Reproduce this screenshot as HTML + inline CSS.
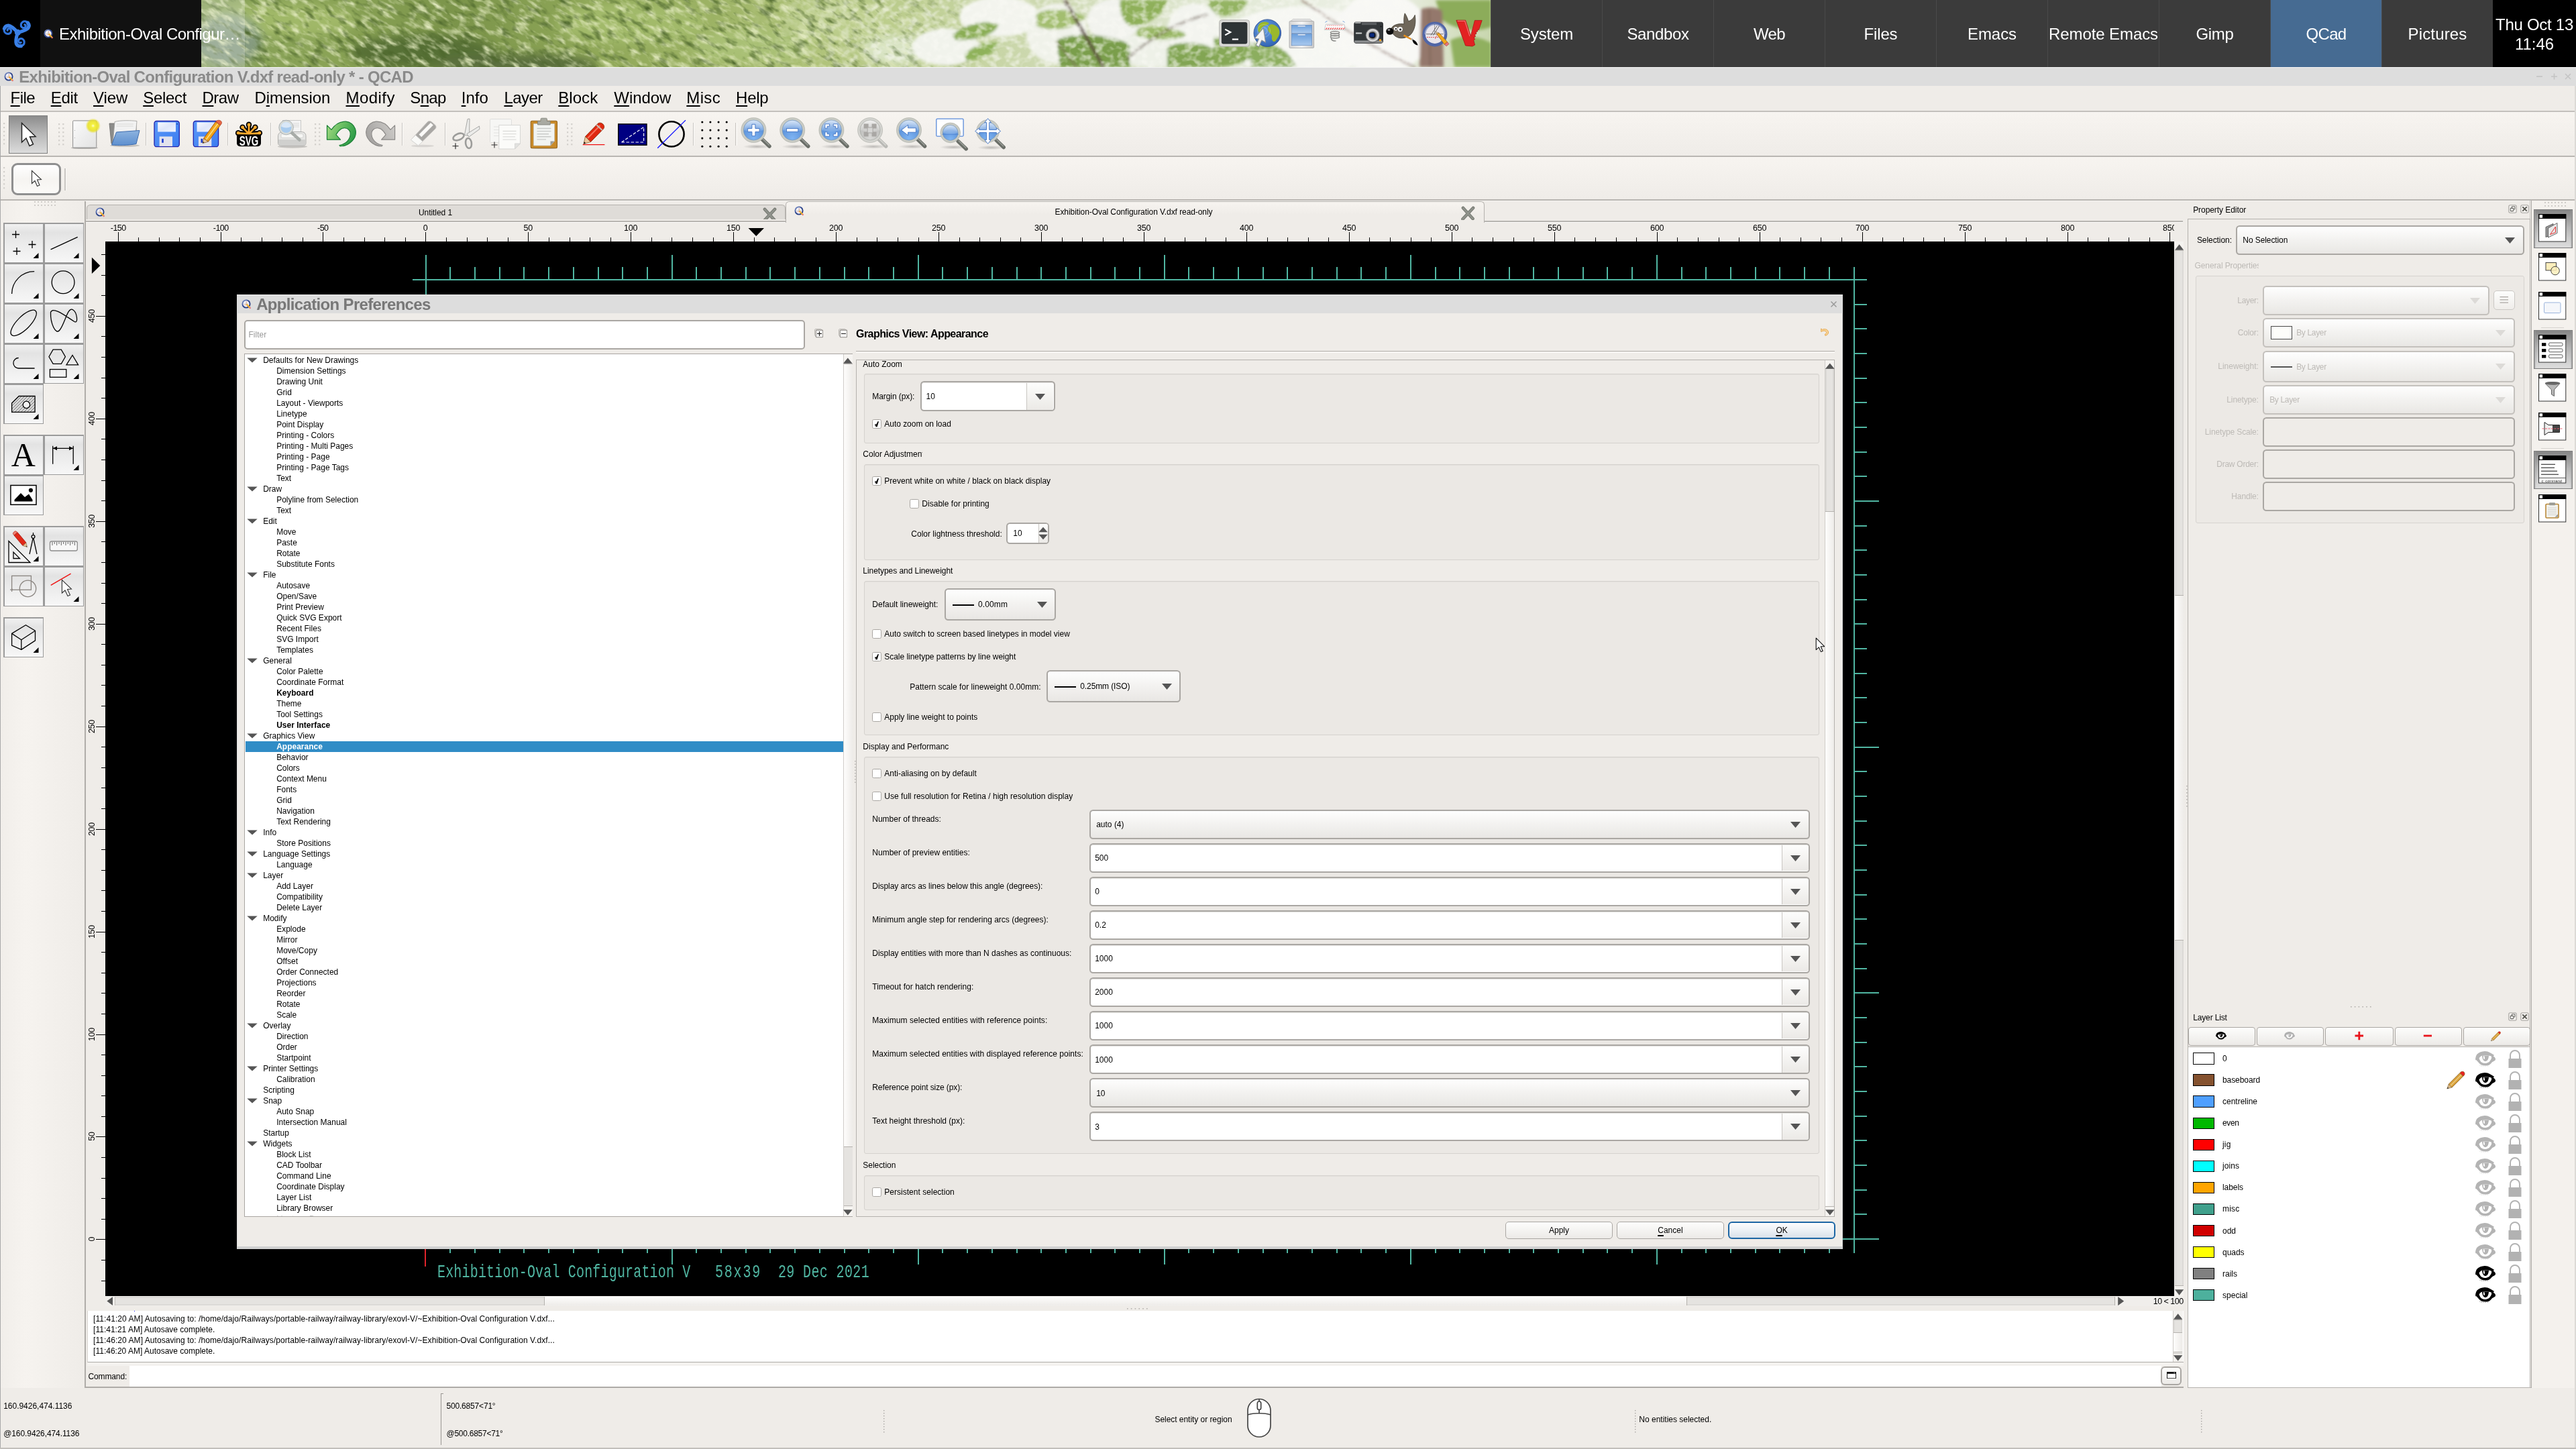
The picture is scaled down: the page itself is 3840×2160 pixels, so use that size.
<!DOCTYPE html>
<html><head><meta charset="utf-8"><title>QCAD</title>
<style>

html,body{margin:0;padding:0;}
body{width:3840px;height:2160px;overflow:hidden;position:relative;background:#efece8;will-change:transform;font-family:"Liberation Sans",sans-serif;}
div,svg{position:absolute;box-sizing:border-box;}
.t{white-space:nowrap;}
.t span{display:inline-block;}
u{text-decoration:underline;text-decoration-thickness:2px;text-underline-offset:3px;}

</style></head>
<body>
<div style="left:0px;top:0px;width:3840px;height:100px;background:#000;"></div>
<svg style="left:300px;top:0px;" width="1922" height="100" viewBox="0 0 1922 100">
<defs>
<clipPath id="pc"><rect x="0" y="0" width="1923" height="100"/></clipPath>
<filter id="pb" x="-5%" y="-60%" width="110%" height="220%"><feGaussianBlur stdDeviation="7"/></filter>
<filter id="pb2" x="-5%" y="-60%" width="110%" height="220%"><feGaussianBlur stdDeviation="2.2"/></filter>
<filter id="nlite" x="0" y="0" width="100%" height="100%" color-interpolation-filters="sRGB">
<feTurbulence type="fractalNoise" baseFrequency="0.05 0.12" numOctaves="3" seed="11"/>
<feColorMatrix type="matrix" values="0 0 0 0 0.88  0 0 0 0 0.91  0 0 0 0 0.74  2.6 0 0 0 -1.22"/>
</filter>
<filter id="ndark" x="0" y="0" width="100%" height="100%" color-interpolation-filters="sRGB">
<feTurbulence type="fractalNoise" baseFrequency="0.045 0.11" numOctaves="3" seed="29"/>
<feColorMatrix type="matrix" values="0 0 0 0 0.30  0 0 0 0 0.40  0 0 0 0 0.17  0 2.6 0 0 -1.36"/>
</filter>
<filter id="nwhite" x="0" y="0" width="100%" height="100%" color-interpolation-filters="sRGB">
<feTurbulence type="fractalNoise" baseFrequency="0.09 0.11" numOctaves="2" seed="5"/>
<feColorMatrix type="matrix" values="0 0 0 0 0.98  0 0 0 0 0.98  0 0 0 0 0.96  0 0 3.0 0 -1.25"/>
</filter>
<linearGradient id="pg" x1="0" x2="1" y1="0" y2="0">
<stop offset="0" stop-color="#86a058"/><stop offset="0.10" stop-color="#8aa356"/><stop offset="0.20" stop-color="#7b944a"/><stop offset="0.30" stop-color="#8fa758"/>
<stop offset="0.40" stop-color="#9db365"/><stop offset="0.48" stop-color="#b0c37a"/><stop offset="0.56" stop-color="#bfcf94"/><stop offset="0.66" stop-color="#cfdab4"/><stop offset="0.80" stop-color="#e2e9d6"/><stop offset="0.92" stop-color="#eef1e8"/><stop offset="1" stop-color="#c8d6ae"/>
</linearGradient>
<linearGradient id="fadeL" x1="0" x2="1" y1="0" y2="0"><stop offset="0" stop-color="#fff" stop-opacity="1"/><stop offset="0.78" stop-color="#fff" stop-opacity="1"/><stop offset="1" stop-color="#fff" stop-opacity="0"/></linearGradient>
<mask id="mL"><rect x="0" y="0" width="1200" height="100" fill="url(#fadeL)"/></mask>
<linearGradient id="fadeR" x1="0" x2="1" y1="0" y2="0"><stop offset="0" stop-color="#fff" stop-opacity="0"/><stop offset="0.2" stop-color="#fff" stop-opacity="1"/><stop offset="1" stop-color="#fff" stop-opacity="1"/></linearGradient>
<mask id="mR"><rect x="800" y="0" width="1123" height="100" fill="url(#fadeR)"/></mask>
</defs>
<g clip-path="url(#pc)">
<rect x="0" y="0" width="1923" height="100" fill="url(#pg)"/>
<g filter="url(#pb)">
<ellipse cx="330" cy="78" rx="110" ry="26" fill="#566f34"/>
<ellipse cx="470" cy="95" rx="120" ry="14" fill="#5a6e3e"/>
<ellipse cx="120" cy="30" rx="110" ry="24" fill="#a0b868"/>
<ellipse cx="40" cy="60" rx="50" ry="40" fill="#8496a0" opacity="0.55"/>
<ellipse cx="640" cy="35" rx="110" ry="30" fill="#a2ba6a"/>
<ellipse cx="820" cy="70" rx="90" ry="26" fill="#a9c074"/>
<ellipse cx="960" cy="30" rx="90" ry="28" fill="#bccd8c"/>
<ellipse cx="1035" cy="75" rx="50" ry="22" fill="#d9e4c4"/>
</g>
<g mask="url(#mL)"><rect x="-300" y="-500" width="1900" height="1200" filter="url(#nlite)" transform="rotate(32 600 50)"/>
<rect x="-300" y="-500" width="1900" height="1200" filter="url(#ndark)" transform="rotate(32 600 50)"/></g>
<g filter="url(#pb2)">
<!-- white flower masses -->
<ellipse cx="1110" cy="70" rx="50" ry="28" fill="#f1f3ec"/>
<ellipse cx="1190" cy="25" rx="60" ry="30" fill="#f3f4ee"/>
<ellipse cx="1275" cy="50" rx="45" ry="45" fill="#f0f2ea"/>
<ellipse cx="1360" cy="30" rx="40" ry="32" fill="#f2f3ee"/>
<ellipse cx="1420" cy="75" rx="55" ry="26" fill="#eef1e8"/>
<ellipse cx="1480" cy="45" rx="40" ry="40" fill="#f3f4ef"/>
<ellipse cx="1640" cy="60" rx="120" ry="50" fill="#f6f7f3"/>
<ellipse cx="1760" cy="50" rx="70" ry="60" fill="#f8f8f5"/>
<!-- green leaves -->
<path d="M1120,52 C1140,34 1170,30 1188,36 C1186,50 1160,60 1125,60 Z" fill="#8aad55"/>
<path d="M1138,82 C1150,66 1176,62 1188,64 C1186,80 1160,90 1140,90 Z" fill="#8fb25a"/>
<path d="M1245,20 C1270,10 1300,14 1318,26 C1300,46 1262,48 1245,38 Z" fill="#a3be70"/>
<path d="M1275,60 C1300,48 1350,50 1384,66 L1384,100 L1280,100 Z" fill="#7a9e4c"/>
<path d="M1370,0 H1440 C1436,22 1410,38 1385,40 C1372,30 1368,14 1370,0 Z" fill="#8fb05a"/>
<path d="M1395,44 C1420,36 1450,40 1470,52 C1450,62 1420,62 1395,54 Z" fill="#9ab866"/>
<path d="M1440,70 C1460,60 1500,62 1520,80 L1520,100 H1440 Z" fill="#82a552"/>
<path d="M1510,56 C1540,50 1568,60 1575,78 C1560,96 1528,100 1508,100 Z" fill="#86a856"/>
<path d="M1565,66 C1590,58 1620,70 1632,100 H1565 Z" fill="#8cae5e"/>
<path d="M1500,0 H1560 C1556,14 1540,24 1520,24 C1508,18 1502,10 1500,0 Z" fill="#94b464"/>
<path d="M1840,0 H1923 V40 C1900,50 1868,44 1850,30 Z" fill="#8cac5a"/>
<path d="M1862,60 C1880,50 1905,54 1923,64 V100 H1868 Z" fill="#90b05e"/>
<!-- branches -->
<path d="M1287,0 L1345,100" stroke="#5c4a40" stroke-width="4.5" fill="none"/>
<path d="M1380,88 C1420,50 1470,28 1500,22" stroke="#6a564a" stroke-width="2.5" fill="none"/>
<path d="M1275,62 L1305,100" stroke="#7a665a" stroke-width="2" fill="none"/>
<path d="M1640,0 C1700,40 1760,80 1810,100" stroke="#7a5a50" stroke-width="2.2" fill="none" opacity="0.8"/>
<!-- trunk -->
<path d="M1818,14 C1826,10 1842,10 1850,16 L1852,100 H1816 Z" fill="#94786c"/>
<path d="M1830,14 L1832,100" stroke="#7a6054" stroke-width="3" fill="none" opacity="0.6"/>
</g>
<g mask="url(#mR)" opacity="0.55"><rect x="800" y="0" width="1000" height="100" filter="url(#nwhite)"/></g>
</g>
</svg>
<div style="left:0px;top:0px;width:60px;height:100px;background:#000;"></div>
<div style="left:60px;top:0px;width:240px;height:100px;background:#111;"></div>
<div style="left:300px;top:0px;width:65px;height:100px;background:rgba(255,255,255,0.22);"></div>
<svg style="left:0px;top:20px;" width="60" height="60" viewBox="0 20 60 60"><defs><linearGradient id="lg" x1="0" y1="0" x2="1" y2="1"><stop offset="0" stop-color="#6aa8f8"/><stop offset="1" stop-color="#1f5fc8"/></linearGradient></defs><g transform="translate(26.4,48.4) rotate(-43.7)" fill="none" stroke-linecap="round"><path d="M0,0 C5,3 12,6.6 16,6 C20.5,5 21.6,0 20,-3.5 C18.5,-6.6 14,-7 11.5,-5 C9,-3 9.5,1 12.5,2 C15,2.6 16.5,0.6 15.6,-1.2" stroke="#2f74dc" stroke-width="3.1"/><path d="M0,0 C5,3 12,6.6 16,6 C19,5.3 20.6,3 20.8,0" stroke="#3a80e6" stroke-width="5.2"/></g><g transform="translate(26.4,48.4) rotate(-163.7)" fill="none" stroke-linecap="round"><path d="M0,0 C5,3 12,6.6 16,6 C20.5,5 21.6,0 20,-3.5 C18.5,-6.6 14,-7 11.5,-5 C9,-3 9.5,1 12.5,2 C15,2.6 16.5,0.6 15.6,-1.2" stroke="#2f74dc" stroke-width="3.1"/><path d="M0,0 C5,3 12,6.6 16,6 C19,5.3 20.6,3 20.8,0" stroke="#3a80e6" stroke-width="5.2"/></g><g transform="translate(26.4,48.4) rotate(76.3)" fill="none" stroke-linecap="round"><path d="M0,0 C5,3 12,6.6 16,6 C20.5,5 21.6,0 20,-3.5 C18.5,-6.6 14,-7 11.5,-5 C9,-3 9.5,1 12.5,2 C15,2.6 16.5,0.6 15.6,-1.2" stroke="#2f74dc" stroke-width="3.1"/><path d="M0,0 C5,3 12,6.6 16,6 C19,5.3 20.6,3 20.8,0" stroke="#3a80e6" stroke-width="5.2"/></g><circle cx="26.4" cy="48.4" r="4.6" fill="#3a80e6"/></svg>
<svg style="left:64.7px;top:42.7px;" width="16" height="16" viewBox="0 0 16 16"><defs><linearGradient id="qr" x1="0" y1="0" x2="1" y2="1"><stop offset="0" stop-color="#8a9cd0"/><stop offset="0.45" stop-color="#2f478f"/><stop offset="1" stop-color="#24397c"/></linearGradient></defs><circle cx="7" cy="7" r="5.6" fill="#f6f5f6" stroke="url(#qr)" stroke-width="1.9"/><path d="M3.6,7.2 H10.2 M7,3 V8.6" stroke="#a8a6a8" stroke-width="0.6" fill="none"/><path d="M4,8.8 H8.6 M8.2,3.6 L7.2,6" stroke="#e88" stroke-width="0.6" fill="none"/><path d="M7.4,7.3 L12.4,12.7" stroke="#f2a21a" stroke-width="2.1" stroke-linecap="butt"/><path d="M7.9,7.3 L12.6,12.2" stroke="#fbd86a" stroke-width="0.7"/><path d="M12.3,12.5 L13.5,13.8" stroke="#e8707a" stroke-width="2.1"/><path d="M6.9,6.6 L7.9,8.1 L8.4,7.2 Z" fill="#d8c0a0"/></svg>
<div class="t" style="top:34.50px;font-size:24px;line-height:31px;color:#fff;letter-spacing:-0.512px;left:88px;"><span id="t0">Exhibition-Oval Configur…</span></div>
<div style="left:2222px;top:0px;width:166px;height:100px;background:#3b3b3b;border-left:1px solid #4a4a4a;"></div>
<div style="left:2388px;top:0px;width:166px;height:100px;background:#3b3b3b;border-left:1px solid #4a4a4a;"></div>
<div style="left:2554px;top:0px;width:166px;height:100px;background:#3b3b3b;border-left:1px solid #4a4a4a;"></div>
<div style="left:2720px;top:0px;width:166px;height:100px;background:#3b3b3b;border-left:1px solid #4a4a4a;"></div>
<div style="left:2886px;top:0px;width:166px;height:100px;background:#3b3b3b;border-left:1px solid #4a4a4a;"></div>
<div style="left:3052px;top:0px;width:166px;height:100px;background:#3b3b3b;border-left:1px solid #4a4a4a;"></div>
<div style="left:3218px;top:0px;width:166px;height:100px;background:#3b3b3b;border-left:1px solid #4a4a4a;"></div>
<div style="left:3384px;top:0px;width:166px;height:100px;background:#466b92;border-left:1px solid #4a4a4a;"></div>
<div style="left:3550px;top:0px;width:166px;height:100px;background:#3b3b3b;border-left:1px solid #4a4a4a;"></div>
<div class="t" style="top:34.50px;font-size:24px;line-height:31px;color:#fff;letter-spacing:-0.169px;left:1305.5px;width:2000px;text-align:center;"><span id="t1">System</span></div>
<div class="t" style="top:34.50px;font-size:24px;line-height:31px;color:#fff;letter-spacing:-0.393px;left:1471.5px;width:2000px;text-align:center;"><span id="t2">Sandbox</span></div>
<div class="t" style="top:34.50px;font-size:24px;line-height:31px;color:#fff;letter-spacing:-0.641px;left:1637.5px;width:2000px;text-align:center;"><span id="t3">Web</span></div>
<div class="t" style="top:34.50px;font-size:24px;line-height:31px;color:#fff;letter-spacing:-0.134px;left:1803.5px;width:2000px;text-align:center;"><span id="t4">Files</span></div>
<div class="t" style="top:34.50px;font-size:24px;line-height:31px;color:#fff;letter-spacing:-0.072px;left:1969.5px;width:2000px;text-align:center;"><span id="t5">Emacs</span></div>
<div class="t" style="top:34.50px;font-size:24px;line-height:31px;color:#fff;letter-spacing:-0.089px;left:2135.5px;width:2000px;text-align:center;"><span id="t6">Remote Emacs</span></div>
<div class="t" style="top:34.50px;font-size:24px;line-height:31px;color:#fff;letter-spacing:-0.336px;left:2301.5px;width:2000px;text-align:center;"><span id="t7">Gimp</span></div>
<div class="t" style="top:34.50px;font-size:24px;line-height:31px;color:#fff;letter-spacing:-0.676px;left:2467.5px;width:2000px;text-align:center;"><span id="t8">QCad</span></div>
<div class="t" style="top:34.50px;font-size:24px;line-height:31px;color:#fff;letter-spacing:0.162px;left:2633.5px;width:2000px;text-align:center;"><span id="t9">Pictures</span></div>
<div style="left:3716px;top:0px;width:124px;height:100px;background:#000;"></div>
<div class="t" style="top:20.50px;font-size:24px;line-height:31px;color:#fff;letter-spacing:-0.273px;left:2778px;width:2000px;text-align:center;"><span id="t10">Thu Oct 13</span></div>
<div class="t" style="top:49.50px;font-size:24px;line-height:31px;color:#fff;letter-spacing:-0.056px;left:2778px;width:2000px;text-align:center;"><span id="t11">11:46</span></div>
<svg style="left:1800px;top:0px;" width="424" height="100" viewBox="1800 0 424 100"><defs>
<radialGradient id="glb" cx="0.4" cy="0.35" r="0.75"><stop offset="0" stop-color="#6aa0e4"/><stop offset="1" stop-color="#2a5cae"/></radialGradient>
<linearGradient id="drw" x1="0" y1="0" x2="0" y2="1"><stop offset="0" stop-color="#6b9fdc"/><stop offset="1" stop-color="#a9c9ee"/></linearGradient>
<linearGradient id="cab" x1="0" y1="0" x2="1" y2="0"><stop offset="0" stop-color="#d4d4d4"/><stop offset="0.5" stop-color="#f4f4f4"/><stop offset="1" stop-color="#c8c8c8"/></linearGradient>
<radialGradient id="lnz" cx="0.5" cy="0.5" r="0.5"><stop offset="0" stop-color="#1a3a8a"/><stop offset="0.35" stop-color="#222"/><stop offset="0.55" stop-color="#9a9a9a"/><stop offset="0.8" stop-color="#e8e8e8"/><stop offset="1" stop-color="#8a8a8a"/></radialGradient>
</defs><rect x="1817.6" y="29.8" width="45" height="39.5" rx="3.5" fill="#d9d9d6" stroke="#a9a9a6" stroke-width="0.8"/><rect x="1821.3" y="33.6" width="37.6" height="31.4" rx="2" fill="#2e3436" stroke="#1a1e20" stroke-width="0.8"/><path d="M1826.2,43.6 L1834.2,48 L1826.2,52.4" fill="none" stroke="#fff" stroke-width="2.2"/><path d="M1836.8,58.6 H1846" stroke="#fff" stroke-width="2.2"/><circle cx="1889.3" cy="49.2" r="20.3" fill="url(#glb)" stroke="#2a4a8a" stroke-width="0.8"/><path d="M1878,35 C1884,31 1890,32.5 1892,35 C1889,38 1884,37.5 1881,41.5 C1879,44.5 1881.5,47.5 1878,49.5 C1874,47 1874,39 1878,35 Z M1894,36.5 C1899,35.5 1905,39.5 1907,45 C1908.5,51 1905,56 1901.5,61 C1898.5,64 1895,60 1896,55.5 C1897,51.5 1893.5,50 1891,47 C1889,43.5 1890,38 1894,36.5 Z" fill="#9ab82c"/><circle cx="1884" cy="46" r="5" fill="none" stroke="#fff" stroke-opacity="0.35" stroke-width="1"/><circle cx="1884" cy="46" r="9.5" fill="none" stroke="#fff" stroke-opacity="0.25" stroke-width="1"/><path d="M1883.3,41.6 L1886.6,63.2 L1880.8,60 L1876.6,69.8 L1872.2,67.6 L1876.4,58 L1870.2,57.2 Z" fill="#f4f4f4" stroke="#8a8f94" stroke-width="1.1" stroke-linejoin="round"/><path d="M1924,31.5 L1927.5,28.5 H1953 L1956.5,31.5 Z" fill="#e6e6e6" stroke="#b0b0b0" stroke-width="0.6"/><rect x="1922" y="31.5" width="36.6" height="40" rx="1.2" fill="url(#cab)" stroke="#a4a4a4" stroke-width="0.8"/><rect x="1925.2" y="37.4" width="30.2" height="12" fill="url(#drw)" stroke="#5a82b8" stroke-width="0.6"/><rect x="1925.2" y="50.4" width="30.2" height="17.4" fill="url(#drw)" stroke="#5a82b8" stroke-width="0.6"/><rect x="1934.5" y="38" width="11.5" height="1.8" rx="0.9" fill="#f4f6fa" stroke="#7a9ac8" stroke-width="0.4"/><rect x="1934.5" y="50.9" width="11.5" height="1.8" rx="0.9" fill="#f4f6fa" stroke="#7a9ac8" stroke-width="0.4"/><path d="M1976.5,36.2 H2003.5 L2005.6,44.4 H1974.2 Z" fill="#fbfbfb" stroke="#b8b8b8" stroke-width="0.7"/><path d="M1975.6,43.8 l1.8,-2.4 h1.5 l-1.8,2.4 Z" fill="#e83030"/><path d="M1978.8,43.8 l1.8,-2.4 h1.5 l-1.8,2.4 Z" fill="#e83030"/><path d="M1982.1,43.8 l1.8,-2.4 h1.5 l-1.8,2.4 Z" fill="#e83030"/><path d="M1985.3,43.8 l1.8,-2.4 h1.5 l-1.8,2.4 Z" fill="#e83030"/><path d="M1988.6,43.8 l1.8,-2.4 h1.5 l-1.8,2.4 Z" fill="#e83030"/><path d="M1991.8,43.8 l1.8,-2.4 h1.5 l-1.8,2.4 Z" fill="#e83030"/><path d="M1995.1,43.8 l1.8,-2.4 h1.5 l-1.8,2.4 Z" fill="#e83030"/><path d="M1998.3,43.8 l1.8,-2.4 h1.5 l-1.8,2.4 Z" fill="#e83030"/><path d="M2001.6,43.8 l1.8,-2.4 h1.5 l-1.8,2.4 Z" fill="#e83030"/><path d="M1978.0,38.8 l1.3,-1.8 h1.2 l-1.3,1.8 Z" fill="#f09090"/><path d="M1981.0,38.8 l1.3,-1.8 h1.2 l-1.3,1.8 Z" fill="#f09090"/><path d="M1984.0,38.8 l1.3,-1.8 h1.2 l-1.3,1.8 Z" fill="#f09090"/><path d="M1987.0,38.8 l1.3,-1.8 h1.2 l-1.3,1.8 Z" fill="#f09090"/><path d="M1990.0,38.8 l1.3,-1.8 h1.2 l-1.3,1.8 Z" fill="#f09090"/><path d="M1993.0,38.8 l1.3,-1.8 h1.2 l-1.3,1.8 Z" fill="#f09090"/><path d="M1996.0,38.8 l1.3,-1.8 h1.2 l-1.3,1.8 Z" fill="#f09090"/><path d="M1999.0,38.8 l1.3,-1.8 h1.2 l-1.3,1.8 Z" fill="#f09090"/><g fill="none" stroke="#8e8e8c" stroke-width="1.5"><ellipse cx="1990" cy="48.6" rx="6.6" ry="1.9"/><ellipse cx="1990" cy="51.8" rx="6.6" ry="1.9"/><ellipse cx="1990" cy="55" rx="6.6" ry="1.9"/><path d="M1984.5,56.5 C1984,60 1988,61.5 1991.5,61"/></g><path d="M1975.5,33.6 q1,-2.2 3,-1.8 M2004.5,33.6 q-1,-2.2 -3,-1.8" stroke="#6a9ad8" stroke-width="0.9" fill="none"/><rect x="2018.8" y="33.2" width="42.6" height="31" rx="2.2" fill="#34383a" stroke="#1c1e20" stroke-width="0.9"/><rect x="2019.6" y="32.6" width="9" height="2.4" rx="1" fill="#a0a2a2"/><rect x="2030" y="33.6" width="22" height="3.6" fill="#5a5e60"/><rect x="2019.3" y="60.4" width="41.6" height="3.4" fill="#8e9092"/><rect x="2020.8" y="48.6" width="9.5" height="1.8" rx="0.9" fill="#cfd1d1"/><circle cx="2046.2" cy="52.6" r="10.4" fill="url(#lnz)" stroke="#5a5c5e" stroke-width="0.8"/><rect x="2041.6" y="49" width="7.6" height="6.6" rx="1.2" fill="#0a2a7a" stroke="#000" stroke-width="0.8"/><rect x="2056" y="58.4" width="3" height="3" fill="#f0a020"/><circle cx="2058.6" cy="39.4" r="1" fill="#111"/><path d="M2074.5,41.5 C2077.5,36.5 2086,34.8 2093,35.8 C2092.5,29 2092.8,24 2094.2,19.8 C2097,24 2098.5,28.5 2099.5,31.6 C2103.5,30.6 2107,27.5 2109.2,22.4 C2110.8,31.6 2110,41.6 2104.6,49.4 C2100.6,55.2 2091.6,58.2 2084.6,56.2 C2078.6,54.4 2073.2,49 2074.5,41.5 Z" fill="#6f675a" stroke="#3e382e" stroke-width="0.8"/><ellipse cx="2071.8" cy="46.6" rx="5.6" ry="5.2" fill="#0c0c0c"/><ellipse cx="2070.4" cy="44.6" rx="2" ry="1.3" fill="#9a9a9a"/><circle cx="2080.6" cy="42.8" r="2.8" fill="#f4f4f4"/><circle cx="2087.2" cy="43.6" r="3.6" fill="#f4f4f4"/><circle cx="2080.9" cy="43.1" r="1.2" fill="#111"/><circle cx="2087.5" cy="44" r="1.5" fill="#111"/><path d="M2092.5,52.6 L2104.4,58.8" stroke="#e8901c" stroke-width="2.4"/><path d="M2104,57.2 L2106.6,60.4" stroke="#b8b8b8" stroke-width="2.6"/><path d="M2105.6,59 C2109.6,59.6 2112.6,63.6 2113.6,67.6 C2109.6,66.8 2105.6,64.4 2105.6,59 Z" fill="#0a0a0a"/><circle cx="2138.9" cy="50.9" r="16.3" fill="#e9e5ea" stroke="#5166a6" stroke-width="4.4"/><path d="M2124.5,50.9 A14.4,14.4 0 0 1 2153.3,50.9" fill="none" stroke="#9aa6cc" stroke-width="2.2" opacity="0.8"/><g fill="none" stroke-width="0.9"><path d="M2126,50.8 H2151.5" stroke="#666"/><path d="M2138.5,36.6 V50.8" stroke="#666" stroke-dasharray="1.5 1"/><path d="M2133,52.6 L2142,38.6 M2136.5,52.6 L2145.5,38.6" stroke="#555"/><path d="M2127,55.6 H2150" stroke="#e04040" stroke-dasharray="2 1"/><path d="M2139.4,58 L2143,50.5" stroke="#e04040" stroke-dasharray="2 1"/></g><path d="M2141.6,50.6 L2145,49 L2157.6,62.6 L2153.2,66.2 Z" fill="#f2a81c" stroke="#9a5c0a" stroke-width="0.7"/><path d="M2153.2,66.2 L2157.6,62.6 L2160,65.6 L2156.2,68.8 Z" fill="#e87878" stroke="#a03838" stroke-width="0.6"/><path d="M2141.6,50.6 L2145,49 L2140.4,47.4 Z" fill="#ecd0a8" stroke="#7a5a28" stroke-width="0.5"/><path d="M2170.8,30.2 H2184.6 L2192.4,53.6 L2198.4,30.4 H2209.2 L2204.4,44.6 L2202.2,44 L2202.6,47 L2200.2,47.4 L2200.8,50.4 L2198.4,51.4 L2199.4,54.6 L2197,55.8 L2198.6,58.6 L2196.8,60.4 L2198.6,67 L2194.8,69 L2184.6,68 Z" fill="#e22222" stroke="#a81414" stroke-width="0.8"/><path d="M2172.6,31.4 H2183.6 L2191,54" fill="none" stroke="#f47070" stroke-width="1.2"/></svg>
<div style="left:0px;top:100px;width:3840px;height:28px;background:#dddddd;border-top:1px solid #f4f4f4;"></div>
<svg style="left:6.4px;top:106.6px;" width="16" height="16" viewBox="0 0 16 16"><defs><linearGradient id="qr" x1="0" y1="0" x2="1" y2="1"><stop offset="0" stop-color="#8a9cd0"/><stop offset="0.45" stop-color="#2f478f"/><stop offset="1" stop-color="#24397c"/></linearGradient></defs><circle cx="7" cy="7" r="5.6" fill="#f6f5f6" stroke="url(#qr)" stroke-width="1.9"/><path d="M3.6,7.2 H10.2 M7,3 V8.6" stroke="#a8a6a8" stroke-width="0.6" fill="none"/><path d="M4,8.8 H8.6 M8.2,3.6 L7.2,6" stroke="#e88" stroke-width="0.6" fill="none"/><path d="M7.4,7.3 L12.4,12.7" stroke="#f2a21a" stroke-width="2.1" stroke-linecap="butt"/><path d="M7.9,7.3 L12.6,12.2" stroke="#fbd86a" stroke-width="0.7"/><path d="M12.3,12.5 L13.5,13.8" stroke="#e8707a" stroke-width="2.1"/><path d="M6.9,6.6 L7.9,8.1 L8.4,7.2 Z" fill="#d8c0a0"/></svg>
<div class="t" style="top:99.00px;font-size:24px;line-height:31px;color:#8a8a8a;font-weight:700;letter-spacing:-0.710px;left:28.3px;"><span id="t12">Exhibition-Oval Configuration V.dxf read-only * - QCAD</span></div>
<svg style="left:3776px;top:106px;" width="60" height="16" viewBox="0 0 60 16"><g stroke="#c4c4c4" stroke-width="1.6" fill="none"><path d="M5,8 H14"/><path d="M27,8 H36 M31.5,3.5 V12.5"/><path d="M48,4 L56,12 M56,4 L48,12"/></g></svg>
<div style="left:0px;top:128px;width:3840px;height:38px;background:#efece8;"></div>
<div style="left:0px;top:165px;width:3840px;height:2px;background:#c3c0bc;border-bottom:1px solid #f7f5f2;height:3px;"></div>
<div class="t" style="top:130.10px;font-size:24px;line-height:31px;color:#000;letter-spacing:-0.522px;left:15.6px;"><span id="t13"><u>F</u>ile</span></div>
<div class="t" style="top:130.10px;font-size:24px;line-height:31px;color:#000;letter-spacing:-0.269px;left:75.7px;"><span id="t14"><u>E</u>dit</span></div>
<div class="t" style="top:130.10px;font-size:24px;line-height:31px;color:#000;letter-spacing:-0.048px;left:139px;"><span id="t15"><u>V</u>iew</span></div>
<div class="t" style="top:130.10px;font-size:24px;line-height:31px;color:#000;letter-spacing:-0.303px;left:213.2px;"><span id="t16"><u>S</u>elect</span></div>
<div class="t" style="top:130.10px;font-size:24px;line-height:31px;color:#000;letter-spacing:-0.504px;left:301.5px;"><span id="t17"><u>D</u>raw</span></div>
<div class="t" style="top:130.10px;font-size:24px;line-height:31px;color:#000;letter-spacing:-0.045px;left:379.4px;"><span id="t18">D<u>i</u>mension</span></div>
<div class="t" style="top:130.10px;font-size:24px;line-height:31px;color:#000;letter-spacing:0.449px;left:515.5px;"><span id="t19"><u>M</u>odify</span></div>
<div class="t" style="top:130.10px;font-size:24px;line-height:31px;color:#000;letter-spacing:-0.695px;left:611.3px;"><span id="t20">S<u>n</u>ap</span></div>
<div class="t" style="top:130.10px;font-size:24px;line-height:31px;color:#000;letter-spacing:0.063px;left:687.7px;"><span id="t21"><u>I</u>nfo</span></div>
<div class="t" style="top:130.10px;font-size:24px;line-height:31px;color:#000;letter-spacing:-0.529px;left:751.4px;"><span id="t22"><u>L</u>ayer</span></div>
<div class="t" style="top:130.10px;font-size:24px;line-height:31px;color:#000;letter-spacing:0.039px;left:832.3px;"><span id="t23"><u>B</u>lock</span></div>
<div class="t" style="top:130.10px;font-size:24px;line-height:31px;color:#000;letter-spacing:-0.062px;left:915.3px;"><span id="t24"><u>W</u>indow</span></div>
<div class="t" style="top:130.10px;font-size:24px;line-height:31px;color:#000;letter-spacing:0.339px;left:1023.3px;"><span id="t25"><u>M</u>isc</span></div>
<div class="t" style="top:130.10px;font-size:24px;line-height:31px;color:#000;letter-spacing:-0.219px;left:1097px;"><span id="t26"><u>H</u>elp</span></div>
<div style="left:0px;top:168px;width:3840px;height:64px;background:linear-gradient(#f7f4f0,#efece8);"></div>
<div style="left:0px;top:231.5px;width:3840px;height:2px;background:#b9b6b2;border-bottom:1px solid #f7f5f2;height:3px;"></div>
<div style="left:0px;top:234px;width:3840px;height:63px;background:linear-gradient(#f7f4f0,#efece8);"></div>
<div style="left:0px;top:296.5px;width:3840px;height:2px;background:#b9b6b2;border-bottom:1px solid #f7f5f2;height:3px;"></div>
<div style="left:0px;top:128px;width:1px;height:2032px;background:#a9a9a9;"></div>
<div style="left:3838px;top:128px;width:2px;height:2032px;background:#dcdad6;"></div>
<div style="left:13px;top:172.3px;width:58px;height:57.2px;background:linear-gradient(#8c8c8c,#b5b5b5 45%,#dcdcdc);border:1.3px solid #808080;"></div>
<svg style="left:28px;top:180px;" width="30" height="42" viewBox="0 0 30 42"><path d="M4.5,3.5 V32 L11,26 L16,37.5 L21.5,35 L16.5,24 L25,23.5 Z" fill="#fff" stroke="#222" stroke-width="1.5" stroke-linejoin="miter"/></svg>
<svg style="left:2px;top:183px;" width="6" height="36" viewBox="0 0 6 36"><rect x="3" y="0.0" width="2.2" height="2.2" fill="#d2cfcb"/><rect x="3" y="6.0" width="2.2" height="2.2" fill="#d2cfcb"/><rect x="3" y="12.1" width="2.2" height="2.2" fill="#d2cfcb"/><rect x="3" y="18.1" width="2.2" height="2.2" fill="#d2cfcb"/><rect x="3" y="24.2" width="2.2" height="2.2" fill="#d2cfcb"/><rect x="3" y="30.2" width="2.2" height="2.2" fill="#d2cfcb"/></svg>
<svg style="left:87px;top:183.5px;" width="10" height="36.599999999999994" viewBox="0 0 10 36.599999999999994"><rect x="0.0" y="0.0" width="2.2" height="2.2" fill="#d2cfcb"/><rect x="0.0" y="6.0" width="2.2" height="2.2" fill="#d2cfcb"/><rect x="0.0" y="12.1" width="2.2" height="2.2" fill="#d2cfcb"/><rect x="0.0" y="18.1" width="2.2" height="2.2" fill="#d2cfcb"/><rect x="0.0" y="24.2" width="2.2" height="2.2" fill="#d2cfcb"/><rect x="0.0" y="30.2" width="2.2" height="2.2" fill="#d2cfcb"/><rect x="6.2" y="0.0" width="2.2" height="2.2" fill="#d2cfcb"/><rect x="6.2" y="6.0" width="2.2" height="2.2" fill="#d2cfcb"/><rect x="6.2" y="12.1" width="2.2" height="2.2" fill="#d2cfcb"/><rect x="6.2" y="18.1" width="2.2" height="2.2" fill="#d2cfcb"/><rect x="6.2" y="24.2" width="2.2" height="2.2" fill="#d2cfcb"/><rect x="6.2" y="30.2" width="2.2" height="2.2" fill="#d2cfcb"/></svg>
<svg style="left:468.7px;top:183.5px;" width="10" height="36.599999999999994" viewBox="0 0 10 36.599999999999994"><rect x="0.0" y="0.0" width="2.2" height="2.2" fill="#d2cfcb"/><rect x="0.0" y="6.0" width="2.2" height="2.2" fill="#d2cfcb"/><rect x="0.0" y="12.1" width="2.2" height="2.2" fill="#d2cfcb"/><rect x="0.0" y="18.1" width="2.2" height="2.2" fill="#d2cfcb"/><rect x="0.0" y="24.2" width="2.2" height="2.2" fill="#d2cfcb"/><rect x="0.0" y="30.2" width="2.2" height="2.2" fill="#d2cfcb"/><rect x="6.2" y="0.0" width="2.2" height="2.2" fill="#d2cfcb"/><rect x="6.2" y="6.0" width="2.2" height="2.2" fill="#d2cfcb"/><rect x="6.2" y="12.1" width="2.2" height="2.2" fill="#d2cfcb"/><rect x="6.2" y="18.1" width="2.2" height="2.2" fill="#d2cfcb"/><rect x="6.2" y="24.2" width="2.2" height="2.2" fill="#d2cfcb"/><rect x="6.2" y="30.2" width="2.2" height="2.2" fill="#d2cfcb"/></svg>
<svg style="left:844.8px;top:183.5px;" width="10" height="36.599999999999994" viewBox="0 0 10 36.599999999999994"><rect x="0.0" y="0.0" width="2.2" height="2.2" fill="#d2cfcb"/><rect x="0.0" y="6.0" width="2.2" height="2.2" fill="#d2cfcb"/><rect x="0.0" y="12.1" width="2.2" height="2.2" fill="#d2cfcb"/><rect x="0.0" y="18.1" width="2.2" height="2.2" fill="#d2cfcb"/><rect x="0.0" y="24.2" width="2.2" height="2.2" fill="#d2cfcb"/><rect x="0.0" y="30.2" width="2.2" height="2.2" fill="#d2cfcb"/><rect x="6.2" y="0.0" width="2.2" height="2.2" fill="#d2cfcb"/><rect x="6.2" y="6.0" width="2.2" height="2.2" fill="#d2cfcb"/><rect x="6.2" y="12.1" width="2.2" height="2.2" fill="#d2cfcb"/><rect x="6.2" y="18.1" width="2.2" height="2.2" fill="#d2cfcb"/><rect x="6.2" y="24.2" width="2.2" height="2.2" fill="#d2cfcb"/><rect x="6.2" y="30.2" width="2.2" height="2.2" fill="#d2cfcb"/></svg>
<div style="left:216.5px;top:183px;width:1.3px;height:33.5px;background:#c9c6c2;"></div>
<div style="left:217.8px;top:183px;width:1.3px;height:33.5px;background:#fbfaf8;"></div>
<div style="left:338.5px;top:183px;width:1.3px;height:33.5px;background:#c9c6c2;"></div>
<div style="left:339.8px;top:183px;width:1.3px;height:33.5px;background:#fbfaf8;"></div>
<div style="left:402.7px;top:183px;width:1.3px;height:33.5px;background:#c9c6c2;"></div>
<div style="left:404.0px;top:183px;width:1.3px;height:33.5px;background:#fbfaf8;"></div>
<div style="left:598.9px;top:183px;width:1.3px;height:33.5px;background:#c9c6c2;"></div>
<div style="left:600.1999999999999px;top:183px;width:1.3px;height:33.5px;background:#fbfaf8;"></div>
<div style="left:662.5px;top:183px;width:1.3px;height:33.5px;background:#c9c6c2;"></div>
<div style="left:663.8px;top:183px;width:1.3px;height:33.5px;background:#fbfaf8;"></div>
<div style="left:1032.5px;top:183px;width:1.3px;height:33.5px;background:#c9c6c2;"></div>
<div style="left:1033.8px;top:183px;width:1.3px;height:33.5px;background:#fbfaf8;"></div>
<div style="left:1096.2px;top:183px;width:1.3px;height:33.5px;background:#c9c6c2;"></div>
<div style="left:1097.5px;top:183px;width:1.3px;height:33.5px;background:#fbfaf8;"></div>
<svg style="left:0px;top:166px;" width="1540" height="68" viewBox="0 166 1540 68"><defs>
<radialGradient id="lensb" cx="0.5" cy="0.85" r="0.9"><stop offset="0" stop-color="#7fb4f2"/><stop offset="0.55" stop-color="#5f95dc"/><stop offset="1" stop-color="#9cc0ee"/></radialGradient>
<radialGradient id="lensg" cx="0.5" cy="0.85" r="0.9"><stop offset="0" stop-color="#d8d8d6"/><stop offset="0.55" stop-color="#c2c2c0"/><stop offset="1" stop-color="#dcdcda"/></radialGradient>
<linearGradient id="lensh" x1="0" y1="0" x2="0" y2="1"><stop offset="0" stop-color="#fff" stop-opacity="0.65"/><stop offset="1" stop-color="#fff" stop-opacity="0.08"/></linearGradient>
<radialGradient id="shad" cx="0.5" cy="0.5" r="0.5"><stop offset="0" stop-color="#000" stop-opacity="0.22"/><stop offset="1" stop-color="#000" stop-opacity="0"/></radialGradient>
<linearGradient id="pg1" x1="0" y1="0" x2="1" y2="1"><stop offset="0" stop-color="#fbfbfb"/><stop offset="1" stop-color="#e2e2e2"/></linearGradient>
<radialGradient id="glow" cx="0.5" cy="0.5" r="0.5"><stop offset="0" stop-color="#ffffd0"/><stop offset="0.25" stop-color="#f4f040"/><stop offset="0.7" stop-color="#e8e020" stop-opacity="0.85"/><stop offset="1" stop-color="#e8e020" stop-opacity="0"/></radialGradient>
<linearGradient id="fold" x1="0" y1="0" x2="0" y2="1"><stop offset="0" stop-color="#8db3df"/><stop offset="1" stop-color="#5d8fcf"/></linearGradient>
<linearGradient id="flop" x1="0" y1="0" x2="1" y2="1"><stop offset="0" stop-color="#5a98f8"/><stop offset="1" stop-color="#3c7cf0"/></linearGradient>
<linearGradient id="flab" x1="0" y1="0" x2="1" y2="1"><stop offset="0" stop-color="#f8faff"/><stop offset="0.5" stop-color="#dfe6fa"/><stop offset="1" stop-color="#f0f4ff"/></linearGradient>
<linearGradient id="gr1" x1="0" y1="0.2" x2="1" y2="0.6"><stop offset="0" stop-color="#9fd880"/><stop offset="0.55" stop-color="#5cb85c"/><stop offset="1" stop-color="#2a9a46"/></linearGradient>
<linearGradient id="gy1" x1="0" y1="0.2" x2="1" y2="0.6"><stop offset="0" stop-color="#cdcbc8"/><stop offset="1" stop-color="#a4a2a0"/></linearGradient>
</defs><ellipse cx="126" cy="220.5" rx="20" ry="1.6" fill="#000" opacity="0.25"/><rect x="108.6" y="179.9" width="35.2" height="40.2" rx="1.2" fill="url(#pg1)" stroke="#8e8e8e" stroke-width="1"/><circle cx="138.7" cy="187.5" r="11.2" fill="url(#glow)"/><circle cx="111.5" cy="194.5" r="0.6" fill="#aaa"/><circle cx="111.5" cy="205.5" r="0.6" fill="#aaa"/><ellipse cx="186" cy="217" rx="22" ry="2" fill="#000" opacity="0.18"/><path d="M163,184 H172 L174,187 H203 V214 H166 Z" fill="#8c8c8a" stroke="#6a6a68" stroke-width="0.8"/><path d="M171,181.5 C180,179 196,179.5 204,180.5 L202,203 L168.5,210 Z" fill="#f2f2f2" stroke="#9a9a98" stroke-width="0.8"/><path d="M174,185 H199 M173.6,188 H198.6" stroke="#d4d4d2" stroke-width="0.8"/><path d="M173.5,197 L208,194.5 L203,214.5 C190,217 176,217 166.5,216 Z" fill="url(#fold)" stroke="#3e6cae" stroke-width="1"/><rect x="230" y="180.5" width="37.3" height="38.2" rx="3.5" fill="url(#flop)" stroke="#2222aa" stroke-width="1.3"/><path d="M235.2,182.4 H262 V196.5 H235.2 Z" fill="url(#flab)"/><rect x="263.3" y="184" width="1.6" height="1.6" fill="#1a3a9a"/><path d="M237.6,203.5 H257 V218 H237.6 Z" fill="#e2e2ec"/><rect x="241.2" y="206.8" width="2.6" height="6" fill="#1a3ad0"/><rect x="288.3" y="180.5" width="37.3" height="38.2" rx="3.5" fill="url(#flop)" stroke="#2222aa" stroke-width="1.3"/><path d="M293.5,182.4 H320.3 V196.5 H293.5 Z" fill="url(#flab)"/><rect x="321.6" y="184" width="1.6" height="1.6" fill="#1a3a9a"/><path d="M295.90000000000003,203.5 H315.3 V218 H295.90000000000003 Z" fill="#e2e2ec"/><rect x="299.5" y="206.8" width="2.6" height="6" fill="#1a3ad0"/><path d="M303.5,206.5 L321.5,181.5 L328.5,186.5 L310.5,211 Z" fill="#f0a418" stroke="#a04808" stroke-width="0.9"/><path d="M307,208.5 L325,184" stroke="#fbd878" stroke-width="1.8"/><path d="M321.5,181.5 C323.5,179 327,178.6 329.3,180.4 C331.3,182.2 330.5,184.8 328.5,186.5 Z" fill="#e86848" stroke="#a03018" stroke-width="0.7"/><path d="M303.5,206.5 L310.5,211 L302.2,213.6 Z" fill="#e8c8a0" stroke="#7a4a18" stroke-width="0.7"/><path d="M302.2,213.6 L302.9,211 L304.6,212.6 Z" fill="#222"/><rect x="353" y="195.6" width="36" height="22.6" rx="4.6" fill="#000"/><g fill="#000" stroke="#000"><path d="M371,199.6 L371,185.9" stroke-width="6.6" stroke-linecap="round"/><circle cx="371" cy="185.9" r="4.3" stroke="none"/><path d="M371,199.6 L361.6,189.8" stroke-width="6.6" stroke-linecap="round"/><circle cx="361.6" cy="189.8" r="4.3" stroke="none"/><path d="M371,199.6 L380.4,189.8" stroke-width="6.6" stroke-linecap="round"/><circle cx="380.4" cy="189.8" r="4.3" stroke="none"/><path d="M371,199.6 L355.2,198.2" stroke-width="6.6" stroke-linecap="round"/><circle cx="355.2" cy="198.2" r="4.3" stroke="none"/><path d="M371,199.6 L386.8,198.2" stroke-width="6.6" stroke-linecap="round"/><circle cx="386.8" cy="198.2" r="4.3" stroke="none"/></g><g fill="#ffab2e" stroke="#ffab2e"><path d="M371,199.6 L371,185.9" stroke-width="2.6" stroke-linecap="round"/><circle cx="371" cy="185.9" r="2.45" stroke="none"/><path d="M371,199.6 L361.6,189.8" stroke-width="2.6" stroke-linecap="round"/><circle cx="361.6" cy="189.8" r="2.45" stroke="none"/><path d="M371,199.6 L380.4,189.8" stroke-width="2.6" stroke-linecap="round"/><circle cx="380.4" cy="189.8" r="2.45" stroke="none"/><path d="M371,199.6 L355.2,198.2" stroke-width="2.6" stroke-linecap="round"/><circle cx="355.2" cy="198.2" r="2.45" stroke="none"/><path d="M371,199.6 L386.8,198.2" stroke-width="2.6" stroke-linecap="round"/><circle cx="386.8" cy="198.2" r="2.45" stroke="none"/><path d="M367.5,199.6 L371,193.5 L374.5,199.6 Z" stroke="none"/></g><rect x="355.8" y="198.6" width="30.9" height="1.9" fill="#ffab2e"/><rect x="353.2" y="200.5" width="35.6" height="2" fill="#000"/><text x="371" y="216.7" font-family="Liberation Sans" font-weight="700" font-size="20.4" text-anchor="middle" fill="#fff" textLength="28.6" lengthAdjust="spacingAndGlyphs">SVG</text><ellipse cx="436" cy="218.5" rx="22" ry="2.2" fill="#000" opacity="0.18"/><rect x="421.5" y="179.5" width="27" height="20" fill="#f4f4f4" stroke="#bdbdbb" stroke-width="0.8"/><path d="M437,184 H446 M437,186.5 H446 M437,189 H446" stroke="#d2d2d0" stroke-width="0.8"/><path d="M414.5,203 C414.5,198.5 418,196.5 422,196.5 H449 C453,196.5 456,198.5 456,203 V213.5 C456,216 454,217 451,217 H419.5 C416.5,217 414.5,216 414.5,213.5 Z" fill="#e6e6e4" stroke="#a9a9a7" stroke-width="0.9"/><path d="M415,208 H455.5 V213.5 C455.5,215.8 454,216.6 451,216.6 H419.5 C416.8,216.6 415,215.8 415,213.5 Z" fill="#d0d0ce"/><rect x="419" y="199.5" width="33" height="6" rx="2" fill="#f6f6f4" stroke="#c4c4c2" stroke-width="0.6"/><path d="M434.5,197.5 L446.5,208.5" stroke="#a8aca8" stroke-width="4.6" stroke-linecap="round"/><circle cx="426.6" cy="190" r="9.3" fill="#a8cbee" stroke="#d8dcd8" stroke-width="2.6"/><circle cx="426.6" cy="190" r="10.8" fill="none" stroke="#8f9a9f" stroke-width="0.7"/><path d="M419,188.5 A7.7,7.7 0 0 1 434.2,188.5 Q426.6,192.5 419,188.5 Z" fill="#fff" opacity="0.55"/><path d="M487.5,186.8 L494,193.3 C499,186 507,181 515.4,181.2 C522,181.5 527.5,186 529.5,192 C531.5,198.5 529.5,205.5 524.5,210.5 C520,215 513,218 507,218 L506,216.5 C511.5,215.5 517,212.5 520,207.5 C523,202.5 523,197 520.5,194 C517.5,190.5 512.5,190 508,192.4 C505.5,194 503,197 501,200.8 L507.5,208.2 H487.5 Z" fill="url(#gr1)" stroke="#1a7f35" stroke-width="1.2" stroke-linejoin="round"/><g transform="translate(1076.1,0) scale(-1,1)"><path d="M487.5,186.8 L494,193.3 C499,186 507,181 515.4,181.2 C522,181.5 527.5,186 529.5,192 C531.5,198.5 529.5,205.5 524.5,210.5 C520,215 513,218 507,218 L506,216.5 C511.5,215.5 517,212.5 520,207.5 C523,202.5 523,197 520.5,194 C517.5,190.5 512.5,190 508,192.4 C505.5,194 503,197 501,200.8 L507.5,208.2 H487.5 Z" fill="url(#gy1)" stroke="#8c8a88" stroke-width="1.2" stroke-linejoin="round"/></g><ellipse cx="630" cy="217.5" rx="17" ry="1.8" fill="#000" opacity="0.10"/><path d="M612.5,208.5 L637,182 C639.5,179.5 642,180.5 644,182 L649,186.5 C650.5,188.5 650.5,190 649,192 L623.5,217 Z" fill="#a9a7a4" stroke="#cfcdca" stroke-width="0.9"/><path d="M624.5,200.5 L642,183 L645.8,186.6 L628.3,204.3 Z" fill="#fbfaf8"/><path d="M612.5,208.5 L619.5,201.5 L630,211 L623.5,217 Z" fill="#fafaf8" stroke="#d4d4d2" stroke-width="0.8"/><g fill="#ececea" stroke="#a6a6a4" stroke-width="1"><path d="M692.5,201 L697,177.5 L700,177 L699.5,203 Z"/><path d="M696,199.5 L714.5,188 L715,192.5 L699,204 Z"/></g><g fill="none" stroke="#9c9c9a" stroke-width="2.6"><ellipse cx="683.5" cy="204" rx="8.5" ry="4.6" transform="rotate(-22 683.5 204)"/><ellipse cx="698.5" cy="213.5" rx="4.4" ry="7.6" transform="rotate(-8 698.5 213.5)"/></g><path d="M674.5,217.7 H683.5 M679,213.3 V222.2" stroke="#222" stroke-width="1.1"/><rect x="730.5" y="177.5" width="32" height="35" rx="1.2" fill="#f6f6f4" stroke="#dcdcda" stroke-width="0.9"/><path d="M736,189 H745 M736,193.5 H745 M736,198 H745 M736,202.5 H745" stroke="#e2e2e0" stroke-width="1.2"/><path d="M743.8,186.5 H775.5 V214 L767.5,222 H743.8 Z" fill="#fbfbf9" stroke="#d2d2d0" stroke-width="0.9"/><path d="M775.5,214 L767.5,222 V214 Z" fill="#e2e2e0" stroke="#cfcfcd" stroke-width="0.7"/><path d="M749.5,195.5 H769.5 M749.5,199.7 H769.5 M749.5,203.9 H768 M749.5,208.1 H769.5" stroke="#dededc" stroke-width="1.3"/><path d="M732.5,216 H741.5 M737,211.5 V220.5" stroke="#333" stroke-width="1.1"/><ellipse cx="811" cy="220.5" rx="20" ry="1.6" fill="#000" opacity="0.2"/><rect x="791.2" y="180.2" width="39.3" height="40.5" rx="2" fill="#c88a2a" stroke="#96641a" stroke-width="1.1"/><path d="M795.5,184.5 H826.5 V210.5 L820.5,217 H795.5 Z" fill="#f2f4f2" stroke="#c8cac8" stroke-width="0.7"/><path d="M826.5,210.5 L820.5,217 V210.5 Z" fill="#9a9c9a"/><path d="M800.5,191.5 H821.5 M800.5,195.6 H821.5 M800.5,199.7 H818 M800.5,203.8 H821.5 M800.5,207.9 H814" stroke="#c9cbc9" stroke-width="1.4"/><path d="M801.5,186 V180.5 H806 V177.5 C806,176.5 807,176.2 808,176.2 H813.5 C814.8,176.2 815.5,176.5 815.5,177.5 V180.5 H820.2 V186 Z" fill="#a9aaa2" stroke="#7c7d75" stroke-width="0.8"/><path d="M868.7,215.7 H901.4" stroke="#f01010" stroke-width="1.3"/><path d="M872.5,203.5 L891,184.5 C893,182.5 896.5,182.8 898.8,185 C901,187.3 901.3,190.2 899.3,192.3 L880.5,211.5 Z" fill="#e02810" stroke="#8a2a08" stroke-width="0.9"/><path d="M876,206 L894.5,187" stroke="#f8705a" stroke-width="2"/><path d="M889.3,186.3 L897.6,194" stroke="#c8c0b8" stroke-width="2.2"/><path d="M872.5,203.5 L880.5,211.5 L870,214.5 Z" fill="#ecc8a0" stroke="#7a4a18" stroke-width="0.7"/><path d="M870,214.5 L871,211.3 L873.2,213.5 Z" fill="#111"/><rect x="921.7" y="184.9" width="42.3" height="31.4" fill="#000082" stroke="#000" stroke-width="1.4"/><path d="M926.5,212 H959.6 V189.5 Z" fill="none" stroke="#fff" stroke-width="1.2" stroke-dasharray="4.6 2.4"/><circle cx="1001" cy="199.9" r="18.6" fill="none" stroke="#000" stroke-width="2.6"/><path d="M980.2,220.7 L1022,179.2" stroke="#1010ff" stroke-width="1.3"/><circle cx="1046.8" cy="182.0" r="1.55" fill="#000"/><circle cx="1046.8" cy="194.1" r="1.55" fill="#000"/><circle cx="1046.8" cy="206.1" r="1.55" fill="#000"/><circle cx="1046.8" cy="218.2" r="1.55" fill="#000"/><circle cx="1058.9" cy="182.0" r="1.55" fill="#000"/><circle cx="1058.9" cy="194.1" r="1.55" fill="#000"/><circle cx="1058.9" cy="206.1" r="1.55" fill="#000"/><circle cx="1058.9" cy="218.2" r="1.55" fill="#000"/><circle cx="1071.1" cy="182.0" r="1.55" fill="#000"/><circle cx="1071.1" cy="194.1" r="1.55" fill="#000"/><circle cx="1071.1" cy="206.1" r="1.55" fill="#000"/><circle cx="1071.1" cy="218.2" r="1.55" fill="#000"/><circle cx="1083.2" cy="182.0" r="1.55" fill="#000"/><circle cx="1083.2" cy="194.1" r="1.55" fill="#000"/><circle cx="1083.2" cy="206.1" r="1.55" fill="#000"/><circle cx="1083.2" cy="218.2" r="1.55" fill="#000"/><ellipse cx="1128.4" cy="218.5" rx="21" ry="3.2" fill="url(#shad)"/><path d="M1134.9,206.5 L1146.9,218" stroke="#6a6e68" stroke-width="5.6" stroke-linecap="round"/><path d="M1135.9,206 L1146.4,216.3" stroke="#9a9e98" stroke-width="1.6" stroke-linecap="round"/><circle cx="1123.4" cy="194" r="16.9" fill="url(#lensb)" stroke="#c9cbc4" stroke-width="3.4"/><circle cx="1123.4" cy="194" r="18.5" fill="none" stroke="#a9aba4" stroke-width="0.7" opacity="0.8"/><circle cx="1123.4" cy="194" r="14.999999999999998" fill="none" stroke="#8f958c" stroke-width="0.6" opacity="0.7"/><path d="M1109.0,194 A14.399999999999999,14.399999999999999 0 0 1 1137.8000000000002,194 Q1123.4,199 1109.0,194 Z" fill="url(#lensh)"/><path d="M1120.9,185.3 H1125.9 V191.5 H1132.1 V196.5 H1125.9 V202.7 H1120.9 V196.5 H1114.7 V191.5 H1120.9 Z" fill="#fff" stroke="#3e72c4" stroke-width="0.9"/><ellipse cx="1186.2" cy="218.5" rx="21" ry="3.2" fill="url(#shad)"/><path d="M1192.7,206.5 L1204.7,218" stroke="#6a6e68" stroke-width="5.6" stroke-linecap="round"/><path d="M1193.7,206 L1204.2,216.3" stroke="#9a9e98" stroke-width="1.6" stroke-linecap="round"/><circle cx="1181.2" cy="194" r="16.9" fill="url(#lensb)" stroke="#c9cbc4" stroke-width="3.4"/><circle cx="1181.2" cy="194" r="18.5" fill="none" stroke="#a9aba4" stroke-width="0.7" opacity="0.8"/><circle cx="1181.2" cy="194" r="14.999999999999998" fill="none" stroke="#8f958c" stroke-width="0.6" opacity="0.7"/><path d="M1166.8,194 A14.399999999999999,14.399999999999999 0 0 1 1195.6000000000001,194 Q1181.2,199 1166.8,194 Z" fill="url(#lensh)"/><rect x="1172.6" y="191.6" width="17.2" height="4.8" fill="#fff" stroke="#3e72c4" stroke-width="0.9"/><ellipse cx="1244.4" cy="218.5" rx="21" ry="3.2" fill="url(#shad)"/><path d="M1250.9,206.5 L1262.9,218" stroke="#6a6e68" stroke-width="5.6" stroke-linecap="round"/><path d="M1251.9,206 L1262.4,216.3" stroke="#9a9e98" stroke-width="1.6" stroke-linecap="round"/><circle cx="1239.4" cy="194" r="16.9" fill="url(#lensb)" stroke="#c9cbc4" stroke-width="3.4"/><circle cx="1239.4" cy="194" r="18.5" fill="none" stroke="#a9aba4" stroke-width="0.7" opacity="0.8"/><circle cx="1239.4" cy="194" r="14.999999999999998" fill="none" stroke="#8f958c" stroke-width="0.6" opacity="0.7"/><path d="M1225.0,194 A14.399999999999999,14.399999999999999 0 0 1 1253.8000000000002,194 Q1239.4,199 1225.0,194 Z" fill="url(#lensh)"/><path d="M1229.8000000000002,191.2 V184.8 H1236.6000000000001 V188.2 H1233.2 V191.2 Z M1249.0,191.2 V184.8 H1242.2 V188.2 H1245.6000000000001 V191.2 Z M1229.8000000000002,196.8 V203.2 H1236.6000000000001 V199.8 H1233.2 V196.8 Z M1249.0,196.8 V203.2 H1242.2 V199.8 H1245.6000000000001 V196.8 Z" fill="#fff" stroke="#3e72c4" stroke-width="0.9"/><ellipse cx="1302.1" cy="218.5" rx="21" ry="3.2" fill="url(#shad)"/><path d="M1308.6,206.5 L1320.6,218" stroke="#b9b9b5" stroke-width="5.6" stroke-linecap="round"/><path d="M1309.6,206 L1320.1,216.3" stroke="#d8d8d4" stroke-width="1.6" stroke-linecap="round"/><circle cx="1297.1" cy="194" r="16.9" fill="url(#lensg)" stroke="#d4d4d0" stroke-width="3.4"/><circle cx="1297.1" cy="194" r="18.5" fill="none" stroke="#a9aba4" stroke-width="0.7" opacity="0.8"/><circle cx="1297.1" cy="194" r="14.999999999999998" fill="none" stroke="#8f958c" stroke-width="0.6" opacity="0.7"/><path d="M1282.6999999999998,194 A14.399999999999999,14.399999999999999 0 0 1 1311.5,194 Q1297.1,199 1282.6999999999998,194 Z" fill="url(#lensh)"/><path d="M1287.6,184.5 h7 v5 h5 v-5 h7 v7 h-5 v5 h5 v7 h-7 v-5 h-5 v5 h-7 v-7 h5 v-5 h-5 Z" fill="#a9a7a4"/><rect x="1293.6" y="190.5" width="7" height="7" fill="#d6d6d4"/><ellipse cx="1360" cy="218.5" rx="21" ry="3.2" fill="url(#shad)"/><path d="M1366.5,206.5 L1378.5,218" stroke="#6a6e68" stroke-width="5.6" stroke-linecap="round"/><path d="M1367.5,206 L1378,216.3" stroke="#9a9e98" stroke-width="1.6" stroke-linecap="round"/><circle cx="1355" cy="194" r="16.9" fill="url(#lensb)" stroke="#c9cbc4" stroke-width="3.4"/><circle cx="1355" cy="194" r="18.5" fill="none" stroke="#a9aba4" stroke-width="0.7" opacity="0.8"/><circle cx="1355" cy="194" r="14.999999999999998" fill="none" stroke="#8f958c" stroke-width="0.6" opacity="0.7"/><path d="M1340.6,194 A14.399999999999999,14.399999999999999 0 0 1 1369.4,194 Q1355,199 1340.6,194 Z" fill="url(#lensh)"/><path d="M1343.6,194 L1353.6,186.2 V190.8 H1365.4 V197.2 H1353.6 V201.8 Z" fill="#fff" stroke="#3e72c4" stroke-width="0.9"/><rect x="1395.8" y="177.2" width="40.3" height="26" rx="1.5" fill="#fff" stroke="#5a8ada" stroke-width="1.3"/><ellipse cx="1421.7" cy="219.4" rx="21" ry="3.2" fill="url(#shad)"/><path d="M1428.2,210.4 L1440.2,221.9" stroke="#6a6e68" stroke-width="5.6" stroke-linecap="round"/><path d="M1429.2,209.9 L1439.7,220.20000000000002" stroke="#9a9e98" stroke-width="1.6" stroke-linecap="round"/><circle cx="1416.7" cy="197.9" r="13.3" fill="url(#lensb)" stroke="#c9cbc4" stroke-width="3.4"/><circle cx="1416.7" cy="197.9" r="14.9" fill="none" stroke="#a9aba4" stroke-width="0.7" opacity="0.8"/><circle cx="1416.7" cy="197.9" r="11.4" fill="none" stroke="#8f958c" stroke-width="0.6" opacity="0.7"/><path d="M1405.9,197.9 A10.8,10.8 0 0 1 1427.5,197.9 Q1416.7,202.9 1405.9,197.9 Z" fill="url(#lensh)"/><path d="M1404.5,200.2 H1429 " stroke="#4a7fd0" stroke-width="0.8"/><ellipse cx="1477.6" cy="220.0" rx="21" ry="3.2" fill="url(#shad)"/><path d="M1484.1,208.0 L1496.1,219.5" stroke="#6a6e68" stroke-width="5.6" stroke-linecap="round"/><path d="M1485.1,207.5 L1495.6,217.8" stroke="#9a9e98" stroke-width="1.6" stroke-linecap="round"/><circle cx="1472.6" cy="195.5" r="15.3" fill="url(#lensb)" stroke="#c9cbc4" stroke-width="3.4"/><circle cx="1472.6" cy="195.5" r="16.900000000000002" fill="none" stroke="#a9aba4" stroke-width="0.7" opacity="0.8"/><circle cx="1472.6" cy="195.5" r="13.4" fill="none" stroke="#8f958c" stroke-width="0.6" opacity="0.7"/><path d="M1459.8,195.5 A12.8,12.8 0 0 1 1485.3999999999999,195.5 Q1472.6,200.5 1459.8,195.5 Z" fill="url(#lensh)"/><path d="M1472.6,176.6 L1477.4,182.6 H1474.7 V193.4 H1485.4 V190.7 L1491.6,195.5 L1485.4,200.3 V197.6 H1474.7 V208.4 H1477.4 L1472.6,214.4 L1467.8,208.4 H1470.5 V197.6 H1459.8 V200.3 L1453.6,195.5 L1459.8,190.7 V193.4 H1470.5 V182.6 H1467.8 Z" fill="#fff" stroke="#3e72c4" stroke-width="0.9"/></svg>
<svg style="left:2px;top:249px;" width="6" height="36" viewBox="0 0 6 36"><rect x="3" y="0.0" width="2.2" height="2.2" fill="#d2cfcb"/><rect x="3" y="6.0" width="2.2" height="2.2" fill="#d2cfcb"/><rect x="3" y="12.1" width="2.2" height="2.2" fill="#d2cfcb"/><rect x="3" y="18.1" width="2.2" height="2.2" fill="#d2cfcb"/><rect x="3" y="24.2" width="2.2" height="2.2" fill="#d2cfcb"/><rect x="3" y="30.2" width="2.2" height="2.2" fill="#d2cfcb"/></svg>
<div style="left:17.2px;top:243px;width:73.5px;height:48.3px;background:linear-gradient(#ffffff,#f6f4f1 50%,#fbfaf8);border:3px solid #8f8f8f;border-radius:9px;"></div>
<svg style="left:44px;top:252px;" width="20" height="30" viewBox="0 0 20 30"><path d="M3.5,2.5 V21.5 L8,17.5 L11.5,25.5 L15,24 L11.5,16 L17.5,15.5 Z" fill="#fff" stroke="#333" stroke-width="1.1"/></svg>
<div style="left:96.3px;top:250.5px;width:1.3px;height:33.5px;background:#c9c6c2;"></div>
<div style="left:97.6px;top:250.5px;width:1.3px;height:33.5px;background:#fbfaf8;"></div>
<div style="left:1px;top:299px;width:126px;height:1770px;background:linear-gradient(90deg,#f1eeea,#f6f3ef 30%,#efece8 100%);"></div>
<svg style="left:51px;top:300px;" width="36" height="8" viewBox="0 0 36 8"><rect x="0" y="0" width="2" height="2" fill="#d0cdc9"/><rect x="0" y="5" width="2" height="2" fill="#d0cdc9"/><rect x="5" y="0" width="2" height="2" fill="#d0cdc9"/><rect x="5" y="5" width="2" height="2" fill="#d0cdc9"/><rect x="10" y="0" width="2" height="2" fill="#d0cdc9"/><rect x="10" y="5" width="2" height="2" fill="#d0cdc9"/><rect x="15" y="0" width="2" height="2" fill="#d0cdc9"/><rect x="15" y="5" width="2" height="2" fill="#d0cdc9"/><rect x="20" y="0" width="2" height="2" fill="#d0cdc9"/><rect x="20" y="5" width="2" height="2" fill="#d0cdc9"/><rect x="25" y="0" width="2" height="2" fill="#d0cdc9"/><rect x="25" y="5" width="2" height="2" fill="#d0cdc9"/><rect x="30" y="0" width="2" height="2" fill="#d0cdc9"/><rect x="30" y="5" width="2" height="2" fill="#d0cdc9"/></svg>
<div style="left:126px;top:300px;width:2px;height:1769px;background:#b0ada9;"></div>
<div style="left:5px;top:332px;width:60px;height:60px;background:#9b9b9b;"></div>
<div style="left:6.5px;top:333.5px;width:57px;height:57px;background:linear-gradient(#f1f1f1 0%,#e3e3e3 22%,#ececec 55%,#f7f7f7 100%);"></div>
<svg style="left:5px;top:332px;" width="60" height="60" viewBox="0 0 60 60"><g stroke="#000" stroke-width="1.3" fill="none"><path d="M18.5,12 v11 M13,17.5 h11"/><path d="M43,27 v11 M37.5,32.5 h11"/><path d="M20,37 v11 M14.5,42.5 h11"/></g><path d="M52.5,45 V53 H44.5 Z" fill="#000"/></svg>
<div style="left:65px;top:332px;width:60px;height:60px;background:#9b9b9b;"></div>
<div style="left:66.5px;top:333.5px;width:57px;height:57px;background:linear-gradient(#f1f1f1 0%,#e3e3e3 22%,#ececec 55%,#f7f7f7 100%);"></div>
<svg style="left:65px;top:332px;" width="60" height="60" viewBox="0 0 60 60"><path d="M10.6,39.8 L50.7,21.3" stroke="#000" stroke-width="1.3" fill="none"/><path d="M52.5,45 V53 H44.5 Z" fill="#000"/></svg>
<div style="left:5px;top:392px;width:60px;height:60px;background:#9b9b9b;"></div>
<div style="left:6.5px;top:393.5px;width:57px;height:57px;background:linear-gradient(#f1f1f1 0%,#e3e3e3 22%,#ececec 55%,#f7f7f7 100%);"></div>
<svg style="left:5px;top:392px;" width="60" height="60" viewBox="0 0 60 60"><path d="M12.6,46 A33.5,33.5 0 0 1 46.2,12.6" stroke="#000" stroke-width="1.3" fill="none"/><path d="M52.5,45 V53 H44.5 Z" fill="#000"/></svg>
<div style="left:65px;top:392px;width:60px;height:60px;background:#9b9b9b;"></div>
<div style="left:66.5px;top:393.5px;width:57px;height:57px;background:linear-gradient(#f1f1f1 0%,#e3e3e3 22%,#ececec 55%,#f7f7f7 100%);"></div>
<svg style="left:65px;top:392px;" width="60" height="60" viewBox="0 0 60 60"><circle cx="29.1" cy="28.8" r="16.9" stroke="#000" stroke-width="1.3" fill="none"/><path d="M52.5,45 V53 H44.5 Z" fill="#000"/></svg>
<div style="left:5px;top:452px;width:60px;height:60px;background:#9b9b9b;"></div>
<div style="left:6.5px;top:453.5px;width:57px;height:57px;background:linear-gradient(#f1f1f1 0%,#e3e3e3 22%,#ececec 55%,#f7f7f7 100%);"></div>
<svg style="left:5px;top:452px;" width="60" height="60" viewBox="0 0 60 60"><ellipse cx="0" cy="0" rx="25.3" ry="9.6" transform="translate(30.2,29.4) rotate(-45)" stroke="#000" stroke-width="1.3" fill="none"/><path d="M52.5,45 V53 H44.5 Z" fill="#000"/></svg>
<div style="left:65px;top:452px;width:60px;height:60px;background:#9b9b9b;"></div>
<div style="left:66.5px;top:453.5px;width:57px;height:57px;background:linear-gradient(#f1f1f1 0%,#e3e3e3 22%,#ececec 55%,#f7f7f7 100%);"></div>
<svg style="left:65px;top:452px;" width="60" height="60" viewBox="0 0 60 60"><path d="M10.5,13.5 C14,4 34,20 46,27.5 C52,31 50,14 44,10 C36,4 32,30 24,40 C18,48 10,30 10.5,13.5 Z" stroke="#000" stroke-width="1.3" fill="none"/><path d="M52.5,45 V53 H44.5 Z" fill="#000"/></svg>
<div style="left:5px;top:512px;width:60px;height:60px;background:#9b9b9b;"></div>
<div style="left:6.5px;top:513.5px;width:57px;height:57px;background:linear-gradient(#f1f1f1 0%,#e3e3e3 22%,#ececec 55%,#f7f7f7 100%);"></div>
<svg style="left:5px;top:512px;" width="60" height="60" viewBox="0 0 60 60"><path d="M22.7,21.5 A7.75,7.75 0 0 0 22.7,37 H46.6" stroke="#000" stroke-width="1.3" fill="none"/><path d="M52.5,45 V53 H44.5 Z" fill="#000"/></svg>
<div style="left:65px;top:512px;width:60px;height:60px;background:#9b9b9b;"></div>
<div style="left:66.5px;top:513.5px;width:57px;height:57px;background:linear-gradient(#f1f1f1 0%,#e3e3e3 22%,#ececec 55%,#f7f7f7 100%);"></div>
<svg style="left:65px;top:512px;" width="60" height="60" viewBox="0 0 60 60"><g stroke="#000" stroke-width="1.3" fill="none"><path d="M8,19.8 L14.1,9.2 H26.3 L32.4,19.8 L26.3,30.4 H14.1 Z"/><path d="M34,31.8 H51.6 L43,17.5 Z"/><rect x="9.4" y="38.6" width="24.4" height="11.7"/></g><path d="M52.5,45 V53 H44.5 Z" fill="#000"/></svg>
<div style="left:5px;top:572px;width:60px;height:60px;background:#9b9b9b;"></div>
<div style="left:6.5px;top:573.5px;width:57px;height:57px;background:linear-gradient(#f1f1f1 0%,#e3e3e3 22%,#ececec 55%,#f7f7f7 100%);"></div>
<svg style="left:5px;top:572px;" width="60" height="60" viewBox="0 0 60 60"><defs><pattern id="hp" width="3.2" height="3.2" patternUnits="userSpaceOnUse" patternTransform="rotate(45)"><rect width="3.2" height="3.2" fill="#ddd"/><line x1="0" y1="0" x2="0" y2="3.2" stroke="#333" stroke-width="1"/></pattern></defs>
<path d="M12.6,29 L23.2,18.5 H47.1 V42.4 H12.6 Z" fill="url(#hp)" stroke="#000" stroke-width="1.3"/><circle cx="34.4" cy="31.4" r="5.2" fill="#f4f4f4" stroke="#000" stroke-width="1.3"/><path d="M52.5,45 V53 H44.5 Z" fill="#000"/></svg>
<div style="left:5px;top:648px;width:60px;height:60px;background:#9b9b9b;"></div>
<div style="left:6.5px;top:649.5px;width:57px;height:57px;background:linear-gradient(#f1f1f1 0%,#e3e3e3 22%,#ececec 55%,#f7f7f7 100%);"></div>
<svg style="left:5px;top:648px;" width="60" height="60" viewBox="0 0 60 60"><text x="29.8" y="46.6" font-family="Liberation Serif" font-size="50" text-anchor="middle" fill="#000">A</text></svg>
<div style="left:65px;top:648px;width:60px;height:60px;background:#9b9b9b;"></div>
<div style="left:66.5px;top:649.5px;width:57px;height:57px;background:linear-gradient(#f1f1f1 0%,#e3e3e3 22%,#ececec 55%,#f7f7f7 100%);"></div>
<svg style="left:65px;top:648px;" width="60" height="60" viewBox="0 0 60 60"><g stroke="#000" stroke-width="1.3" fill="none"><path d="M13.7,16.8 V43.7 M44.2,16.8 V43.7 M14,20.3 H44"/></g><path d="M14,20.3 l6,-3 v6 Z M44,20.3 l-6,-3 v6 Z" fill="#000"/><path d="M52.5,45 V53 H44.5 Z" fill="#000"/></svg>
<div style="left:5px;top:708px;width:60px;height:60px;background:#9b9b9b;"></div>
<div style="left:6.5px;top:709.5px;width:57px;height:57px;background:linear-gradient(#f1f1f1 0%,#e3e3e3 22%,#ececec 55%,#f7f7f7 100%);"></div>
<svg style="left:5px;top:708px;" width="60" height="60" viewBox="0 0 60 60"><rect x="10.9" y="15.5" width="38.1" height="28.8" fill="#fff" stroke="#000" stroke-width="1.5"/><path d="M16.5,39.5 L16.5,37 L26,27 L32,33 L38,28.5 L43.5,37 L43.5,39.5 Z" fill="#000"/><circle cx="40.9" cy="22.8" r="3.1" fill="#000"/></svg>
<div style="left:5px;top:784px;width:60px;height:60px;background:#9b9b9b;"></div>
<div style="left:6.5px;top:785.5px;width:57px;height:57px;background:linear-gradient(#f1f1f1 0%,#e3e3e3 22%,#ececec 55%,#f7f7f7 100%);"></div>
<svg style="left:5px;top:784px;" width="60" height="60" viewBox="0 0 60 60"><g stroke="#000" stroke-width="1.3" fill="none"><path d="M8,22.5 V54.5 H40 Z"/><path d="M15,39 V48.5 H24.5 Z"/><path d="M44.5,17 L39,42 M44.5,17 L50,42"/><circle cx="44.5" cy="16" r="2.4" fill="#fff"/><path d="M44.5,13.6 V10"/></g>
<path d="M16,14 L21,9.5 L34,25 L29,29.5 Z" fill="#e02818" stroke="#a01008" stroke-width="0.8"/><path d="M29,29.5 L34,25 L35.5,31.5 Z" fill="#e8c090" stroke="#806040" stroke-width="0.6"/><path d="M34.5,29.5 l1,2 l-2,-1z" fill="#222"/><path d="M16,14 L21,9.5 L19,8 C17,7 14,10 14.5,12 Z" fill="#f08070" stroke="#a01008" stroke-width="0.6"/><path d="M52.5,45 V53 H44.5 Z" fill="#000"/></svg>
<div style="left:65px;top:784px;width:60px;height:60px;background:#9b9b9b;"></div>
<div style="left:66.5px;top:785.5px;width:57px;height:57px;background:linear-gradient(#f1f1f1 0%,#e3e3e3 22%,#ececec 55%,#f7f7f7 100%);"></div>
<svg style="left:65px;top:784px;" width="60" height="60" viewBox="0 0 60 60"><rect x="9.5" y="23" width="40.8" height="14" rx="2.5" fill="#f8f8f8" stroke="#8a8a8a" stroke-width="1.3"/><path d="M13.0,24 v5" stroke="#555" stroke-width="0.9"/><path d="M16.3,24 v3" stroke="#555" stroke-width="0.9"/><path d="M19.7,24 v5" stroke="#555" stroke-width="0.9"/><path d="M23.0,24 v3" stroke="#555" stroke-width="0.9"/><path d="M26.3,24 v5" stroke="#555" stroke-width="0.9"/><path d="M29.6,24 v3" stroke="#555" stroke-width="0.9"/><path d="M33.0,24 v5" stroke="#555" stroke-width="0.9"/><path d="M36.3,24 v3" stroke="#555" stroke-width="0.9"/><path d="M39.6,24 v5" stroke="#555" stroke-width="0.9"/><path d="M43.0,24 v3" stroke="#555" stroke-width="0.9"/><path d="M46.3,24 v5" stroke="#555" stroke-width="0.9"/></svg>
<div style="left:5px;top:844px;width:60px;height:60px;background:#9b9b9b;"></div>
<div style="left:6.5px;top:845.5px;width:57px;height:57px;background:linear-gradient(#f1f1f1 0%,#e3e3e3 22%,#ececec 55%,#f7f7f7 100%);"></div>
<svg style="left:5px;top:844px;" width="60" height="60" viewBox="0 0 60 60"><g stroke="#8a8580" stroke-width="1.3" fill="none"><rect x="12.6" y="14.4" width="28.8" height="20.8"/><circle cx="36.5" cy="33.4" r="12.2"/><path d="M10,35.2 H14 M12.6,33 V38"/></g></svg>
<div style="left:65px;top:844px;width:60px;height:60px;background:#9b9b9b;"></div>
<div style="left:66.5px;top:845.5px;width:57px;height:57px;background:linear-gradient(#f1f1f1 0%,#e3e3e3 22%,#ececec 55%,#f7f7f7 100%);"></div>
<svg style="left:65px;top:844px;" width="60" height="60" viewBox="0 0 60 60"><path d="M10.8,28.3 L40.6,11.2" stroke="#f01010" stroke-width="1.4"/><path d="M27.4,20.5 V40 L32,36 L36,44.5 L39.5,43 L35.5,34.5 L41.5,34 Z" fill="#fff" stroke="#333" stroke-width="1.1"/><path d="M52.5,45 V53 H44.5 Z" fill="#000"/></svg>
<div style="left:5px;top:920px;width:60px;height:60px;background:#9b9b9b;"></div>
<div style="left:6.5px;top:921.5px;width:57px;height:57px;background:linear-gradient(#f1f1f1 0%,#e3e3e3 22%,#ececec 55%,#f7f7f7 100%);"></div>
<svg style="left:5px;top:920px;" width="60" height="60" viewBox="0 0 60 60"><g stroke="#000" stroke-width="1.3" fill="none" stroke-linejoin="round"><path d="M33.4,11.7 L12.6,24.4 L26.8,33.7 L47.5,20.3 Z"/><path d="M12.6,24.4 V42.2 L26.8,48.4 V33.7"/><path d="M26.8,48.4 L47.5,34.9 V20.3"/></g><path d="M52.5,45 V53 H44.5 Z" fill="#000"/></svg>
<div style="left:128px;top:328.8px;width:3126px;height:3px;background:#b7b4b0;border-bottom:1.3px solid #fbfaf8;"></div>
<div style="left:129.3px;top:304.6px;width:1042px;height:22px;background:#dfdcd8;border:1.9px solid #b5b2ae;border-bottom:none;border-radius:5.5px 5.5px 0 0;"></div>
<svg style="left:141.9px;top:308.5px;" width="16" height="16" viewBox="0 0 16 16"><defs><linearGradient id="qr" x1="0" y1="0" x2="1" y2="1"><stop offset="0" stop-color="#8a9cd0"/><stop offset="0.45" stop-color="#2f478f"/><stop offset="1" stop-color="#24397c"/></linearGradient></defs><circle cx="7" cy="7" r="5.6" fill="#f6f5f6" stroke="url(#qr)" stroke-width="1.9"/><path d="M3.6,7.2 H10.2 M7,3 V8.6" stroke="#a8a6a8" stroke-width="0.6" fill="none"/><path d="M4,8.8 H8.6 M8.2,3.6 L7.2,6" stroke="#e88" stroke-width="0.6" fill="none"/><path d="M7.4,7.3 L12.4,12.7" stroke="#f2a21a" stroke-width="2.1" stroke-linecap="butt"/><path d="M7.9,7.3 L12.6,12.2" stroke="#fbd86a" stroke-width="0.7"/><path d="M12.3,12.5 L13.5,13.8" stroke="#e8707a" stroke-width="2.1"/><path d="M6.9,6.6 L7.9,8.1 L8.4,7.2 Z" fill="#d8c0a0"/></svg>
<div class="t" style="top:309.00px;font-size:12px;line-height:16px;color:#000;letter-spacing:-0.070px;left:-351px;width:2000px;text-align:center;"><span id="t27">Untitled 1</span></div>
<div style="left:1171.2px;top:300.3px;width:1041.8px;height:31.6px;background:linear-gradient(#f7f4f0,#efece8 60%);border:1.9px solid #b5b2ae;border-bottom:none;border-radius:5.5px 5.5px 0 0;"></div>
<svg style="left:1184.1px;top:307.2px;" width="16" height="16" viewBox="0 0 16 16"><defs><linearGradient id="qr" x1="0" y1="0" x2="1" y2="1"><stop offset="0" stop-color="#8a9cd0"/><stop offset="0.45" stop-color="#2f478f"/><stop offset="1" stop-color="#24397c"/></linearGradient></defs><circle cx="7" cy="7" r="5.6" fill="#f6f5f6" stroke="url(#qr)" stroke-width="1.9"/><path d="M3.6,7.2 H10.2 M7,3 V8.6" stroke="#a8a6a8" stroke-width="0.6" fill="none"/><path d="M4,8.8 H8.6 M8.2,3.6 L7.2,6" stroke="#e88" stroke-width="0.6" fill="none"/><path d="M7.4,7.3 L12.4,12.7" stroke="#f2a21a" stroke-width="2.1" stroke-linecap="butt"/><path d="M7.9,7.3 L12.6,12.2" stroke="#fbd86a" stroke-width="0.7"/><path d="M12.3,12.5 L13.5,13.8" stroke="#e8707a" stroke-width="2.1"/><path d="M6.9,6.6 L7.9,8.1 L8.4,7.2 Z" fill="#d8c0a0"/></svg>
<div class="t" style="top:308.00px;font-size:12px;line-height:16px;color:#000;letter-spacing:-0.075px;left:690px;width:2000px;text-align:center;"><span id="t28">Exhibition-Oval Configuration V.dxf read-only</span></div>
<div style="left:1137px;top:308.5px;width:21px;height:18px;overflow:hidden;"><svg style="left:0;top:0" width="21" height="22" viewBox="0 0 21 22"><g stroke-linecap="round"><path d="M3,3 L17.5,19 M18,3 L2.5,19.5" stroke="#6c6f68" stroke-width="4.6"/><path d="M3,3 L17.5,19 M18,3 L2.5,19.5" stroke="#8f928b" stroke-width="3"/></g></svg></div>
<div style="left:2178px;top:307.3px;width:21px;height:21px;overflow:hidden;"><svg style="left:0;top:0" width="21" height="22" viewBox="0 0 21 22"><g stroke-linecap="round"><path d="M3,3 L17.5,19 M18,3 L2.5,19.5" stroke="#6c6f68" stroke-width="4.6"/><path d="M3,3 L17.5,19 M18,3 L2.5,19.5" stroke="#8f928b" stroke-width="3"/></g></svg></div>
<svg style="left:128px;top:330px;" width="3127" height="30" viewBox="0 0 3127 30"><g stroke="#000" stroke-width="1"><path d="M48.5,16 V30"/><path d="M78.5,24 V30"/><path d="M109.5,24 V30"/><path d="M139.5,24 V30"/><path d="M170.5,24 V30"/><path d="M201.5,16 V30"/><path d="M231.5,24 V30"/><path d="M262.5,24 V30"/><path d="M292.5,24 V30"/><path d="M323.5,24 V30"/><path d="M353.5,16 V30"/><path d="M384.5,24 V30"/><path d="M415.5,24 V30"/><path d="M445.5,24 V30"/><path d="M476.5,24 V30"/><path d="M506.5,16 V30"/><path d="M537.5,24 V30"/><path d="M568.5,24 V30"/><path d="M598.5,24 V30"/><path d="M629.5,24 V30"/><path d="M659.5,16 V30"/><path d="M690.5,24 V30"/><path d="M721.5,24 V30"/><path d="M751.5,24 V30"/><path d="M782.5,24 V30"/><path d="M812.5,16 V30"/><path d="M843.5,24 V30"/><path d="M873.5,24 V30"/><path d="M904.5,24 V30"/><path d="M935.5,24 V30"/><path d="M965.5,16 V30"/><path d="M996.5,24 V30"/><path d="M1026.5,24 V30"/><path d="M1057.5,24 V30"/><path d="M1088.5,24 V30"/><path d="M1118.5,16 V30"/><path d="M1149.5,24 V30"/><path d="M1179.5,24 V30"/><path d="M1210.5,24 V30"/><path d="M1241.5,24 V30"/><path d="M1271.5,16 V30"/><path d="M1302.5,24 V30"/><path d="M1332.5,24 V30"/><path d="M1363.5,24 V30"/><path d="M1393.5,24 V30"/><path d="M1424.5,16 V30"/><path d="M1455.5,24 V30"/><path d="M1485.5,24 V30"/><path d="M1516.5,24 V30"/><path d="M1546.5,24 V30"/><path d="M1577.5,16 V30"/><path d="M1608.5,24 V30"/><path d="M1638.5,24 V30"/><path d="M1669.5,24 V30"/><path d="M1699.5,24 V30"/><path d="M1730.5,16 V30"/><path d="M1761.5,24 V30"/><path d="M1791.5,24 V30"/><path d="M1822.5,24 V30"/><path d="M1852.5,24 V30"/><path d="M1883.5,16 V30"/><path d="M1913.5,24 V30"/><path d="M1944.5,24 V30"/><path d="M1975.5,24 V30"/><path d="M2005.5,24 V30"/><path d="M2036.5,16 V30"/><path d="M2066.5,24 V30"/><path d="M2097.5,24 V30"/><path d="M2128.5,24 V30"/><path d="M2158.5,24 V30"/><path d="M2189.5,16 V30"/><path d="M2219.5,24 V30"/><path d="M2250.5,24 V30"/><path d="M2281.5,24 V30"/><path d="M2311.5,24 V30"/><path d="M2342.5,16 V30"/><path d="M2372.5,24 V30"/><path d="M2403.5,24 V30"/><path d="M2434.5,24 V30"/><path d="M2464.5,24 V30"/><path d="M2495.5,16 V30"/><path d="M2525.5,24 V30"/><path d="M2556.5,24 V30"/><path d="M2586.5,24 V30"/><path d="M2617.5,24 V30"/><path d="M2648.5,16 V30"/><path d="M2678.5,24 V30"/><path d="M2709.5,24 V30"/><path d="M2739.5,24 V30"/><path d="M2770.5,24 V30"/><path d="M2801.5,16 V30"/><path d="M2831.5,24 V30"/><path d="M2862.5,24 V30"/><path d="M2892.5,24 V30"/><path d="M2923.5,24 V30"/><path d="M2954.5,16 V30"/><path d="M2984.5,24 V30"/><path d="M3015.5,24 V30"/><path d="M3045.5,24 V30"/><path d="M3076.5,24 V30"/><path d="M3106.5,16 V30"/></g></svg>
<div class="t" style="top:331.70px;font-size:12.5px;line-height:16px;color:#000;letter-spacing:-0.533px;left:-823.8px;width:2000px;text-align:center;"><span id="t29">-150</span></div>
<div class="t" style="top:331.70px;font-size:12.5px;line-height:16px;color:#000;letter-spacing:-0.533px;left:-670.8px;width:2000px;text-align:center;"><span id="t30">-100</span></div>
<div class="t" style="top:331.70px;font-size:12.5px;line-height:16px;color:#000;letter-spacing:-0.626px;left:-518.8px;width:2000px;text-align:center;"><span id="t31">-50</span></div>
<div class="t" style="top:331.70px;font-size:12.5px;line-height:16px;color:#000;letter-spacing:-0.253px;left:-365.79999999999995px;width:2000px;text-align:center;"><span id="t32">0</span></div>
<div class="t" style="top:331.70px;font-size:12.5px;line-height:16px;color:#000;letter-spacing:-0.203px;left:-212.79999999999995px;width:2000px;text-align:center;"><span id="t33">50</span></div>
<div class="t" style="top:331.70px;font-size:12.5px;line-height:16px;color:#000;letter-spacing:-0.220px;left:-59.799999999999955px;width:2000px;text-align:center;"><span id="t34">100</span></div>
<div class="t" style="top:331.70px;font-size:12.5px;line-height:16px;color:#000;letter-spacing:-0.220px;left:93.20000000000005px;width:2000px;text-align:center;"><span id="t35">150</span></div>
<div class="t" style="top:331.70px;font-size:12.5px;line-height:16px;color:#000;letter-spacing:-0.220px;left:246.20000000000005px;width:2000px;text-align:center;"><span id="t36">200</span></div>
<div class="t" style="top:331.70px;font-size:12.5px;line-height:16px;color:#000;letter-spacing:-0.220px;left:399.20000000000005px;width:2000px;text-align:center;"><span id="t37">250</span></div>
<div class="t" style="top:331.70px;font-size:12.5px;line-height:16px;color:#000;letter-spacing:-0.220px;left:552.2px;width:2000px;text-align:center;"><span id="t38">300</span></div>
<div class="t" style="top:331.70px;font-size:12.5px;line-height:16px;color:#000;letter-spacing:-0.220px;left:705.2px;width:2000px;text-align:center;"><span id="t39">350</span></div>
<div class="t" style="top:331.70px;font-size:12.5px;line-height:16px;color:#000;letter-spacing:-0.220px;left:858.2px;width:2000px;text-align:center;"><span id="t40">400</span></div>
<div class="t" style="top:331.70px;font-size:12.5px;line-height:16px;color:#000;letter-spacing:-0.220px;left:1011.2px;width:2000px;text-align:center;"><span id="t41">450</span></div>
<div class="t" style="top:331.70px;font-size:12.5px;line-height:16px;color:#000;letter-spacing:-0.220px;left:1164.1999999999998px;width:2000px;text-align:center;"><span id="t42">500</span></div>
<div class="t" style="top:331.70px;font-size:12.5px;line-height:16px;color:#000;letter-spacing:-0.220px;left:1317.1999999999998px;width:2000px;text-align:center;"><span id="t43">550</span></div>
<div class="t" style="top:331.70px;font-size:12.5px;line-height:16px;color:#000;letter-spacing:-0.220px;left:1470.1999999999998px;width:2000px;text-align:center;"><span id="t44">600</span></div>
<div class="t" style="top:331.70px;font-size:12.5px;line-height:16px;color:#000;letter-spacing:-0.220px;left:1623.1999999999998px;width:2000px;text-align:center;"><span id="t45">650</span></div>
<div class="t" style="top:331.70px;font-size:12.5px;line-height:16px;color:#000;letter-spacing:-0.220px;left:1776.1999999999998px;width:2000px;text-align:center;"><span id="t46">700</span></div>
<div class="t" style="top:331.70px;font-size:12.5px;line-height:16px;color:#000;letter-spacing:-0.220px;left:1929.1999999999998px;width:2000px;text-align:center;"><span id="t47">750</span></div>
<div class="t" style="top:331.70px;font-size:12.5px;line-height:16px;color:#000;letter-spacing:-0.220px;left:2082.2px;width:2000px;text-align:center;"><span id="t48">800</span></div>
<div style="left:3224.1px;top:331.70px;width:17.20px;height:16px;overflow:hidden;"><div class="t" style="top:0px;font-size:12.5px;line-height:16px;color:#000;letter-spacing:-0.220px;left:0px;"><span id="t49">850</span></div></div>
<svg style="left:1115px;top:339px;" width="26" height="14" viewBox="0 0 26 14"><path d="M0.5,1 H24 L12.2,13 Z" fill="#000"/></svg>
<div class="t" style="top:1839.20px;font-size:12.5px;line-height:16px;color:#000;left:-862.9px;width:2000px;text-align:center;letter-spacing:-0.22px;transform:rotate(-90deg);transform-origin:1000px 8.0px;"><span id="t50">0</span></div>
<div class="t" style="top:1686.20px;font-size:12.5px;line-height:16px;color:#000;left:-862.9px;width:2000px;text-align:center;letter-spacing:-0.22px;transform:rotate(-90deg);transform-origin:1000px 8.0px;"><span id="t51">50</span></div>
<div class="t" style="top:1534.20px;font-size:12.5px;line-height:16px;color:#000;left:-862.9px;width:2000px;text-align:center;letter-spacing:-0.22px;transform:rotate(-90deg);transform-origin:1000px 8.0px;"><span id="t52">100</span></div>
<div class="t" style="top:1381.20px;font-size:12.5px;line-height:16px;color:#000;left:-862.9px;width:2000px;text-align:center;letter-spacing:-0.22px;transform:rotate(-90deg);transform-origin:1000px 8.0px;"><span id="t53">150</span></div>
<div class="t" style="top:1228.20px;font-size:12.5px;line-height:16px;color:#000;left:-862.9px;width:2000px;text-align:center;letter-spacing:-0.22px;transform:rotate(-90deg);transform-origin:1000px 8.0px;"><span id="t54">200</span></div>
<div class="t" style="top:1075.20px;font-size:12.5px;line-height:16px;color:#000;left:-862.9px;width:2000px;text-align:center;letter-spacing:-0.22px;transform:rotate(-90deg);transform-origin:1000px 8.0px;"><span id="t55">250</span></div>
<div class="t" style="top:922.20px;font-size:12.5px;line-height:16px;color:#000;left:-862.9px;width:2000px;text-align:center;letter-spacing:-0.22px;transform:rotate(-90deg);transform-origin:1000px 8.0px;"><span id="t56">300</span></div>
<div class="t" style="top:769.20px;font-size:12.5px;line-height:16px;color:#000;left:-862.9px;width:2000px;text-align:center;letter-spacing:-0.22px;transform:rotate(-90deg);transform-origin:1000px 8.0px;"><span id="t57">350</span></div>
<div class="t" style="top:616.20px;font-size:12.5px;line-height:16px;color:#000;left:-862.9px;width:2000px;text-align:center;letter-spacing:-0.22px;transform:rotate(-90deg);transform-origin:1000px 8.0px;"><span id="t58">400</span></div>
<div class="t" style="top:463.20px;font-size:12.5px;line-height:16px;color:#000;left:-862.9px;width:2000px;text-align:center;letter-spacing:-0.22px;transform:rotate(-90deg);transform-origin:1000px 8.0px;"><span id="t59">450</span></div>
<svg style="left:128px;top:330px;" width="30" height="1602" viewBox="0 0 30 1602"><g stroke="#000" stroke-width="1"><path d="M23,1579.5 H29.2"/><path d="M23,1548.5 H29.2"/><path d="M15,1517.5 H29.2"/><path d="M23,1487.5 H29.2"/><path d="M23,1456.5 H29.2"/><path d="M23,1426.5 H29.2"/><path d="M23,1395.5 H29.2"/><path d="M15,1364.5 H29.2"/><path d="M23,1334.5 H29.2"/><path d="M23,1303.5 H29.2"/><path d="M23,1273.5 H29.2"/><path d="M23,1242.5 H29.2"/><path d="M15,1212.5 H29.2"/><path d="M23,1181.5 H29.2"/><path d="M23,1150.5 H29.2"/><path d="M23,1120.5 H29.2"/><path d="M23,1089.5 H29.2"/><path d="M15,1059.5 H29.2"/><path d="M23,1028.5 H29.2"/><path d="M23,997.5 H29.2"/><path d="M23,967.5 H29.2"/><path d="M23,936.5 H29.2"/><path d="M15,906.5 H29.2"/><path d="M23,875.5 H29.2"/><path d="M23,844.5 H29.2"/><path d="M23,814.5 H29.2"/><path d="M23,783.5 H29.2"/><path d="M15,753.5 H29.2"/><path d="M23,722.5 H29.2"/><path d="M23,691.5 H29.2"/><path d="M23,661.5 H29.2"/><path d="M23,630.5 H29.2"/><path d="M15,600.5 H29.2"/><path d="M23,569.5 H29.2"/><path d="M23,539.5 H29.2"/><path d="M23,508.5 H29.2"/><path d="M23,477.5 H29.2"/><path d="M15,447.5 H29.2"/><path d="M23,416.5 H29.2"/><path d="M23,386.5 H29.2"/><path d="M23,355.5 H29.2"/><path d="M23,324.5 H29.2"/><path d="M15,294.5 H29.2"/><path d="M23,263.5 H29.2"/><path d="M23,233.5 H29.2"/><path d="M23,202.5 H29.2"/><path d="M23,171.5 H29.2"/><path d="M15,141.5 H29.2"/><path d="M23,110.5 H29.2"/><path d="M23,80.5 H29.2"/><path d="M23,49.5 H29.2"/></g></svg>
<svg style="left:136px;top:383px;" width="14" height="26" viewBox="0 0 14 26"><path d="M0.9,0.7 V25 L13.3,12.9 Z" fill="#000"/></svg>
<div style="left:157px;top:360px;width:3084px;height:1572px;background:#000;"></div>
<svg style="left:0px;top:0px;" width="3840" height="2160" viewBox="0 0 3840 2160"><g stroke="#50b6a2" stroke-width="2" fill="none" shape-rendering="crispEdges"><path d="M615,417.0 H2783"/><path d="M635,380 V440"/><path d="M671,398 V417.0"/><path d="M708,398 V417.0"/><path d="M745,398 V417.0"/><path d="M781,398 V417.0"/><path d="M818,398 V417.0"/><path d="M855,398 V417.0"/><path d="M892,398 V417.0"/><path d="M928,398 V417.0"/><path d="M965,398 V417.0"/><path d="M1002,380 V417.0"/><path d="M1038,398 V417.0"/><path d="M1075,398 V417.0"/><path d="M1112,398 V417.0"/><path d="M1148,398 V417.0"/><path d="M1185,398 V417.0"/><path d="M1222,398 V417.0"/><path d="M1259,398 V417.0"/><path d="M1295,398 V417.0"/><path d="M1332,398 V417.0"/><path d="M1369,380 V417.0"/><path d="M1405,398 V417.0"/><path d="M1442,398 V417.0"/><path d="M1479,398 V417.0"/><path d="M1516,398 V417.0"/><path d="M1552,398 V417.0"/><path d="M1589,398 V417.0"/><path d="M1626,398 V417.0"/><path d="M1662,398 V417.0"/><path d="M1699,398 V417.0"/><path d="M1736,380 V417.0"/><path d="M1772,398 V417.0"/><path d="M1809,398 V417.0"/><path d="M1846,398 V417.0"/><path d="M1883,398 V417.0"/><path d="M1919,398 V417.0"/><path d="M1956,398 V417.0"/><path d="M1993,398 V417.0"/><path d="M2029,398 V417.0"/><path d="M2066,398 V417.0"/><path d="M2103,380 V417.0"/><path d="M2140,398 V417.0"/><path d="M2176,398 V417.0"/><path d="M2213,398 V417.0"/><path d="M2250,398 V417.0"/><path d="M2286,398 V417.0"/><path d="M2323,398 V417.0"/><path d="M2360,398 V417.0"/><path d="M2396,398 V417.0"/><path d="M2433,398 V417.0"/><path d="M2470,380 V417.0"/><path d="M2507,398 V417.0"/><path d="M2543,398 V417.0"/><path d="M2580,398 V417.0"/><path d="M2617,398 V417.0"/><path d="M2653,398 V417.0"/><path d="M2690,398 V417.0"/><path d="M2727,398 V417.0"/><path d="M2764,398 V1868"/><path d="M2764,454 H2783"/><path d="M2764,490 H2783"/><path d="M2764,527 H2783"/><path d="M2764,564 H2783"/><path d="M2764,600 H2783"/><path d="M2764,637 H2783"/><path d="M2764,674 H2783"/><path d="M2764,710 H2783"/><path d="M2764,747 H2801"/><path d="M2764,784 H2783"/><path d="M2764,820 H2783"/><path d="M2764,857 H2783"/><path d="M2764,894 H2783"/><path d="M2764,930 H2783"/><path d="M2764,967 H2783"/><path d="M2764,1004 H2783"/><path d="M2764,1040 H2783"/><path d="M2764,1077 H2783"/><path d="M2764,1114 H2801"/><path d="M2764,1150 H2783"/><path d="M2764,1187 H2783"/><path d="M2764,1224 H2783"/><path d="M2764,1260 H2783"/><path d="M2764,1297 H2783"/><path d="M2764,1334 H2783"/><path d="M2764,1370 H2783"/><path d="M2764,1407 H2783"/><path d="M2764,1444 H2783"/><path d="M2764,1480 H2801"/><path d="M2764,1517 H2783"/><path d="M2764,1554 H2783"/><path d="M2764,1590 H2783"/><path d="M2764,1627 H2783"/><path d="M2764,1664 H2783"/><path d="M2764,1700 H2783"/><path d="M2764,1737 H2783"/><path d="M2764,1774 H2783"/><path d="M2764,1810 H2783"/><path d="M2764,1847 H2801"/><path d="M615,1847 H2801"/><path d="M671,1847 V1868"/><path d="M708,1847 V1868"/><path d="M745,1847 V1868"/><path d="M781,1847 V1868"/><path d="M818,1847 V1868"/><path d="M855,1847 V1868"/><path d="M892,1847 V1868"/><path d="M928,1847 V1868"/><path d="M965,1847 V1868"/><path d="M1002,1847 V1885"/><path d="M1038,1847 V1868"/><path d="M1075,1847 V1868"/><path d="M1112,1847 V1868"/><path d="M1148,1847 V1868"/><path d="M1185,1847 V1868"/><path d="M1222,1847 V1868"/><path d="M1259,1847 V1868"/><path d="M1295,1847 V1868"/><path d="M1332,1847 V1868"/><path d="M1369,1847 V1885"/><path d="M1405,1847 V1868"/><path d="M1442,1847 V1868"/><path d="M1479,1847 V1868"/><path d="M1516,1847 V1868"/><path d="M1552,1847 V1868"/><path d="M1589,1847 V1868"/><path d="M1626,1847 V1868"/><path d="M1662,1847 V1868"/><path d="M1699,1847 V1868"/><path d="M1736,1847 V1885"/><path d="M1772,1847 V1868"/><path d="M1809,1847 V1868"/><path d="M1846,1847 V1868"/><path d="M1883,1847 V1868"/><path d="M1919,1847 V1868"/><path d="M1956,1847 V1868"/><path d="M1993,1847 V1868"/><path d="M2029,1847 V1868"/><path d="M2066,1847 V1868"/><path d="M2103,1847 V1885"/><path d="M2140,1847 V1868"/><path d="M2176,1847 V1868"/><path d="M2213,1847 V1868"/><path d="M2250,1847 V1868"/><path d="M2286,1847 V1868"/><path d="M2323,1847 V1868"/><path d="M2360,1847 V1868"/><path d="M2396,1847 V1868"/><path d="M2433,1847 V1868"/><path d="M2470,1847 V1885"/><path d="M2507,1847 V1868"/><path d="M2543,1847 V1868"/><path d="M2580,1847 V1868"/><path d="M2617,1847 V1868"/><path d="M2653,1847 V1868"/><path d="M2690,1847 V1868"/><path d="M2727,1847 V1868"/></g><path d="M634,1847 V1888" stroke="#e0242c" stroke-width="2" shape-rendering="crispEdges"/></svg>
<div class="t" style="top:1878.10px;font-size:28.5px;line-height:37px;color:#50b6a2;font-family:&quot;Liberation Mono&quot;,monospace;letter-spacing:0.293px;transform:scaleX(0.7);transform-origin:0 50%;left:651.7px;"><span id="t60">Exhibition-Oval Configuration V</span></div>
<div class="t" style="top:1878.10px;font-size:28.5px;line-height:37px;color:#50b6a2;font-family:&quot;Liberation Mono&quot;,monospace;letter-spacing:2.611px;transform:scaleX(0.7);transform-origin:0 50%;left:1066px;"><span id="t61">58x39</span></div>
<div class="t" style="top:1878.10px;font-size:28.5px;line-height:37px;color:#50b6a2;font-family:&quot;Liberation Mono&quot;,monospace;letter-spacing:0.559px;transform:scaleX(0.7);transform-origin:0 50%;left:1160.4px;"><span id="t62">29 Dec 2021</span></div>
<div style="left:3241.2px;top:360px;width:14px;height:1572px;background:#f4f2ef;"></div>
<div style="left:3241.7px;top:372.9px;width:13.3px;height:1544.5px;background:#e5e3e0;box-shadow:inset 2px 0 0 #dcdad7,inset -2px 0 0 #dcdad7;border-top:1px solid #c4c1bd;border-bottom:1px solid #b5b2ae;"></div>
<div style="left:3241.7px;top:887px;width:13.3px;height:514.5px;background:linear-gradient(90deg,#fefdfc,#eeece9);border-top:1px solid #b5b2ae;border-bottom:1px solid #b5b2ae;"></div>
<svg style="left:3241.8px;top:364.2px;" width="13.2" height="9" viewBox="0 0 13.2 9"><path d="M0,8.8 H13.2 L6.6,0.3 Z" fill="#555"/></svg>
<svg style="left:3241.8px;top:1922px;" width="13.2" height="9" viewBox="0 0 13.2 9"><path d="M0,0.2 H13.2 L6.6,8.7 Z" fill="#555"/></svg>
<div style="left:157px;top:1932px;width:3098px;height:14.5px;background:#f0eeeb;"></div>
<div style="left:171px;top:1932.5px;width:2982.2px;height:13.6px;background:#e5e3e0;box-shadow:inset 0 2px 0 #dcdad7,inset 0 -2px 0 #dcdad7;border-left:1px solid #c4c1bd;border-right:1px solid #b5b2ae;"></div>
<div style="left:811px;top:1932.5px;width:1703.5px;height:13.6px;background:linear-gradient(#fefdfc,#eeece9);border-left:1px solid #b5b2ae;border-right:1px solid #b5b2ae;"></div>
<svg style="left:158.5px;top:1933px;" width="9.5" height="13.2" viewBox="0 0 9.5 13.2"><path d="M9.3,0 V13.2 L0.4,6.6 Z" fill="#555"/></svg>
<svg style="left:3156.8px;top:1933px;" width="9.5" height="13.2" viewBox="0 0 9.5 13.2"><path d="M0.2,0 V13.2 L9.1,6.6 Z" fill="#555"/></svg>
<div class="t" style="top:1931.70px;font-size:12.5px;line-height:16px;color:#000;letter-spacing:-0.514px;right:585.4000000000001px;"><span id="t63">10 &lt; 100</span></div>
<svg style="left:3259px;top:1171px;" width="3" height="34" viewBox="0 0 3 34"><rect x="0" y="0" width="1.6" height="1.6" fill="#b8b5b1"/><rect x="0" y="5" width="1.6" height="1.6" fill="#b8b5b1"/><rect x="0" y="10" width="1.6" height="1.6" fill="#b8b5b1"/><rect x="0" y="15" width="1.6" height="1.6" fill="#b8b5b1"/><rect x="0" y="20" width="1.6" height="1.6" fill="#b8b5b1"/><rect x="0" y="25" width="1.6" height="1.6" fill="#b8b5b1"/><rect x="0" y="30" width="1.6" height="1.6" fill="#b8b5b1"/></svg>
<div style="left:352.8px;top:439px;width:2394.2px;height:1423px;background:#efece8;border-bottom:4.6px solid #d0d0d0;border-left:1px solid #d8d8d8;border-right:1px solid #d2d2d2;"></div>
<div style="left:352.8px;top:439px;width:2394.2px;height:28px;background:#dddddd;border-top:1px solid #ececec;"></div>
<svg style="left:360.4px;top:445.7px;" width="16" height="16" viewBox="0 0 16 16"><defs><linearGradient id="qr" x1="0" y1="0" x2="1" y2="1"><stop offset="0" stop-color="#8a9cd0"/><stop offset="0.45" stop-color="#2f478f"/><stop offset="1" stop-color="#24397c"/></linearGradient></defs><circle cx="7" cy="7" r="5.6" fill="#f6f5f6" stroke="url(#qr)" stroke-width="1.9"/><path d="M3.6,7.2 H10.2 M7,3 V8.6" stroke="#a8a6a8" stroke-width="0.6" fill="none"/><path d="M4,8.8 H8.6 M8.2,3.6 L7.2,6" stroke="#e88" stroke-width="0.6" fill="none"/><path d="M7.4,7.3 L12.4,12.7" stroke="#f2a21a" stroke-width="2.1" stroke-linecap="butt"/><path d="M7.9,7.3 L12.6,12.2" stroke="#fbd86a" stroke-width="0.7"/><path d="M12.3,12.5 L13.5,13.8" stroke="#e8707a" stroke-width="2.1"/><path d="M6.9,6.6 L7.9,8.1 L8.4,7.2 Z" fill="#d8c0a0"/></svg>
<div class="t" style="top:438.00px;font-size:24px;line-height:31px;color:#777;font-weight:700;letter-spacing:-0.664px;left:382.2px;"><span id="t64">Application Preferences</span></div>
<svg style="left:2727px;top:447px;" width="13" height="13" viewBox="0 0 13 13"><path d="M2.5,2.5 L10.5,10.5 M10.5,2.5 L2.5,10.5" stroke="#999" stroke-width="1.5"/></svg>
<div style="left:364px;top:477.3px;width:835.5px;height:43.5px;background:#fff;border:2px solid #aaa7a3;border-radius:5px;"></div>
<div class="t" style="top:490.50px;font-size:12px;line-height:16px;color:#9a9a9a;left:370.5px;"><span id="t65">Filter</span></div>
<svg style="left:1214px;top:490.2px;" width="13.4" height="13.4" viewBox="0 0 13.4 13.4"><rect x="0.6" y="0.6" width="10" height="10.2" rx="1.2" fill="#f4f2ef" stroke="#b4b1ad" stroke-width="1"/><rect x="2.3" y="2.1" width="10.4" height="10.6" rx="1.2" fill="#fbfaf9" stroke="#8d8a86" stroke-width="1.1"/><path d="M4,7.4 H11 M7.5,3.9 V10.9" stroke="#222" stroke-width="1.1"/></svg>
<svg style="left:1250px;top:490.2px;" width="13.4" height="13.4" viewBox="0 0 13.4 13.4"><rect x="0.6" y="0.6" width="10" height="10.2" rx="1.2" fill="#f4f2ef" stroke="#b4b1ad" stroke-width="1"/><rect x="2.3" y="2.1" width="10.4" height="10.6" rx="1.2" fill="#fbfaf9" stroke="#8d8a86" stroke-width="1.1"/><path d="M4,7.4 H11" stroke="#222" stroke-width="1.1"/></svg>
<div class="t" style="top:486.80px;font-size:16px;line-height:21px;color:#000;font-weight:700;letter-spacing:-0.550px;left:1276px;"><span id="t66">Graphics View: Appearance</span></div>
<svg style="left:2713.6px;top:488.8px;" width="13" height="12" viewBox="0 0 13 12"><path d="M0.7,0.9 L0.7,5.4 L2.8,4.6 C4.6,3.8 7.2,4 8.2,5.6 C9,7 8.2,8.8 6.4,9.2 L6.8,11.2 C10.2,10.8 12.4,7.8 11.2,4.8 C10,1.8 5.8,0.6 2.6,2.4 Z" fill="#f8d49a" stroke="#e4a444" stroke-width="0.9" stroke-linejoin="round"/></svg>
<div style="left:1276px;top:522.6px;width:1458.8px;height:3px;border-top:1.3px solid #b5b2ae;border-bottom:1.3px solid #fdfcfb;"></div>
<div style="left:364px;top:526.6px;width:907px;height:1287px;background:#fff;border:1.3px solid #a9a6a2;"></div>
<div class="t" style="top:528.80px;font-size:12px;line-height:16px;color:#000;left:392.2px;"><span id="t67">Defaults for New Drawings</span></div>
<svg style="left:368px;top:532.8px;" width="16" height="8" viewBox="0 0 16 8"><path d="M0.3,0.5 H15.7 L8,7.5 Z" fill="#555"/></svg>
<div class="t" style="top:544.80px;font-size:12px;line-height:16px;color:#000;left:412.2px;"><span id="t68">Dimension Settings</span></div>
<div class="t" style="top:560.80px;font-size:12px;line-height:16px;color:#000;left:412.2px;"><span id="t69">Drawing Unit</span></div>
<div class="t" style="top:576.80px;font-size:12px;line-height:16px;color:#000;left:412.2px;"><span id="t70">Grid</span></div>
<div class="t" style="top:592.80px;font-size:12px;line-height:16px;color:#000;left:412.2px;"><span id="t71">Layout - Viewports</span></div>
<div class="t" style="top:608.80px;font-size:12px;line-height:16px;color:#000;left:412.2px;"><span id="t72">Linetype</span></div>
<div class="t" style="top:624.80px;font-size:12px;line-height:16px;color:#000;left:412.2px;"><span id="t73">Point Display</span></div>
<div class="t" style="top:640.80px;font-size:12px;line-height:16px;color:#000;left:412.2px;"><span id="t74">Printing - Colors</span></div>
<div class="t" style="top:656.80px;font-size:12px;line-height:16px;color:#000;left:412.2px;"><span id="t75">Printing - Multi Pages</span></div>
<div class="t" style="top:672.80px;font-size:12px;line-height:16px;color:#000;left:412.2px;"><span id="t76">Printing - Page</span></div>
<div class="t" style="top:688.80px;font-size:12px;line-height:16px;color:#000;left:412.2px;"><span id="t77">Printing - Page Tags</span></div>
<div class="t" style="top:704.80px;font-size:12px;line-height:16px;color:#000;left:412.2px;"><span id="t78">Text</span></div>
<div class="t" style="top:720.80px;font-size:12px;line-height:16px;color:#000;left:392.2px;"><span id="t79">Draw</span></div>
<svg style="left:368px;top:724.8px;" width="16" height="8" viewBox="0 0 16 8"><path d="M0.3,0.5 H15.7 L8,7.5 Z" fill="#555"/></svg>
<div class="t" style="top:736.80px;font-size:12px;line-height:16px;color:#000;left:412.2px;"><span id="t80">Polyline from Selection</span></div>
<div class="t" style="top:752.80px;font-size:12px;line-height:16px;color:#000;left:412.2px;"><span id="t81">Text</span></div>
<div class="t" style="top:768.80px;font-size:12px;line-height:16px;color:#000;left:392.2px;"><span id="t82">Edit</span></div>
<svg style="left:368px;top:772.8px;" width="16" height="8" viewBox="0 0 16 8"><path d="M0.3,0.5 H15.7 L8,7.5 Z" fill="#555"/></svg>
<div class="t" style="top:784.80px;font-size:12px;line-height:16px;color:#000;left:412.2px;"><span id="t83">Move</span></div>
<div class="t" style="top:800.80px;font-size:12px;line-height:16px;color:#000;left:412.2px;"><span id="t84">Paste</span></div>
<div class="t" style="top:816.80px;font-size:12px;line-height:16px;color:#000;left:412.2px;"><span id="t85">Rotate</span></div>
<div class="t" style="top:832.80px;font-size:12px;line-height:16px;color:#000;left:412.2px;"><span id="t86">Substitute Fonts</span></div>
<div class="t" style="top:848.80px;font-size:12px;line-height:16px;color:#000;left:392.2px;"><span id="t87">File</span></div>
<svg style="left:368px;top:852.8px;" width="16" height="8" viewBox="0 0 16 8"><path d="M0.3,0.5 H15.7 L8,7.5 Z" fill="#555"/></svg>
<div class="t" style="top:864.80px;font-size:12px;line-height:16px;color:#000;left:412.2px;"><span id="t88">Autosave</span></div>
<div class="t" style="top:880.80px;font-size:12px;line-height:16px;color:#000;left:412.2px;"><span id="t89">Open/Save</span></div>
<div class="t" style="top:896.80px;font-size:12px;line-height:16px;color:#000;left:412.2px;"><span id="t90">Print Preview</span></div>
<div class="t" style="top:912.80px;font-size:12px;line-height:16px;color:#000;left:412.2px;"><span id="t91">Quick SVG Export</span></div>
<div class="t" style="top:928.80px;font-size:12px;line-height:16px;color:#000;left:412.2px;"><span id="t92">Recent Files</span></div>
<div class="t" style="top:944.80px;font-size:12px;line-height:16px;color:#000;left:412.2px;"><span id="t93">SVG Import</span></div>
<div class="t" style="top:960.80px;font-size:12px;line-height:16px;color:#000;left:412.2px;"><span id="t94">Templates</span></div>
<div class="t" style="top:976.80px;font-size:12px;line-height:16px;color:#000;left:392.2px;"><span id="t95">General</span></div>
<svg style="left:368px;top:980.8px;" width="16" height="8" viewBox="0 0 16 8"><path d="M0.3,0.5 H15.7 L8,7.5 Z" fill="#555"/></svg>
<div class="t" style="top:992.80px;font-size:12px;line-height:16px;color:#000;left:412.2px;"><span id="t96">Color Palette</span></div>
<div class="t" style="top:1008.80px;font-size:12px;line-height:16px;color:#000;left:412.2px;"><span id="t97">Coordinate Format</span></div>
<div class="t" style="top:1024.80px;font-size:12px;line-height:16px;color:#000;font-weight:700;left:412.2px;"><span id="t98">Keyboard</span></div>
<div class="t" style="top:1040.80px;font-size:12px;line-height:16px;color:#000;left:412.2px;"><span id="t99">Theme</span></div>
<div class="t" style="top:1056.80px;font-size:12px;line-height:16px;color:#000;left:412.2px;"><span id="t100">Tool Settings</span></div>
<div class="t" style="top:1072.80px;font-size:12px;line-height:16px;color:#000;font-weight:700;left:412.2px;"><span id="t101">User Interface</span></div>
<div class="t" style="top:1088.80px;font-size:12px;line-height:16px;color:#000;left:392.2px;"><span id="t102">Graphics View</span></div>
<svg style="left:368px;top:1092.8px;" width="16" height="8" viewBox="0 0 16 8"><path d="M0.3,0.5 H15.7 L8,7.5 Z" fill="#555"/></svg>
<div style="left:366px;top:1104.8px;width:890.5px;height:16px;background:#308cc6;"></div>
<div class="t" style="top:1104.80px;font-size:12px;line-height:16px;color:#fff;font-weight:700;left:412.2px;"><span id="t103">Appearance</span></div>
<div class="t" style="top:1120.80px;font-size:12px;line-height:16px;color:#000;left:412.2px;"><span id="t104">Behavior</span></div>
<div class="t" style="top:1136.80px;font-size:12px;line-height:16px;color:#000;left:412.2px;"><span id="t105">Colors</span></div>
<div class="t" style="top:1152.80px;font-size:12px;line-height:16px;color:#000;left:412.2px;"><span id="t106">Context Menu</span></div>
<div class="t" style="top:1168.80px;font-size:12px;line-height:16px;color:#000;left:412.2px;"><span id="t107">Fonts</span></div>
<div class="t" style="top:1184.80px;font-size:12px;line-height:16px;color:#000;left:412.2px;"><span id="t108">Grid</span></div>
<div class="t" style="top:1200.80px;font-size:12px;line-height:16px;color:#000;left:412.2px;"><span id="t109">Navigation</span></div>
<div class="t" style="top:1216.80px;font-size:12px;line-height:16px;color:#000;left:412.2px;"><span id="t110">Text Rendering</span></div>
<div class="t" style="top:1232.80px;font-size:12px;line-height:16px;color:#000;left:392.2px;"><span id="t111">Info</span></div>
<svg style="left:368px;top:1236.8px;" width="16" height="8" viewBox="0 0 16 8"><path d="M0.3,0.5 H15.7 L8,7.5 Z" fill="#555"/></svg>
<div class="t" style="top:1248.80px;font-size:12px;line-height:16px;color:#000;left:412.2px;"><span id="t112">Store Positions</span></div>
<div class="t" style="top:1264.80px;font-size:12px;line-height:16px;color:#000;left:392.2px;"><span id="t113">Language Settings</span></div>
<svg style="left:368px;top:1268.8px;" width="16" height="8" viewBox="0 0 16 8"><path d="M0.3,0.5 H15.7 L8,7.5 Z" fill="#555"/></svg>
<div class="t" style="top:1280.80px;font-size:12px;line-height:16px;color:#000;left:412.2px;"><span id="t114">Language</span></div>
<div class="t" style="top:1296.80px;font-size:12px;line-height:16px;color:#000;left:392.2px;"><span id="t115">Layer</span></div>
<svg style="left:368px;top:1300.8px;" width="16" height="8" viewBox="0 0 16 8"><path d="M0.3,0.5 H15.7 L8,7.5 Z" fill="#555"/></svg>
<div class="t" style="top:1312.80px;font-size:12px;line-height:16px;color:#000;left:412.2px;"><span id="t116">Add Layer</span></div>
<div class="t" style="top:1328.80px;font-size:12px;line-height:16px;color:#000;left:412.2px;"><span id="t117">Compatibility</span></div>
<div class="t" style="top:1344.80px;font-size:12px;line-height:16px;color:#000;left:412.2px;"><span id="t118">Delete Layer</span></div>
<div class="t" style="top:1360.80px;font-size:12px;line-height:16px;color:#000;left:392.2px;"><span id="t119">Modify</span></div>
<svg style="left:368px;top:1364.8px;" width="16" height="8" viewBox="0 0 16 8"><path d="M0.3,0.5 H15.7 L8,7.5 Z" fill="#555"/></svg>
<div class="t" style="top:1376.80px;font-size:12px;line-height:16px;color:#000;left:412.2px;"><span id="t120">Explode</span></div>
<div class="t" style="top:1392.80px;font-size:12px;line-height:16px;color:#000;left:412.2px;"><span id="t121">Mirror</span></div>
<div class="t" style="top:1408.80px;font-size:12px;line-height:16px;color:#000;left:412.2px;"><span id="t122">Move/Copy</span></div>
<div class="t" style="top:1424.80px;font-size:12px;line-height:16px;color:#000;left:412.2px;"><span id="t123">Offset</span></div>
<div class="t" style="top:1440.80px;font-size:12px;line-height:16px;color:#000;left:412.2px;"><span id="t124">Order Connected</span></div>
<div class="t" style="top:1456.80px;font-size:12px;line-height:16px;color:#000;left:412.2px;"><span id="t125">Projections</span></div>
<div class="t" style="top:1472.80px;font-size:12px;line-height:16px;color:#000;left:412.2px;"><span id="t126">Reorder</span></div>
<div class="t" style="top:1488.80px;font-size:12px;line-height:16px;color:#000;left:412.2px;"><span id="t127">Rotate</span></div>
<div class="t" style="top:1504.80px;font-size:12px;line-height:16px;color:#000;left:412.2px;"><span id="t128">Scale</span></div>
<div class="t" style="top:1520.80px;font-size:12px;line-height:16px;color:#000;left:392.2px;"><span id="t129">Overlay</span></div>
<svg style="left:368px;top:1524.8px;" width="16" height="8" viewBox="0 0 16 8"><path d="M0.3,0.5 H15.7 L8,7.5 Z" fill="#555"/></svg>
<div class="t" style="top:1536.80px;font-size:12px;line-height:16px;color:#000;left:412.2px;"><span id="t130">Direction</span></div>
<div class="t" style="top:1552.80px;font-size:12px;line-height:16px;color:#000;left:412.2px;"><span id="t131">Order</span></div>
<div class="t" style="top:1568.80px;font-size:12px;line-height:16px;color:#000;left:412.2px;"><span id="t132">Startpoint</span></div>
<div class="t" style="top:1584.80px;font-size:12px;line-height:16px;color:#000;left:392.2px;"><span id="t133">Printer Settings</span></div>
<svg style="left:368px;top:1588.8px;" width="16" height="8" viewBox="0 0 16 8"><path d="M0.3,0.5 H15.7 L8,7.5 Z" fill="#555"/></svg>
<div class="t" style="top:1600.80px;font-size:12px;line-height:16px;color:#000;left:412.2px;"><span id="t134">Calibration</span></div>
<div class="t" style="top:1616.80px;font-size:12px;line-height:16px;color:#000;left:392.2px;"><span id="t135">Scripting</span></div>
<div class="t" style="top:1632.80px;font-size:12px;line-height:16px;color:#000;left:392.2px;"><span id="t136">Snap</span></div>
<svg style="left:368px;top:1636.8px;" width="16" height="8" viewBox="0 0 16 8"><path d="M0.3,0.5 H15.7 L8,7.5 Z" fill="#555"/></svg>
<div class="t" style="top:1648.80px;font-size:12px;line-height:16px;color:#000;left:412.2px;"><span id="t137">Auto Snap</span></div>
<div class="t" style="top:1664.80px;font-size:12px;line-height:16px;color:#000;left:412.2px;"><span id="t138">Intersection Manual</span></div>
<div class="t" style="top:1680.80px;font-size:12px;line-height:16px;color:#000;left:392.2px;"><span id="t139">Startup</span></div>
<div class="t" style="top:1696.80px;font-size:12px;line-height:16px;color:#000;left:392.2px;"><span id="t140">Widgets</span></div>
<svg style="left:368px;top:1700.8px;" width="16" height="8" viewBox="0 0 16 8"><path d="M0.3,0.5 H15.7 L8,7.5 Z" fill="#555"/></svg>
<div class="t" style="top:1712.80px;font-size:12px;line-height:16px;color:#000;left:412.2px;"><span id="t141">Block List</span></div>
<div class="t" style="top:1728.80px;font-size:12px;line-height:16px;color:#000;left:412.2px;"><span id="t142">CAD Toolbar</span></div>
<div class="t" style="top:1744.80px;font-size:12px;line-height:16px;color:#000;left:412.2px;"><span id="t143">Command Line</span></div>
<div class="t" style="top:1760.80px;font-size:12px;line-height:16px;color:#000;left:412.2px;"><span id="t144">Coordinate Display</span></div>
<div class="t" style="top:1776.80px;font-size:12px;line-height:16px;color:#000;left:412.2px;"><span id="t145">Layer List</span></div>
<div class="t" style="top:1792.80px;font-size:12px;line-height:16px;color:#000;left:412.2px;"><span id="t146">Library Browser</span></div>
<div class="t" style="top:1808.80px;font-size:12px;line-height:16px;color:#000;left:412.2px;clip-path:inset(0 0 12.6px 0);"><span id="t147">Linetype Browser</span></div>
<div style="left:1256.5px;top:528px;width:14px;height:1284.5px;background:#f6f4f1;border-left:1px solid #d0cdc9;"></div>
<div style="left:1257.5px;top:541.8px;width:13px;height:1168.5px;background:linear-gradient(90deg,#fefdfc,#eeece9);border-top:1px solid #b5b2ae;border-bottom:1px solid #b5b2ae;"></div>
<div style="left:1257.5px;top:1710.3px;width:13px;height:88px;background:#e5e3e0;border-bottom:1px solid #b5b2ae;"></div>
<svg style="left:1257px;top:533px;" width="13.6" height="9" viewBox="0 0 13.6 9"><path d="M0,8.8 H13.6 L6.8,0.4 Z" fill="#555"/></svg>
<svg style="left:1257px;top:1803px;" width="13.6" height="9" viewBox="0 0 13.6 9"><path d="M0,0.2 H13.6 L6.8,8.6 Z" fill="#555"/></svg>
<svg style="left:1274.3px;top:1134px;" width="3" height="34" viewBox="0 0 3 34"><rect x="0" y="0.0" width="1.5" height="1.5" fill="#b5b2ae"/><rect x="0" y="4.5" width="1.5" height="1.5" fill="#b5b2ae"/><rect x="0" y="9.0" width="1.5" height="1.5" fill="#b5b2ae"/><rect x="0" y="13.5" width="1.5" height="1.5" fill="#b5b2ae"/><rect x="0" y="18.0" width="1.5" height="1.5" fill="#b5b2ae"/><rect x="0" y="22.5" width="1.5" height="1.5" fill="#b5b2ae"/><rect x="0" y="27.0" width="1.5" height="1.5" fill="#b5b2ae"/><rect x="0" y="31.5" width="1.5" height="1.5" fill="#b5b2ae"/></svg>
<div style="left:1276px;top:535.5px;width:1459px;height:1278px;border:1.3px solid #b5b2ae;border-right:none;"></div>
<div style="left:2720.3px;top:536.5px;width:14.6px;height:1276.5px;background:#f6f4f1;border-left:1px solid #cfccc8;border-right:1px solid #b5b2ae;"></div>
<div style="left:2721.3px;top:549.4px;width:12.6px;height:213.8px;background:#e5e3e0;border-top:1px solid #b5b2ae;border-bottom:1px solid #b5b2ae;box-shadow:inset 2px 0 0 #dad8d5,inset -2px 0 0 #dad8d5;"></div>
<div style="left:2721.3px;top:763.2px;width:12.6px;height:1035.5px;background:linear-gradient(90deg,#fefdfc,#eeece9);border-bottom:1px solid #b5b2ae;"></div>
<svg style="left:2721px;top:540.7px;" width="13.6" height="9" viewBox="0 0 13.6 9"><path d="M0,8.8 H13.6 L6.8,0.4 Z" fill="#555"/></svg>
<svg style="left:2721px;top:1803px;" width="13.6" height="9" viewBox="0 0 13.6 9"><path d="M0,0.2 H13.6 L6.8,8.6 Z" fill="#555"/></svg>
<div class="t" style="top:535.20px;font-size:12px;line-height:16px;color:#000;letter-spacing:-0.023px;left:1286.3px;"><span id="t148">Auto Zoom</span></div>
<div style="left:1288px;top:557px;width:1424px;height:103.5px;background:#ebe8e4;border:1px solid #d5d2ce;border-radius:3px;box-shadow:inset 0 1px 0 #e3e0dc;"></div>
<div class="t" style="top:582.80px;font-size:12px;line-height:16px;color:#000;letter-spacing:-0.085px;left:1300.3px;"><span id="t149">Margin (px):</span></div>
<div style="left:1371.5px;top:568.4px;width:201px;height:44.7px;background:#fff;border:2.4px solid #aaa7a3;border-radius:5.5px;box-shadow:inset 0 2px 1px -1px #e2e0dd;"></div>
<div style="left:1530px;top:571px;width:40px;height:39.5px;background:linear-gradient(#fdfdfc,#ebe9e6);border-left:1px solid #c9c6c2;border-radius:0 3px 3px 0;"></div>
<svg style="left:1543.0px;top:586.75px;" width="15" height="9" viewBox="0 0 15 9"><path d="M0,0 H15 L7.5,9 Z" fill="#555"/></svg>
<div class="t" style="top:583.05px;font-size:12px;line-height:16px;color:#000;left:1380.5px;"><span id="t150">10</span></div>
<div style="left:1300px;top:625.2px;width:14px;height:14px;background:#fff;border:1.5px solid #aaa7a3;border-radius:2.5px;"></div>
<svg style="left:1300px;top:625.2px;" width="14" height="14" viewBox="0 0 14 14"><path d="M8.4,3.2 L10,3.2 L7.6,11.3 L5.2,11.3 L5.7,9.6 L4.2,9.6 L4.2,7.4 L6.4,7.4 Z" fill="#000"/></svg>
<div class="t" style="top:624.40px;font-size:12px;line-height:16px;color:#000;letter-spacing:-0.034px;left:1318.3px;"><span id="t151">Auto zoom on load</span></div>
<div style="left:1286.3px;top:669.20px;width:89.20px;height:16px;overflow:hidden;"><div class="t" style="top:0px;font-size:12px;line-height:16px;color:#000;left:0px;"><span id="t152">Color Adjustment</span></div></div>
<div style="left:1288px;top:692px;width:1424px;height:142.5px;background:#ebe8e4;border:1px solid #d5d2ce;border-radius:3px;box-shadow:inset 0 1px 0 #e3e0dc;"></div>
<div style="left:1300px;top:709.8px;width:14px;height:14px;background:#fff;border:1.5px solid #aaa7a3;border-radius:2.5px;"></div>
<svg style="left:1300px;top:709.8px;" width="14" height="14" viewBox="0 0 14 14"><path d="M8.4,3.2 L10,3.2 L7.6,11.3 L5.2,11.3 L5.7,9.6 L4.2,9.6 L4.2,7.4 L6.4,7.4 Z" fill="#000"/></svg>
<div class="t" style="top:709.00px;font-size:12px;line-height:16px;color:#000;letter-spacing:0.007px;left:1318.3px;"><span id="t153">Prevent white on white / black on black display</span></div>
<div style="left:1356px;top:743.7px;width:14px;height:14px;background:#fff;border:1.5px solid #aaa7a3;border-radius:2.5px;"></div>
<div class="t" style="top:742.90px;font-size:12px;line-height:16px;color:#000;letter-spacing:0.022px;left:1374.3px;"><span id="t154">Disable for printing</span></div>
<div class="t" style="top:788.00px;font-size:12px;line-height:16px;color:#000;letter-spacing:0.004px;left:1358.3px;"><span id="t155">Color lightness threshold:</span></div>
<div style="left:1499.8px;top:778.7px;width:64.5px;height:32.7px;background:#fff;border:2.4px solid #aaa7a3;border-radius:5.5px;"></div>
<div style="left:1547.5px;top:781.3px;width:14.3px;height:27.5px;background:linear-gradient(#fdfdfc,#eceae7);border-left:1px solid #c9c6c2;border-radius:0 3px 3px 0;"></div>
<svg style="left:1548px;top:785px;" width="14" height="20" viewBox="0 0 14 20"><path d="M0.3,8.2 H13.7 L7,0.8 Z M0.3,11.8 H13.7 L7,19.2 Z" fill="#555"/></svg>
<div class="t" style="top:787.30px;font-size:12px;line-height:16px;color:#000;left:1510.3px;"><span id="t156">10</span></div>
<div class="t" style="top:843.00px;font-size:12px;line-height:16px;color:#000;letter-spacing:-0.060px;left:1286.3px;"><span id="t157">Linetypes and Lineweight</span></div>
<div style="left:1288px;top:866px;width:1424px;height:230px;background:#ebe8e4;border:1px solid #d5d2ce;border-radius:3px;box-shadow:inset 0 1px 0 #e3e0dc;"></div>
<div class="t" style="top:893.00px;font-size:12px;line-height:16px;color:#000;letter-spacing:-0.003px;left:1300.3px;"><span id="t158">Default lineweight:</span></div>
<div style="left:1407.8px;top:877.1px;width:166.7px;height:47.800000000000004px;background:linear-gradient(#fefefe,#f4f3f1 45%,#e9e7e4);border:2.4px solid #aaa7a3;border-radius:5.5px;"></div>
<svg style="left:1545.5px;top:897.0px;" width="15" height="9" viewBox="0 0 15 9"><path d="M0,0 H15 L7.5,9 Z" fill="#555"/></svg>
<div style="left:1420.3px;top:901.2px;width:32px;height:1.6px;background:#000;"></div>
<div class="t" style="top:892.80px;font-size:12px;line-height:16px;color:#000;letter-spacing:0.107px;left:1458px;"><span id="t159">0.00mm</span></div>
<div style="left:1300px;top:937.8px;width:14px;height:14px;background:#fff;border:1.5px solid #aaa7a3;border-radius:2.5px;"></div>
<div class="t" style="top:937.00px;font-size:12px;line-height:16px;color:#000;letter-spacing:-0.006px;left:1318.3px;"><span id="t160">Auto switch to screen based linetypes in model view</span></div>
<div style="left:1300px;top:971.8px;width:14px;height:14px;background:#fff;border:1.5px solid #aaa7a3;border-radius:2.5px;"></div>
<svg style="left:1300px;top:971.8px;" width="14" height="14" viewBox="0 0 14 14"><path d="M8.4,3.2 L10,3.2 L7.6,11.3 L5.2,11.3 L5.7,9.6 L4.2,9.6 L4.2,7.4 L6.4,7.4 Z" fill="#000"/></svg>
<div class="t" style="top:971.00px;font-size:12px;line-height:16px;color:#000;letter-spacing:-0.038px;left:1318.3px;"><span id="t161">Scale linetype patterns by line weight</span></div>
<div class="t" style="top:1016.00px;font-size:12px;line-height:16px;color:#000;letter-spacing:0.039px;left:1356.2px;"><span id="t162">Pattern scale for lineweight 0.00mm:</span></div>
<div style="left:1559.8px;top:999.0px;width:200.7px;height:47.800000000000004px;background:linear-gradient(#fefefe,#f4f3f1 45%,#e9e7e4);border:2.4px solid #aaa7a3;border-radius:5.5px;"></div>
<svg style="left:1731.5px;top:1018.9px;" width="15" height="9" viewBox="0 0 15 9"><path d="M0,0 H15 L7.5,9 Z" fill="#555"/></svg>
<div style="left:1572.3px;top:1023.2px;width:32px;height:1.6px;background:#000;"></div>
<div class="t" style="top:1014.80px;font-size:12px;line-height:16px;color:#000;letter-spacing:-0.113px;left:1610.3px;"><span id="t163">0.25mm (ISO)</span></div>
<div style="left:1300px;top:1061.8px;width:14px;height:14px;background:#fff;border:1.5px solid #aaa7a3;border-radius:2.5px;"></div>
<div class="t" style="top:1061.00px;font-size:12px;line-height:16px;color:#000;letter-spacing:0.009px;left:1318.3px;"><span id="t164">Apply line weight to points</span></div>
<div style="left:1286.3px;top:1105.00px;width:127.50px;height:16px;overflow:hidden;"><div class="t" style="top:0px;font-size:12px;line-height:16px;color:#000;left:0px;"><span id="t165">Display and Performance</span></div></div>
<div style="left:1288px;top:1127.7px;width:1424px;height:592.5px;background:#ebe8e4;border:1px solid #d5d2ce;border-radius:3px;box-shadow:inset 0 1px 0 #e3e0dc;"></div>
<div style="left:1300px;top:1145.7px;width:14px;height:14px;background:#fff;border:1.5px solid #aaa7a3;border-radius:2.5px;"></div>
<div class="t" style="top:1144.90px;font-size:12px;line-height:16px;color:#000;letter-spacing:0.003px;left:1318.3px;"><span id="t166">Anti-aliasing on by default</span></div>
<div style="left:1300px;top:1179.9px;width:14px;height:14px;background:#fff;border:1.5px solid #aaa7a3;border-radius:2.5px;"></div>
<div class="t" style="top:1179.10px;font-size:12px;line-height:16px;color:#000;letter-spacing:0.027px;left:1318.3px;"><span id="t167">Use full resolution for Retina / high resolution display</span></div>
<div class="t" style="top:1213.00px;font-size:12px;line-height:16px;color:#000;letter-spacing:-0.012px;left:1300.3px;"><span id="t168">Number of threads:</span></div>
<div style="left:1623.7px;top:1207.1000000000001px;width:1074.3px;height:43.800000000000004px;background:linear-gradient(#fefefe,#f4f3f1 45%,#e9e7e4);border:2.4px solid #aaa7a3;border-radius:5.5px;"></div>
<svg style="left:2669.0px;top:1225.0px;" width="15" height="9" viewBox="0 0 15 9"><path d="M0,0 H15 L7.5,9 Z" fill="#555"/></svg>
<div class="t" style="top:1221.30px;font-size:12px;line-height:16px;color:#000;left:1634.2px;"><span id="t169">auto (4)</span></div>
<div class="t" style="top:1263.03px;font-size:12px;line-height:16px;color:#000;letter-spacing:0.003px;left:1300.3px;"><span id="t170">Number of preview entities:</span></div>
<div style="left:1623.7px;top:1257.13px;width:1074.3px;height:43.800000000000004px;background:#fff;border:2.4px solid #aaa7a3;border-radius:5.5px;box-shadow:inset 0 2px 1px -1px #e2e0dd;"></div>
<div style="left:2655.5px;top:1259.73px;width:40px;height:38.6px;background:linear-gradient(#fdfdfc,#ebe9e6);border-left:1px solid #c9c6c2;border-radius:0 3px 3px 0;"></div>
<svg style="left:2668.5px;top:1275.03px;" width="15" height="9" viewBox="0 0 15 9"><path d="M0,0 H15 L7.5,9 Z" fill="#555"/></svg>
<div class="t" style="top:1271.33px;font-size:12px;line-height:16px;color:#000;left:1632.2px;"><span id="t171">500</span></div>
<div class="t" style="top:1313.06px;font-size:12px;line-height:16px;color:#000;letter-spacing:-0.057px;left:1300.3px;"><span id="t172">Display arcs as lines below this angle (degrees):</span></div>
<div style="left:1623.7px;top:1307.16px;width:1074.3px;height:43.800000000000004px;background:#fff;border:2.4px solid #aaa7a3;border-radius:5.5px;box-shadow:inset 0 2px 1px -1px #e2e0dd;"></div>
<div style="left:2655.5px;top:1309.76px;width:40px;height:38.6px;background:linear-gradient(#fdfdfc,#ebe9e6);border-left:1px solid #c9c6c2;border-radius:0 3px 3px 0;"></div>
<svg style="left:2668.5px;top:1325.06px;" width="15" height="9" viewBox="0 0 15 9"><path d="M0,0 H15 L7.5,9 Z" fill="#555"/></svg>
<div class="t" style="top:1321.36px;font-size:12px;line-height:16px;color:#000;left:1632.2px;"><span id="t173">0</span></div>
<div class="t" style="top:1363.09px;font-size:12px;line-height:16px;color:#000;letter-spacing:-0.006px;left:1300.3px;"><span id="t174">Minimum angle step for rendering arcs (degrees):</span></div>
<div style="left:1623.7px;top:1357.19px;width:1074.3px;height:43.800000000000004px;background:#fff;border:2.4px solid #aaa7a3;border-radius:5.5px;box-shadow:inset 0 2px 1px -1px #e2e0dd;"></div>
<div style="left:2655.5px;top:1359.79px;width:40px;height:38.6px;background:linear-gradient(#fdfdfc,#ebe9e6);border-left:1px solid #c9c6c2;border-radius:0 3px 3px 0;"></div>
<svg style="left:2668.5px;top:1375.09px;" width="15" height="9" viewBox="0 0 15 9"><path d="M0,0 H15 L7.5,9 Z" fill="#555"/></svg>
<div class="t" style="top:1371.39px;font-size:12px;line-height:16px;color:#000;left:1632.2px;"><span id="t175">0.2</span></div>
<div class="t" style="top:1413.12px;font-size:12px;line-height:16px;color:#000;letter-spacing:-0.009px;left:1300.3px;"><span id="t176">Display entities with more than N dashes as continuous:</span></div>
<div style="left:1623.7px;top:1407.2200000000003px;width:1074.3px;height:43.800000000000004px;background:#fff;border:2.4px solid #aaa7a3;border-radius:5.5px;box-shadow:inset 0 2px 1px -1px #e2e0dd;"></div>
<div style="left:2655.5px;top:1409.8200000000002px;width:40px;height:38.6px;background:linear-gradient(#fdfdfc,#ebe9e6);border-left:1px solid #c9c6c2;border-radius:0 3px 3px 0;"></div>
<svg style="left:2668.5px;top:1425.1200000000001px;" width="15" height="9" viewBox="0 0 15 9"><path d="M0,0 H15 L7.5,9 Z" fill="#555"/></svg>
<div class="t" style="top:1421.42px;font-size:12px;line-height:16px;color:#000;left:1632.2px;"><span id="t177">1000</span></div>
<div class="t" style="top:1463.15px;font-size:12px;line-height:16px;color:#000;letter-spacing:0.025px;left:1300.3px;"><span id="t178">Timeout for hatch rendering:</span></div>
<div style="left:1623.7px;top:1457.2500000000002px;width:1074.3px;height:43.800000000000004px;background:#fff;border:2.4px solid #aaa7a3;border-radius:5.5px;box-shadow:inset 0 2px 1px -1px #e2e0dd;"></div>
<div style="left:2655.5px;top:1459.8500000000001px;width:40px;height:38.6px;background:linear-gradient(#fdfdfc,#ebe9e6);border-left:1px solid #c9c6c2;border-radius:0 3px 3px 0;"></div>
<svg style="left:2668.5px;top:1475.15px;" width="15" height="9" viewBox="0 0 15 9"><path d="M0,0 H15 L7.5,9 Z" fill="#555"/></svg>
<div class="t" style="top:1471.45px;font-size:12px;line-height:16px;color:#000;left:1632.2px;"><span id="t179">2000</span></div>
<div class="t" style="top:1513.18px;font-size:12px;line-height:16px;color:#000;letter-spacing:0.046px;left:1300.3px;"><span id="t180">Maximum selected entities with reference points:</span></div>
<div style="left:1623.7px;top:1507.2800000000002px;width:1074.3px;height:43.800000000000004px;background:#fff;border:2.4px solid #aaa7a3;border-radius:5.5px;box-shadow:inset 0 2px 1px -1px #e2e0dd;"></div>
<div style="left:2655.5px;top:1509.88px;width:40px;height:38.6px;background:linear-gradient(#fdfdfc,#ebe9e6);border-left:1px solid #c9c6c2;border-radius:0 3px 3px 0;"></div>
<svg style="left:2668.5px;top:1525.18px;" width="15" height="9" viewBox="0 0 15 9"><path d="M0,0 H15 L7.5,9 Z" fill="#555"/></svg>
<div class="t" style="top:1521.48px;font-size:12px;line-height:16px;color:#000;left:1632.2px;"><span id="t181">1000</span></div>
<div class="t" style="top:1563.21px;font-size:12px;line-height:16px;color:#000;letter-spacing:0.029px;left:1300.3px;"><span id="t182">Maximum selected entities with displayed reference points:</span></div>
<div style="left:1623.7px;top:1557.3100000000002px;width:1074.3px;height:43.800000000000004px;background:#fff;border:2.4px solid #aaa7a3;border-radius:5.5px;box-shadow:inset 0 2px 1px -1px #e2e0dd;"></div>
<div style="left:2655.5px;top:1559.91px;width:40px;height:38.6px;background:linear-gradient(#fdfdfc,#ebe9e6);border-left:1px solid #c9c6c2;border-radius:0 3px 3px 0;"></div>
<svg style="left:2668.5px;top:1575.21px;" width="15" height="9" viewBox="0 0 15 9"><path d="M0,0 H15 L7.5,9 Z" fill="#555"/></svg>
<div class="t" style="top:1571.51px;font-size:12px;line-height:16px;color:#000;left:1632.2px;"><span id="t183">1000</span></div>
<div class="t" style="top:1613.24px;font-size:12px;line-height:16px;color:#000;letter-spacing:-0.105px;left:1300.3px;"><span id="t184">Reference point size (px):</span></div>
<div style="left:1623.7px;top:1607.3400000000001px;width:1074.3px;height:43.800000000000004px;background:linear-gradient(#fefefe,#f4f3f1 45%,#e9e7e4);border:2.4px solid #aaa7a3;border-radius:5.5px;"></div>
<svg style="left:2669.0px;top:1625.24px;" width="15" height="9" viewBox="0 0 15 9"><path d="M0,0 H15 L7.5,9 Z" fill="#555"/></svg>
<div class="t" style="top:1621.54px;font-size:12px;line-height:16px;color:#000;left:1634.2px;"><span id="t185">10</span></div>
<div class="t" style="top:1663.27px;font-size:12px;line-height:16px;color:#000;letter-spacing:-0.003px;left:1300.3px;"><span id="t186">Text height threshold (px):</span></div>
<div style="left:1623.7px;top:1657.3700000000001px;width:1074.3px;height:43.800000000000004px;background:#fff;border:2.4px solid #aaa7a3;border-radius:5.5px;box-shadow:inset 0 2px 1px -1px #e2e0dd;"></div>
<div style="left:2655.5px;top:1659.97px;width:40px;height:38.6px;background:linear-gradient(#fdfdfc,#ebe9e6);border-left:1px solid #c9c6c2;border-radius:0 3px 3px 0;"></div>
<svg style="left:2668.5px;top:1675.27px;" width="15" height="9" viewBox="0 0 15 9"><path d="M0,0 H15 L7.5,9 Z" fill="#555"/></svg>
<div class="t" style="top:1671.57px;font-size:12px;line-height:16px;color:#000;left:1632.2px;"><span id="t187">3</span></div>
<div class="t" style="top:1728.80px;font-size:12px;line-height:16px;color:#000;letter-spacing:-0.042px;left:1286.3px;"><span id="t188">Selection</span></div>
<div style="left:1288px;top:1752px;width:1424px;height:52px;background:#ebe8e4;border:1px solid #d5d2ce;border-radius:3px;box-shadow:inset 0 1px 0 #e3e0dc;"></div>
<div style="left:1300px;top:1769.6px;width:14px;height:14px;background:#fff;border:1.5px solid #aaa7a3;border-radius:2.5px;"></div>
<div class="t" style="top:1768.80px;font-size:12px;line-height:16px;color:#000;letter-spacing:0.022px;left:1318.3px;"><span id="t189">Persistent selection</span></div>
<div style="left:2244.2px;top:1821.1999999999998px;width:159.60000000000002px;height:25.6px;background:linear-gradient(#fdfdfc,#eceae7);border:1.6px solid #aaa7a3;border-radius:5px;"></div>
<div class="t" style="top:1826.20px;font-size:12px;line-height:16px;color:#000;left:1324.0px;width:2000px;text-align:center;"><span id="t190">Apply</span></div>
<div style="left:2410.1px;top:1821.1999999999998px;width:159.60000000000002px;height:25.6px;background:linear-gradient(#fdfdfc,#eceae7);border:1.6px solid #aaa7a3;border-radius:5px;"></div>
<div class="t" style="top:1826.20px;font-size:12px;line-height:16px;color:#000;left:1489.9px;width:2000px;text-align:center;"><span id="t191"><u>C</u>ancel</span></div>
<div style="left:2576.2px;top:1820.8999999999999px;width:159.8px;height:26.2px;background:linear-gradient(#fbfcfd,#eef2f6 45%,#d9e1e9);border:2px solid #1c66a4;border-radius:6px;"></div>
<div class="t" style="top:1826.20px;font-size:12px;line-height:16px;color:#000;left:1656.1px;width:2000px;text-align:center;"><span id="t192"><u>O</u>K</span></div>
<div style="left:3773px;top:299px;width:65px;height:1770px;background:#f4f1ed;border-left:1.5px solid #a9a6a2;"></div>
<div style="left:3770.6px;top:299px;width:1.2px;height:1770px;background:#cbc8c4;"></div>
<svg style="left:3793px;top:300.5px;" width="36" height="8" viewBox="0 0 36 8"><rect x="0" y="0" width="2" height="2" fill="#cfccc8"/><rect x="0" y="5" width="2" height="2" fill="#cfccc8"/><rect x="5" y="0" width="2" height="2" fill="#cfccc8"/><rect x="5" y="5" width="2" height="2" fill="#cfccc8"/><rect x="10" y="0" width="2" height="2" fill="#cfccc8"/><rect x="10" y="5" width="2" height="2" fill="#cfccc8"/><rect x="15" y="0" width="2" height="2" fill="#cfccc8"/><rect x="15" y="5" width="2" height="2" fill="#cfccc8"/><rect x="20" y="0" width="2" height="2" fill="#cfccc8"/><rect x="20" y="5" width="2" height="2" fill="#cfccc8"/><rect x="25" y="0" width="2" height="2" fill="#cfccc8"/><rect x="25" y="5" width="2" height="2" fill="#cfccc8"/><rect x="30" y="0" width="2" height="2" fill="#cfccc8"/><rect x="30" y="5" width="2" height="2" fill="#cfccc8"/></svg>
<div style="left:3777.3px;top:312.4px;width:57.5px;height:57.3px;background:linear-gradient(#858585,#b4b4b4 45%,#dedede 100%);border:1.5px solid #7e7e7e;box-shadow:inset 2px 0 2px -1px #9a9a9a,inset -2px 0 2px -1px #9a9a9a;"></div>
<svg style="left:3784.4px;top:319px;" width="41.3" height="41.5" viewBox="0 0 41.3 41.5"><rect x="0.5" y="0.5" width="40.3" height="40.5" fill="#fff" stroke="#333" stroke-width="1"/><rect x="0" y="0" width="41.3" height="7" fill="#000"/><rect x="1.5" y="1.2" width="4.6" height="4.6" fill="#fff"/><path d="M11,19.5 L22,14.5 V30 L11,34.5 Z" fill="#9a9a9a" stroke="#444" stroke-width="0.8"/><path d="M14.5,21 L28,13.5 V28.5 L14.5,35 Z" fill="#e8e8e8" stroke="#444" stroke-width="0.8"/><path d="M17.5,30.5 L25.5,19 V27.5 Z" fill="none" stroke="#e03030" stroke-width="1"/></svg>
<svg style="left:3784.4px;top:377.3px;" width="41.3" height="41.5" viewBox="0 0 41.3 41.5"><rect x="0.5" y="0.5" width="40.3" height="40.5" fill="#fff" stroke="#333" stroke-width="1"/><rect x="0" y="0" width="41.3" height="7" fill="#000"/><rect x="1.5" y="1.2" width="4.6" height="4.6" fill="#fff"/><rect x="11" y="14.5" width="15.5" height="11.5" fill="#fbeebc" stroke="#333" stroke-width="0.9"/><circle cx="25" cy="26.5" r="6.3" fill="#fbeebc" fill-opacity="0.85" stroke="#333" stroke-width="0.9"/></svg>
<svg style="left:3784.4px;top:435.3px;" width="41.3" height="41.5" viewBox="0 0 41.3 41.5"><rect x="0.5" y="0.5" width="40.3" height="40.5" fill="#fff" stroke="#333" stroke-width="1"/><rect x="0" y="0" width="41.3" height="7" fill="#000"/><rect x="1.5" y="1.2" width="4.6" height="4.6" fill="#fff"/><rect x="8.5" y="16" width="24.5" height="15.5" rx="1.5" fill="#f4f6fa" stroke="#9ab4dc" stroke-width="1"/></svg>
<div style="left:3788px;top:487.7px;width:34px;height:1.4px;background:#d6d3cf;"></div>
<div style="left:3777.3px;top:492.4px;width:57.5px;height:57.2px;background:linear-gradient(#858585,#b4b4b4 45%,#dedede 100%);border:1.5px solid #7e7e7e;box-shadow:inset 2px 0 2px -1px #9a9a9a,inset -2px 0 2px -1px #9a9a9a;"></div>
<svg style="left:3784.4px;top:499.3px;" width="41.3" height="41.5" viewBox="0 0 41.3 41.5"><rect x="0.5" y="0.5" width="40.3" height="40.5" fill="#fff" stroke="#333" stroke-width="1"/><rect x="0" y="0" width="41.3" height="7" fill="#000"/><rect x="1.5" y="1.2" width="4.6" height="4.6" fill="#fff"/><rect x="5" y="12.2" width="6.3" height="4.6" fill="#000"/><rect x="15.5" y="12.0" width="20.5" height="4.8" rx="1.6" fill="#fff" stroke="#333" stroke-width="0.8"/><rect x="5" y="21.1" width="6.3" height="4.6" fill="#000"/><rect x="15.5" y="20.9" width="20.5" height="4.8" rx="1.6" fill="#fff" stroke="#333" stroke-width="0.8"/><rect x="5" y="30.0" width="6.3" height="4.6" fill="#000"/><rect x="15.5" y="29.8" width="20.5" height="4.8" rx="1.6" fill="#fff" stroke="#333" stroke-width="0.8"/></svg>
<svg style="left:3784.4px;top:557.2px;" width="41.3" height="41.5" viewBox="0 0 41.3 41.5"><rect x="0.5" y="0.5" width="40.3" height="40.5" fill="#fff" stroke="#333" stroke-width="1"/><rect x="0" y="0" width="41.3" height="7" fill="#000"/><rect x="1.5" y="1.2" width="4.6" height="4.6" fill="#fff"/><path d="M10,14.5 C14,12 28,12 32,14.5 L23.5,24 V33.5 L19.5,31 V24 Z" fill="#b8b8b8" stroke="#444" stroke-width="0.8"/><ellipse cx="21" cy="14.3" rx="11" ry="2.4" fill="#666"/></svg>
<svg style="left:3784.4px;top:615.2px;" width="41.3" height="41.5" viewBox="0 0 41.3 41.5"><rect x="0.5" y="0.5" width="40.3" height="40.5" fill="#fff" stroke="#333" stroke-width="1"/><rect x="0" y="0" width="41.3" height="7" fill="#000"/><rect x="1.5" y="1.2" width="4.6" height="4.6" fill="#fff"/><path d="M9,14.5 L15,18.5 H31.5 V29.5 H15 L9,33.5 Z" fill="#eee" stroke="#222" stroke-width="1"/><rect x="21" y="18.8" width="10" height="10.4" fill="#444"/><path d="M5.5,24 H36" stroke="#f06070" stroke-width="1" stroke-dasharray="3 1.5"/></svg>
<div style="left:3788px;top:667.7px;width:34px;height:1.4px;background:#d6d3cf;"></div>
<div style="left:3777.3px;top:672.1px;width:57.5px;height:57.4px;background:linear-gradient(#858585,#b4b4b4 45%,#dedede 100%);border:1.5px solid #7e7e7e;box-shadow:inset 2px 0 2px -1px #9a9a9a,inset -2px 0 2px -1px #9a9a9a;"></div>
<svg style="left:3784.4px;top:679.4px;" width="41.3" height="41.5" viewBox="0 0 41.3 41.5"><rect x="0.5" y="0.5" width="40.3" height="40.5" fill="#fff" stroke="#333" stroke-width="1"/><rect x="0" y="0" width="41.3" height="7" fill="#000"/><rect x="1.5" y="1.2" width="4.6" height="4.6" fill="#fff"/><rect x="4" y="12.6" width="21" height="1.4" fill="#555"/><rect x="4" y="17.6" width="20" height="1.4" fill="#555"/><rect x="4" y="22.6" width="24" height="1.4" fill="#555"/><rect x="4" y="27.6" width="26" height="1.4" fill="#555"/><path d="M0.5,33.5 H40.8" stroke="#333" stroke-width="0.8"/><text x="4.5" y="39.6" font-size="5.6" font-family="Liberation Sans" fill="#222">c:    command</text></svg>
<svg style="left:3784.4px;top:737.3px;" width="41.3" height="41.5" viewBox="0 0 41.3 41.5"><rect x="0.5" y="0.5" width="40.3" height="40.5" fill="#fff" stroke="#333" stroke-width="1"/><rect x="0" y="0" width="41.3" height="7" fill="#000"/><rect x="1.5" y="1.2" width="4.6" height="4.6" fill="#fff"/><rect x="11" y="14.5" width="19" height="20.5" rx="1.2" fill="#f2f2ee" stroke="#b88838" stroke-width="1.6"/><rect x="16" y="12.2" width="9" height="4" rx="1" fill="#9a9a92"/><path d="M14,20.0 H27" stroke="#c8c8c4" stroke-width="0.7"/><path d="M14,22.6 H27" stroke="#c8c8c4" stroke-width="0.7"/><path d="M14,25.2 H27" stroke="#c8c8c4" stroke-width="0.7"/><path d="M14,27.8 H27" stroke="#c8c8c4" stroke-width="0.7"/><path d="M14,30.4 H27" stroke="#c8c8c4" stroke-width="0.7"/><path d="M24.5,33.8 L29,29.5 V33.8 Z" fill="#999"/></svg>
<div class="t" style="top:304.90px;font-size:12px;line-height:16px;color:#000;letter-spacing:-0.070px;left:3269.2px;"><span id="t193">Property Editor</span></div>
<svg style="left:3738.5px;top:305px;" width="34" height="14" viewBox="0 0 34 14"><g fill="none" stroke="#6a6a66" stroke-width="1.1"><rect x="0.8" y="0.8" width="11.4" height="11.4" rx="2.2" fill="#f4f2ef" stroke="#a8a5a1"/><rect x="5.3" y="2.8" width="4.6" height="4.2" rx="0.8"/><rect x="3.2" y="5.4" width="4.6" height="4.2" rx="0.8" fill="#f4f2ef"/>
<rect x="18.8" y="0.8" width="11.4" height="11.4" rx="2.2" fill="#f4f2ef" stroke="#a8a5a1"/><path d="M21.3,3.3 L27.7,9.7 M27.7,3.3 L21.3,9.7" stroke="#55554f" stroke-width="1.9"/></g></svg>
<div style="left:3260.8px;top:326px;width:511.7px;height:1470.5px;border:1.2px solid #b5b2ae;"></div>
<div class="t" style="top:350.00px;font-size:12px;line-height:16px;color:#000;letter-spacing:-0.070px;left:3274.9px;"><span id="t194">Selection:</span></div>
<div style="left:3332.8px;top:336.0px;width:430.3px;height:44.0px;background:linear-gradient(#fefefe,#f4f3f1 45%,#e9e7e4);border:2.4px solid #aaa7a3;border-radius:5.5px;"></div>
<svg style="left:3734.1000000000004px;top:354.0px;" width="15" height="9" viewBox="0 0 15 9"><path d="M0,0 H15 L7.5,9 Z" fill="#555"/></svg>
<div class="t" style="top:350.30px;font-size:12px;line-height:16px;color:#000;letter-spacing:-0.087px;left:3343.3px;"><span id="t195">No Selection</span></div>
<div style="left:3271.6px;top:388.20px;width:95.20px;height:16px;overflow:hidden;"><div class="t" style="top:0px;font-size:12px;line-height:16px;color:#bdbab6;letter-spacing:-0.123px;left:0px;"><span id="t196">General Properties</span></div></div>
<div style="left:3273px;top:410.5px;width:489.6px;height:369px;background:#ece9e5;border:1.3px solid #d7d4d0;border-radius:3px;"></div>
<div class="t" style="top:440.20px;font-size:12px;line-height:16px;color:#bdbab6;letter-spacing:-0.310px;right:473.1999999999998px;"><span id="t197">Layer:</span></div>
<div style="left:3372.9px;top:425.9px;width:338.1px;height:44.400000000000006px;background:linear-gradient(#fefefe,#f4f3f1 45%,#e9e7e4);border:2.4px solid #c4c1bd;border-radius:5.5px;"></div>
<svg style="left:3682.0px;top:444.1px;" width="15" height="9" viewBox="0 0 15 9"><path d="M0,0 H15 L7.5,9 Z" fill="#dcdad7"/></svg>
<div style="left:3717px;top:432.6px;width:31.5px;height:29.2px;background:linear-gradient(#fdfdfc,#efedea);border:1.5px solid #cbc8c4;border-radius:5px;"></div>
<svg style="left:3726px;top:440px;" width="14" height="14" viewBox="0 0 14 14"><path d="M0.5,2.6 H13 M0.5,6.9 H13 M0.5,11.2 H13" stroke="#aaa7a3" stroke-width="1.3"/></svg>
<div class="t" style="top:488.20px;font-size:12px;line-height:16px;color:#bdbab6;letter-spacing:-0.169px;right:473.1999999999998px;"><span id="t198">Color:</span></div>
<div style="left:3372.9px;top:474.2px;width:376.1px;height:43.7px;background:linear-gradient(#fefefe,#f4f3f1 45%,#e9e7e4);border:2.4px solid #c4c1bd;border-radius:5.5px;"></div>
<svg style="left:3720.0px;top:492.05px;" width="15" height="9" viewBox="0 0 15 9"><path d="M0,0 H15 L7.5,9 Z" fill="#dcdad7"/></svg>
<div class="t" style="top:488.35px;font-size:12px;line-height:16px;color:#bdbab6;letter-spacing:-0.345px;left:3423.2000000000003px;"><span id="t199">By Layer</span></div>
<div style="left:3385px;top:486.3px;width:32px;height:19.5px;background:#fdfdfa;border:1.5px solid #4a4a4a;"></div>
<div class="t" style="top:538.30px;font-size:12px;line-height:16px;color:#bdbab6;letter-spacing:-0.020px;right:473.1999999999998px;"><span id="t200">Lineweight:</span></div>
<div style="left:3372.9px;top:522.6px;width:376.1px;height:47.400000000000006px;background:linear-gradient(#fefefe,#f4f3f1 45%,#e9e7e4);border:2.4px solid #c4c1bd;border-radius:5.5px;"></div>
<svg style="left:3720.0px;top:542.3000000000001px;" width="15" height="9" viewBox="0 0 15 9"><path d="M0,0 H15 L7.5,9 Z" fill="#dcdad7"/></svg>
<div class="t" style="top:538.60px;font-size:12px;line-height:16px;color:#bdbab6;letter-spacing:-0.345px;left:3423.2000000000003px;"><span id="t201">By Layer</span></div>
<div style="left:3385px;top:546.2px;width:32px;height:1.5px;background:#555;"></div>
<div class="t" style="top:588.20px;font-size:12px;line-height:16px;color:#bdbab6;letter-spacing:-0.134px;right:473.1999999999998px;"><span id="t202">Linetype:</span></div>
<div style="left:3372.9px;top:574.1999999999999px;width:376.1px;height:43.900000000000006px;background:linear-gradient(#fefefe,#f4f3f1 45%,#e9e7e4);border:2.4px solid #c4c1bd;border-radius:5.5px;"></div>
<svg style="left:3720.0px;top:592.15px;" width="15" height="9" viewBox="0 0 15 9"><path d="M0,0 H15 L7.5,9 Z" fill="#dcdad7"/></svg>
<div class="t" style="top:588.45px;font-size:12px;line-height:16px;color:#bdbab6;letter-spacing:-0.345px;left:3383.2000000000003px;"><span id="t203">By Layer</span></div>
<div class="t" style="top:636.00px;font-size:12px;line-height:16px;color:#bdbab6;letter-spacing:-0.138px;right:473.1999999999998px;"><span id="t204">Linetype Scale:</span></div>
<div style="left:3372.9px;top:622.1999999999999px;width:376.1px;height:43.5px;background:#efece8;border:2.4px solid #aaa7a3;border-radius:5.5px;"></div>
<div class="t" style="top:684.00px;font-size:12px;line-height:16px;color:#bdbab6;letter-spacing:-0.259px;right:473.1999999999998px;"><span id="t205">Draw Order:</span></div>
<div style="left:3372.9px;top:670.1px;width:376.1px;height:43.5px;background:#efece8;border:2.4px solid #aaa7a3;border-radius:5.5px;"></div>
<div class="t" style="top:732.00px;font-size:12px;line-height:16px;color:#bdbab6;letter-spacing:-0.125px;right:473.1999999999998px;"><span id="t206">Handle:</span></div>
<div style="left:3372.9px;top:718.0px;width:376.1px;height:43.5px;background:#efece8;border:2.4px solid #aaa7a3;border-radius:5.5px;"></div>
<svg style="left:3503.5px;top:1500.3px;" width="34" height="3" viewBox="0 0 34 3"><rect x="0.0" y="0" width="1.6" height="1.6" fill="#b5b2ae"/><rect x="5.8" y="0" width="1.6" height="1.6" fill="#b5b2ae"/><rect x="11.6" y="0" width="1.6" height="1.6" fill="#b5b2ae"/><rect x="17.4" y="0" width="1.6" height="1.6" fill="#b5b2ae"/><rect x="23.2" y="0" width="1.6" height="1.6" fill="#b5b2ae"/><rect x="29.0" y="0" width="1.6" height="1.6" fill="#b5b2ae"/></svg>
<div class="t" style="top:1508.80px;font-size:12px;line-height:16px;color:#000;letter-spacing:-0.143px;left:3269.2px;"><span id="t207">Layer List</span></div>
<svg style="left:3738.5px;top:1509px;" width="34" height="14" viewBox="0 0 34 14"><g fill="none" stroke="#6a6a66" stroke-width="1.1"><rect x="0.8" y="0.8" width="11.4" height="11.4" rx="2.2" fill="#f4f2ef" stroke="#a8a5a1"/><rect x="5.3" y="2.8" width="4.6" height="4.2" rx="0.8"/><rect x="3.2" y="5.4" width="4.6" height="4.2" rx="0.8" fill="#f4f2ef"/>
<rect x="18.8" y="0.8" width="11.4" height="11.4" rx="2.2" fill="#f4f2ef" stroke="#a8a5a1"/><path d="M21.3,3.3 L27.7,9.7 M27.7,3.3 L21.3,9.7" stroke="#55554f" stroke-width="1.9"/></g></svg>
<div style="left:3261.5px;top:1530.8px;width:100.3px;height:28.4px;background:linear-gradient(#fdfdfc,#eceae7);border:1.8px solid #aaa7a3;border-radius:4px;"></div>
<div style="left:3364px;top:1530.8px;width:99.7px;height:28.4px;background:linear-gradient(#fdfdfc,#eceae7);border:1.8px solid #aaa7a3;border-radius:4px;"></div>
<div style="left:3466px;top:1530.8px;width:102px;height:28.4px;background:linear-gradient(#fdfdfc,#eceae7);border:1.8px solid #aaa7a3;border-radius:4px;"></div>
<div style="left:3570px;top:1530.8px;width:99.8px;height:28.4px;background:linear-gradient(#fdfdfc,#eceae7);border:1.8px solid #aaa7a3;border-radius:4px;"></div>
<div style="left:3671.9px;top:1530.8px;width:100.3px;height:28.4px;background:linear-gradient(#fdfdfc,#eceae7);border:1.8px solid #aaa7a3;border-radius:4px;"></div>
<svg style="left:3302.8500000000004px;top:1538.011px;" width="15.9" height="12.190000000000001" viewBox="0 0 30 23"><path d="M0,12 C0.3,9 1,6.5 2.5,4.5 C5,1.8 9.5,0.2 14,0 C17,0 19.5,0.8 21.5,2 C24,3.3 26.3,4.8 28.2,6 L26.6,7.2 C28.2,8.3 29.6,9.8 30,11.2 C30,12.4 29.8,13.2 29.4,13.8 C28,14.8 26.6,15.4 25,16.2 C23.8,17.8 22.4,19.2 21,20.2 C19,21.2 17,21.6 15,21.6 C13,21.6 11,21.2 9,20.5 C7,19.4 5.4,17.8 4,16 C3,15 2.2,14 1.5,13.2 L0.6,13.6 Z" fill="#000"/>
<path d="M5.5,10.6 C6.2,9.2 7,8.2 8.2,7.4 C11,6.4 14,6.2 17,6.3 C19.5,6.5 21.8,6.9 23.5,7.6 C24.2,8.4 24.3,9.4 24,10.4 C23,12.8 21.6,14.8 20,16.2 C18,17.5 16,18.1 14,18 C11.6,17.8 9.6,16.8 8,15.4 C6.8,14 6,12.4 5.5,10.6 Z" fill="#fff"/>
<path d="M10,6.6 C10.2,8.6 10.4,10.6 11.2,12.2 C12,13.8 13.2,14.9 14.6,15 C16,15 17.2,14.3 18.2,13.2 C19.3,11.6 19.8,9.4 20,6.6 Z" fill="#000"/>
<ellipse cx="12.9" cy="9.6" rx="1.05" ry="2.5" transform="rotate(-8 12.9 9.6)" fill="#fff"/>
<path d="M6.5,20.6 L7.6,22.2 M9.2,21.2 L9.8,22.8 M12,21.6 L12.2,23 M15,21.8 L15,23 M18,21.4 L18.4,22.8" stroke="#000" stroke-width="0.7" opacity="0.6"/></svg>
<svg style="left:3404.8500000000004px;top:1538.011px;" width="15.9" height="12.190000000000001" viewBox="0 0 30 23"><path d="M0,12 C0.3,9 1,6.5 2.5,4.5 C5,1.8 9.5,0.2 14,0 C17,0 19.5,0.8 21.5,2 C24,3.3 26.3,4.8 28.2,6 L26.6,7.2 C28.2,8.3 29.6,9.8 30,11.2 C30,12.4 29.8,13.2 29.4,13.8 C28,14.8 26.6,15.4 25,16.2 C23.8,17.8 22.4,19.2 21,20.2 C19,21.2 17,21.6 15,21.6 C13,21.6 11,21.2 9,20.5 C7,19.4 5.4,17.8 4,16 C3,15 2.2,14 1.5,13.2 L0.6,13.6 Z" fill="#b0b0b0"/>
<path d="M5.5,10.6 C6.2,9.2 7,8.2 8.2,7.4 C11,6.4 14,6.2 17,6.3 C19.5,6.5 21.8,6.9 23.5,7.6 C24.2,8.4 24.3,9.4 24,10.4 C23,12.8 21.6,14.8 20,16.2 C18,17.5 16,18.1 14,18 C11.6,17.8 9.6,16.8 8,15.4 C6.8,14 6,12.4 5.5,10.6 Z" fill="#fff"/>
<path d="M10,6.6 C10.2,8.6 10.4,10.6 11.2,12.2 C12,13.8 13.2,14.9 14.6,15 C16,15 17.2,14.3 18.2,13.2 C19.3,11.6 19.8,9.4 20,6.6 Z" fill="#b0b0b0"/>
<ellipse cx="12.9" cy="9.6" rx="1.05" ry="2.5" transform="rotate(-8 12.9 9.6)" fill="#fff"/>
<path d="M6.5,20.6 L7.6,22.2 M9.2,21.2 L9.8,22.8 M12,21.6 L12.2,23 M15,21.8 L15,23 M18,21.4 L18.4,22.8" stroke="#b0b0b0" stroke-width="0.7" opacity="0.6"/></svg>
<svg style="left:3510px;top:1537px;" width="14" height="14" viewBox="0 0 14 14"><path d="M0.5,7 H13 M6.8,0.8 V13.2" stroke="#e8141c" stroke-width="2.8"/></svg>
<svg style="left:3612px;top:1537px;" width="14" height="14" viewBox="0 0 14 14"><path d="M0.8,7 H13" stroke="#e8141c" stroke-width="2.8"/></svg>
<svg style="left:3713px;top:1536.5px;" width="15" height="15" viewBox="0 0 28.5 28.5"><path d="M3,21 L20.5,3.5 L25.5,8.5 L8,26 Z" fill="#d9a23c" stroke="#8a5a12" stroke-width="0.9"/><path d="M5.5,23.5 L23,6" stroke="#eccb80" stroke-width="1.5"/><path d="M20.5,3.5 C22,1 26,0.5 27.3,3 C28.3,5 27.5,7 25.5,8.5 Z" fill="#ea2222" stroke="#8a4a12" stroke-width="0.8"/><path d="M3,21 L8,26 L0.5,28 Z" fill="#d8b888" stroke="#7a5a28" stroke-width="0.6"/><path d="M0.5,28 L1.6,25.5 L3.2,27.2 Z" fill="#333"/></svg>
<div style="left:3261.3px;top:1560.2px;width:511px;height:508.5px;background:#fff;border:1.3px solid #b5b2ae;"></div>
<div style="left:3268.8px;top:1569.4px;width:32.4px;height:17.6px;background:#ffffff;border:1.8px solid #000;"></div>
<div class="t" style="top:1570.20px;font-size:12px;line-height:16px;color:#000;letter-spacing:-0.188px;left:3313px;"><span id="t208">0</span></div>
<svg style="left:3689.9px;top:1566.9px;" width="30.0" height="23.0" viewBox="0 0 30 23"><path d="M0,12 C0.3,9 1,6.5 2.5,4.5 C5,1.8 9.5,0.2 14,0 C17,0 19.5,0.8 21.5,2 C24,3.3 26.3,4.8 28.2,6 L26.6,7.2 C28.2,8.3 29.6,9.8 30,11.2 C30,12.4 29.8,13.2 29.4,13.8 C28,14.8 26.6,15.4 25,16.2 C23.8,17.8 22.4,19.2 21,20.2 C19,21.2 17,21.6 15,21.6 C13,21.6 11,21.2 9,20.5 C7,19.4 5.4,17.8 4,16 C3,15 2.2,14 1.5,13.2 L0.6,13.6 Z" fill="#b4b4b4"/>
<path d="M5.5,10.6 C6.2,9.2 7,8.2 8.2,7.4 C11,6.4 14,6.2 17,6.3 C19.5,6.5 21.8,6.9 23.5,7.6 C24.2,8.4 24.3,9.4 24,10.4 C23,12.8 21.6,14.8 20,16.2 C18,17.5 16,18.1 14,18 C11.6,17.8 9.6,16.8 8,15.4 C6.8,14 6,12.4 5.5,10.6 Z" fill="#fff"/>
<path d="M10,6.6 C10.2,8.6 10.4,10.6 11.2,12.2 C12,13.8 13.2,14.9 14.6,15 C16,15 17.2,14.3 18.2,13.2 C19.3,11.6 19.8,9.4 20,6.6 Z" fill="#b4b4b4"/>
<ellipse cx="12.9" cy="9.6" rx="1.05" ry="2.5" transform="rotate(-8 12.9 9.6)" fill="#fff"/>
<path d="M6.5,20.6 L7.6,22.2 M9.2,21.2 L9.8,22.8 M12,21.6 L12.2,23 M15,21.8 L15,23 M18,21.4 L18.4,22.8" stroke="#b4b4b4" stroke-width="0.7" opacity="0.6"/></svg>
<svg style="left:3739px;top:1564.6000000000001px;" width="20" height="27.5" viewBox="0 0 20 27.5"><path d="M3.05,14 V7.9 A6.95,6.95 0 0 1 16.95,7.9 V14" fill="none" stroke="#b2b2b2" stroke-width="1.9"/><rect x="0.5" y="13" width="19" height="14" fill="#b2b2b2"/></svg>
<div style="left:3268.8px;top:1601.44px;width:32.4px;height:17.6px;background:#85522f;border:1.8px solid #000;"></div>
<div class="t" style="top:1602.24px;font-size:12px;line-height:16px;color:#000;letter-spacing:-0.080px;left:3313px;"><span id="t209">baseboard</span></div>
<svg style="left:3689.9px;top:1598.94px;" width="30.0" height="23.0" viewBox="0 0 30 23"><path d="M0,12 C0.3,9 1,6.5 2.5,4.5 C5,1.8 9.5,0.2 14,0 C17,0 19.5,0.8 21.5,2 C24,3.3 26.3,4.8 28.2,6 L26.6,7.2 C28.2,8.3 29.6,9.8 30,11.2 C30,12.4 29.8,13.2 29.4,13.8 C28,14.8 26.6,15.4 25,16.2 C23.8,17.8 22.4,19.2 21,20.2 C19,21.2 17,21.6 15,21.6 C13,21.6 11,21.2 9,20.5 C7,19.4 5.4,17.8 4,16 C3,15 2.2,14 1.5,13.2 L0.6,13.6 Z" fill="#000"/>
<path d="M5.5,10.6 C6.2,9.2 7,8.2 8.2,7.4 C11,6.4 14,6.2 17,6.3 C19.5,6.5 21.8,6.9 23.5,7.6 C24.2,8.4 24.3,9.4 24,10.4 C23,12.8 21.6,14.8 20,16.2 C18,17.5 16,18.1 14,18 C11.6,17.8 9.6,16.8 8,15.4 C6.8,14 6,12.4 5.5,10.6 Z" fill="#fff"/>
<path d="M10,6.6 C10.2,8.6 10.4,10.6 11.2,12.2 C12,13.8 13.2,14.9 14.6,15 C16,15 17.2,14.3 18.2,13.2 C19.3,11.6 19.8,9.4 20,6.6 Z" fill="#000"/>
<ellipse cx="12.9" cy="9.6" rx="1.05" ry="2.5" transform="rotate(-8 12.9 9.6)" fill="#fff"/>
<path d="M6.5,20.6 L7.6,22.2 M9.2,21.2 L9.8,22.8 M12,21.6 L12.2,23 M15,21.8 L15,23 M18,21.4 L18.4,22.8" stroke="#000" stroke-width="0.7" opacity="0.6"/></svg>
<svg style="left:3739px;top:1596.64px;" width="20" height="27.5" viewBox="0 0 20 27.5"><path d="M3.05,14 V7.9 A6.95,6.95 0 0 1 16.95,7.9 V14" fill="none" stroke="#b2b2b2" stroke-width="1.9"/><rect x="0.5" y="13" width="19" height="14" fill="#b2b2b2"/></svg>
<svg style="left:3647.3px;top:1596.24px;" width="28" height="27.5" viewBox="0 0 28.5 28.5"><path d="M3,21 L20.5,3.5 L25.5,8.5 L8,26 Z" fill="#d9a23c" stroke="#8a5a12" stroke-width="0.9"/><path d="M5.5,23.5 L23,6" stroke="#eccb80" stroke-width="1.5"/><path d="M20.5,3.5 C22,1 26,0.5 27.3,3 C28.3,5 27.5,7 25.5,8.5 Z" fill="#ea2222" stroke="#8a4a12" stroke-width="0.8"/><path d="M3,21 L8,26 L0.5,28 Z" fill="#d8b888" stroke="#7a5a28" stroke-width="0.6"/><path d="M0.5,28 L1.6,25.5 L3.2,27.2 Z" fill="#333"/></svg>
<div style="left:3268.8px;top:1633.48px;width:32.4px;height:17.6px;background:#4f9fff;border:1.8px solid #000;"></div>
<div class="t" style="top:1634.28px;font-size:12px;line-height:16px;color:#000;letter-spacing:-0.003px;left:3313px;"><span id="t210">centreline</span></div>
<svg style="left:3689.9px;top:1630.98px;" width="30.0" height="23.0" viewBox="0 0 30 23"><path d="M0,12 C0.3,9 1,6.5 2.5,4.5 C5,1.8 9.5,0.2 14,0 C17,0 19.5,0.8 21.5,2 C24,3.3 26.3,4.8 28.2,6 L26.6,7.2 C28.2,8.3 29.6,9.8 30,11.2 C30,12.4 29.8,13.2 29.4,13.8 C28,14.8 26.6,15.4 25,16.2 C23.8,17.8 22.4,19.2 21,20.2 C19,21.2 17,21.6 15,21.6 C13,21.6 11,21.2 9,20.5 C7,19.4 5.4,17.8 4,16 C3,15 2.2,14 1.5,13.2 L0.6,13.6 Z" fill="#b4b4b4"/>
<path d="M5.5,10.6 C6.2,9.2 7,8.2 8.2,7.4 C11,6.4 14,6.2 17,6.3 C19.5,6.5 21.8,6.9 23.5,7.6 C24.2,8.4 24.3,9.4 24,10.4 C23,12.8 21.6,14.8 20,16.2 C18,17.5 16,18.1 14,18 C11.6,17.8 9.6,16.8 8,15.4 C6.8,14 6,12.4 5.5,10.6 Z" fill="#fff"/>
<path d="M10,6.6 C10.2,8.6 10.4,10.6 11.2,12.2 C12,13.8 13.2,14.9 14.6,15 C16,15 17.2,14.3 18.2,13.2 C19.3,11.6 19.8,9.4 20,6.6 Z" fill="#b4b4b4"/>
<ellipse cx="12.9" cy="9.6" rx="1.05" ry="2.5" transform="rotate(-8 12.9 9.6)" fill="#fff"/>
<path d="M6.5,20.6 L7.6,22.2 M9.2,21.2 L9.8,22.8 M12,21.6 L12.2,23 M15,21.8 L15,23 M18,21.4 L18.4,22.8" stroke="#b4b4b4" stroke-width="0.7" opacity="0.6"/></svg>
<svg style="left:3739px;top:1628.68px;" width="20" height="27.5" viewBox="0 0 20 27.5"><path d="M3.05,14 V7.9 A6.95,6.95 0 0 1 16.95,7.9 V14" fill="none" stroke="#b2b2b2" stroke-width="1.9"/><rect x="0.5" y="13" width="19" height="14" fill="#b2b2b2"/></svg>
<div style="left:3268.8px;top:1665.5200000000002px;width:32.4px;height:17.6px;background:#00b800;border:1.8px solid #000;"></div>
<div class="t" style="top:1666.32px;font-size:12px;line-height:16px;color:#000;letter-spacing:-0.383px;left:3313px;"><span id="t211">even</span></div>
<svg style="left:3689.9px;top:1663.0200000000002px;" width="30.0" height="23.0" viewBox="0 0 30 23"><path d="M0,12 C0.3,9 1,6.5 2.5,4.5 C5,1.8 9.5,0.2 14,0 C17,0 19.5,0.8 21.5,2 C24,3.3 26.3,4.8 28.2,6 L26.6,7.2 C28.2,8.3 29.6,9.8 30,11.2 C30,12.4 29.8,13.2 29.4,13.8 C28,14.8 26.6,15.4 25,16.2 C23.8,17.8 22.4,19.2 21,20.2 C19,21.2 17,21.6 15,21.6 C13,21.6 11,21.2 9,20.5 C7,19.4 5.4,17.8 4,16 C3,15 2.2,14 1.5,13.2 L0.6,13.6 Z" fill="#b4b4b4"/>
<path d="M5.5,10.6 C6.2,9.2 7,8.2 8.2,7.4 C11,6.4 14,6.2 17,6.3 C19.5,6.5 21.8,6.9 23.5,7.6 C24.2,8.4 24.3,9.4 24,10.4 C23,12.8 21.6,14.8 20,16.2 C18,17.5 16,18.1 14,18 C11.6,17.8 9.6,16.8 8,15.4 C6.8,14 6,12.4 5.5,10.6 Z" fill="#fff"/>
<path d="M10,6.6 C10.2,8.6 10.4,10.6 11.2,12.2 C12,13.8 13.2,14.9 14.6,15 C16,15 17.2,14.3 18.2,13.2 C19.3,11.6 19.8,9.4 20,6.6 Z" fill="#b4b4b4"/>
<ellipse cx="12.9" cy="9.6" rx="1.05" ry="2.5" transform="rotate(-8 12.9 9.6)" fill="#fff"/>
<path d="M6.5,20.6 L7.6,22.2 M9.2,21.2 L9.8,22.8 M12,21.6 L12.2,23 M15,21.8 L15,23 M18,21.4 L18.4,22.8" stroke="#b4b4b4" stroke-width="0.7" opacity="0.6"/></svg>
<svg style="left:3739px;top:1660.7200000000003px;" width="20" height="27.5" viewBox="0 0 20 27.5"><path d="M3.05,14 V7.9 A6.95,6.95 0 0 1 16.95,7.9 V14" fill="none" stroke="#b2b2b2" stroke-width="1.9"/><rect x="0.5" y="13" width="19" height="14" fill="#b2b2b2"/></svg>
<div style="left:3268.8px;top:1697.5600000000002px;width:32.4px;height:17.6px;background:#ff0000;border:1.8px solid #000;"></div>
<div class="t" style="top:1698.36px;font-size:12px;line-height:16px;color:#000;letter-spacing:0.161px;left:3313px;"><span id="t212">jig</span></div>
<svg style="left:3689.9px;top:1695.0600000000002px;" width="30.0" height="23.0" viewBox="0 0 30 23"><path d="M0,12 C0.3,9 1,6.5 2.5,4.5 C5,1.8 9.5,0.2 14,0 C17,0 19.5,0.8 21.5,2 C24,3.3 26.3,4.8 28.2,6 L26.6,7.2 C28.2,8.3 29.6,9.8 30,11.2 C30,12.4 29.8,13.2 29.4,13.8 C28,14.8 26.6,15.4 25,16.2 C23.8,17.8 22.4,19.2 21,20.2 C19,21.2 17,21.6 15,21.6 C13,21.6 11,21.2 9,20.5 C7,19.4 5.4,17.8 4,16 C3,15 2.2,14 1.5,13.2 L0.6,13.6 Z" fill="#b4b4b4"/>
<path d="M5.5,10.6 C6.2,9.2 7,8.2 8.2,7.4 C11,6.4 14,6.2 17,6.3 C19.5,6.5 21.8,6.9 23.5,7.6 C24.2,8.4 24.3,9.4 24,10.4 C23,12.8 21.6,14.8 20,16.2 C18,17.5 16,18.1 14,18 C11.6,17.8 9.6,16.8 8,15.4 C6.8,14 6,12.4 5.5,10.6 Z" fill="#fff"/>
<path d="M10,6.6 C10.2,8.6 10.4,10.6 11.2,12.2 C12,13.8 13.2,14.9 14.6,15 C16,15 17.2,14.3 18.2,13.2 C19.3,11.6 19.8,9.4 20,6.6 Z" fill="#b4b4b4"/>
<ellipse cx="12.9" cy="9.6" rx="1.05" ry="2.5" transform="rotate(-8 12.9 9.6)" fill="#fff"/>
<path d="M6.5,20.6 L7.6,22.2 M9.2,21.2 L9.8,22.8 M12,21.6 L12.2,23 M15,21.8 L15,23 M18,21.4 L18.4,22.8" stroke="#b4b4b4" stroke-width="0.7" opacity="0.6"/></svg>
<svg style="left:3739px;top:1692.7600000000002px;" width="20" height="27.5" viewBox="0 0 20 27.5"><path d="M3.05,14 V7.9 A6.95,6.95 0 0 1 16.95,7.9 V14" fill="none" stroke="#b2b2b2" stroke-width="1.9"/><rect x="0.5" y="13" width="19" height="14" fill="#b2b2b2"/></svg>
<div style="left:3268.8px;top:1729.6000000000001px;width:32.4px;height:17.6px;background:#00ffff;border:1.8px solid #000;"></div>
<div class="t" style="top:1730.40px;font-size:12px;line-height:16px;color:#000;letter-spacing:0.062px;left:3313px;"><span id="t213">joins</span></div>
<svg style="left:3689.9px;top:1727.1000000000001px;" width="30.0" height="23.0" viewBox="0 0 30 23"><path d="M0,12 C0.3,9 1,6.5 2.5,4.5 C5,1.8 9.5,0.2 14,0 C17,0 19.5,0.8 21.5,2 C24,3.3 26.3,4.8 28.2,6 L26.6,7.2 C28.2,8.3 29.6,9.8 30,11.2 C30,12.4 29.8,13.2 29.4,13.8 C28,14.8 26.6,15.4 25,16.2 C23.8,17.8 22.4,19.2 21,20.2 C19,21.2 17,21.6 15,21.6 C13,21.6 11,21.2 9,20.5 C7,19.4 5.4,17.8 4,16 C3,15 2.2,14 1.5,13.2 L0.6,13.6 Z" fill="#b4b4b4"/>
<path d="M5.5,10.6 C6.2,9.2 7,8.2 8.2,7.4 C11,6.4 14,6.2 17,6.3 C19.5,6.5 21.8,6.9 23.5,7.6 C24.2,8.4 24.3,9.4 24,10.4 C23,12.8 21.6,14.8 20,16.2 C18,17.5 16,18.1 14,18 C11.6,17.8 9.6,16.8 8,15.4 C6.8,14 6,12.4 5.5,10.6 Z" fill="#fff"/>
<path d="M10,6.6 C10.2,8.6 10.4,10.6 11.2,12.2 C12,13.8 13.2,14.9 14.6,15 C16,15 17.2,14.3 18.2,13.2 C19.3,11.6 19.8,9.4 20,6.6 Z" fill="#b4b4b4"/>
<ellipse cx="12.9" cy="9.6" rx="1.05" ry="2.5" transform="rotate(-8 12.9 9.6)" fill="#fff"/>
<path d="M6.5,20.6 L7.6,22.2 M9.2,21.2 L9.8,22.8 M12,21.6 L12.2,23 M15,21.8 L15,23 M18,21.4 L18.4,22.8" stroke="#b4b4b4" stroke-width="0.7" opacity="0.6"/></svg>
<svg style="left:3739px;top:1724.8000000000002px;" width="20" height="27.5" viewBox="0 0 20 27.5"><path d="M3.05,14 V7.9 A6.95,6.95 0 0 1 16.95,7.9 V14" fill="none" stroke="#b2b2b2" stroke-width="1.9"/><rect x="0.5" y="13" width="19" height="14" fill="#b2b2b2"/></svg>
<div style="left:3268.8px;top:1761.64px;width:32.4px;height:17.6px;background:#ffa500;border:1.8px solid #000;"></div>
<div class="t" style="top:1762.44px;font-size:12px;line-height:16px;color:#000;letter-spacing:-0.060px;left:3313px;"><span id="t214">labels</span></div>
<svg style="left:3689.9px;top:1759.14px;" width="30.0" height="23.0" viewBox="0 0 30 23"><path d="M0,12 C0.3,9 1,6.5 2.5,4.5 C5,1.8 9.5,0.2 14,0 C17,0 19.5,0.8 21.5,2 C24,3.3 26.3,4.8 28.2,6 L26.6,7.2 C28.2,8.3 29.6,9.8 30,11.2 C30,12.4 29.8,13.2 29.4,13.8 C28,14.8 26.6,15.4 25,16.2 C23.8,17.8 22.4,19.2 21,20.2 C19,21.2 17,21.6 15,21.6 C13,21.6 11,21.2 9,20.5 C7,19.4 5.4,17.8 4,16 C3,15 2.2,14 1.5,13.2 L0.6,13.6 Z" fill="#b4b4b4"/>
<path d="M5.5,10.6 C6.2,9.2 7,8.2 8.2,7.4 C11,6.4 14,6.2 17,6.3 C19.5,6.5 21.8,6.9 23.5,7.6 C24.2,8.4 24.3,9.4 24,10.4 C23,12.8 21.6,14.8 20,16.2 C18,17.5 16,18.1 14,18 C11.6,17.8 9.6,16.8 8,15.4 C6.8,14 6,12.4 5.5,10.6 Z" fill="#fff"/>
<path d="M10,6.6 C10.2,8.6 10.4,10.6 11.2,12.2 C12,13.8 13.2,14.9 14.6,15 C16,15 17.2,14.3 18.2,13.2 C19.3,11.6 19.8,9.4 20,6.6 Z" fill="#b4b4b4"/>
<ellipse cx="12.9" cy="9.6" rx="1.05" ry="2.5" transform="rotate(-8 12.9 9.6)" fill="#fff"/>
<path d="M6.5,20.6 L7.6,22.2 M9.2,21.2 L9.8,22.8 M12,21.6 L12.2,23 M15,21.8 L15,23 M18,21.4 L18.4,22.8" stroke="#b4b4b4" stroke-width="0.7" opacity="0.6"/></svg>
<svg style="left:3739px;top:1756.8400000000001px;" width="20" height="27.5" viewBox="0 0 20 27.5"><path d="M3.05,14 V7.9 A6.95,6.95 0 0 1 16.95,7.9 V14" fill="none" stroke="#b2b2b2" stroke-width="1.9"/><rect x="0.5" y="13" width="19" height="14" fill="#b2b2b2"/></svg>
<div style="left:3268.8px;top:1793.68px;width:32.4px;height:17.6px;background:#40a08c;border:1.8px solid #000;"></div>
<div class="t" style="top:1794.48px;font-size:12px;line-height:16px;color:#000;letter-spacing:0.207px;left:3313px;"><span id="t215">misc</span></div>
<svg style="left:3689.9px;top:1791.18px;" width="30.0" height="23.0" viewBox="0 0 30 23"><path d="M0,12 C0.3,9 1,6.5 2.5,4.5 C5,1.8 9.5,0.2 14,0 C17,0 19.5,0.8 21.5,2 C24,3.3 26.3,4.8 28.2,6 L26.6,7.2 C28.2,8.3 29.6,9.8 30,11.2 C30,12.4 29.8,13.2 29.4,13.8 C28,14.8 26.6,15.4 25,16.2 C23.8,17.8 22.4,19.2 21,20.2 C19,21.2 17,21.6 15,21.6 C13,21.6 11,21.2 9,20.5 C7,19.4 5.4,17.8 4,16 C3,15 2.2,14 1.5,13.2 L0.6,13.6 Z" fill="#b4b4b4"/>
<path d="M5.5,10.6 C6.2,9.2 7,8.2 8.2,7.4 C11,6.4 14,6.2 17,6.3 C19.5,6.5 21.8,6.9 23.5,7.6 C24.2,8.4 24.3,9.4 24,10.4 C23,12.8 21.6,14.8 20,16.2 C18,17.5 16,18.1 14,18 C11.6,17.8 9.6,16.8 8,15.4 C6.8,14 6,12.4 5.5,10.6 Z" fill="#fff"/>
<path d="M10,6.6 C10.2,8.6 10.4,10.6 11.2,12.2 C12,13.8 13.2,14.9 14.6,15 C16,15 17.2,14.3 18.2,13.2 C19.3,11.6 19.8,9.4 20,6.6 Z" fill="#b4b4b4"/>
<ellipse cx="12.9" cy="9.6" rx="1.05" ry="2.5" transform="rotate(-8 12.9 9.6)" fill="#fff"/>
<path d="M6.5,20.6 L7.6,22.2 M9.2,21.2 L9.8,22.8 M12,21.6 L12.2,23 M15,21.8 L15,23 M18,21.4 L18.4,22.8" stroke="#b4b4b4" stroke-width="0.7" opacity="0.6"/></svg>
<svg style="left:3739px;top:1788.88px;" width="20" height="27.5" viewBox="0 0 20 27.5"><path d="M3.05,14 V7.9 A6.95,6.95 0 0 1 16.95,7.9 V14" fill="none" stroke="#b2b2b2" stroke-width="1.9"/><rect x="0.5" y="13" width="19" height="14" fill="#b2b2b2"/></svg>
<div style="left:3268.8px;top:1825.72px;width:32.4px;height:17.6px;background:#d00000;border:1.8px solid #000;"></div>
<div class="t" style="top:1826.52px;font-size:12px;line-height:16px;color:#000;letter-spacing:-0.010px;left:3313px;"><span id="t216">odd</span></div>
<svg style="left:3689.9px;top:1823.22px;" width="30.0" height="23.0" viewBox="0 0 30 23"><path d="M0,12 C0.3,9 1,6.5 2.5,4.5 C5,1.8 9.5,0.2 14,0 C17,0 19.5,0.8 21.5,2 C24,3.3 26.3,4.8 28.2,6 L26.6,7.2 C28.2,8.3 29.6,9.8 30,11.2 C30,12.4 29.8,13.2 29.4,13.8 C28,14.8 26.6,15.4 25,16.2 C23.8,17.8 22.4,19.2 21,20.2 C19,21.2 17,21.6 15,21.6 C13,21.6 11,21.2 9,20.5 C7,19.4 5.4,17.8 4,16 C3,15 2.2,14 1.5,13.2 L0.6,13.6 Z" fill="#b4b4b4"/>
<path d="M5.5,10.6 C6.2,9.2 7,8.2 8.2,7.4 C11,6.4 14,6.2 17,6.3 C19.5,6.5 21.8,6.9 23.5,7.6 C24.2,8.4 24.3,9.4 24,10.4 C23,12.8 21.6,14.8 20,16.2 C18,17.5 16,18.1 14,18 C11.6,17.8 9.6,16.8 8,15.4 C6.8,14 6,12.4 5.5,10.6 Z" fill="#fff"/>
<path d="M10,6.6 C10.2,8.6 10.4,10.6 11.2,12.2 C12,13.8 13.2,14.9 14.6,15 C16,15 17.2,14.3 18.2,13.2 C19.3,11.6 19.8,9.4 20,6.6 Z" fill="#b4b4b4"/>
<ellipse cx="12.9" cy="9.6" rx="1.05" ry="2.5" transform="rotate(-8 12.9 9.6)" fill="#fff"/>
<path d="M6.5,20.6 L7.6,22.2 M9.2,21.2 L9.8,22.8 M12,21.6 L12.2,23 M15,21.8 L15,23 M18,21.4 L18.4,22.8" stroke="#b4b4b4" stroke-width="0.7" opacity="0.6"/></svg>
<svg style="left:3739px;top:1820.92px;" width="20" height="27.5" viewBox="0 0 20 27.5"><path d="M3.05,14 V7.9 A6.95,6.95 0 0 1 16.95,7.9 V14" fill="none" stroke="#b2b2b2" stroke-width="1.9"/><rect x="0.5" y="13" width="19" height="14" fill="#b2b2b2"/></svg>
<div style="left:3268.8px;top:1857.76px;width:32.4px;height:17.6px;background:#ffff00;border:1.8px solid #000;"></div>
<div class="t" style="top:1858.56px;font-size:12px;line-height:16px;color:#000;letter-spacing:-0.041px;left:3313px;"><span id="t217">quads</span></div>
<svg style="left:3689.9px;top:1855.26px;" width="30.0" height="23.0" viewBox="0 0 30 23"><path d="M0,12 C0.3,9 1,6.5 2.5,4.5 C5,1.8 9.5,0.2 14,0 C17,0 19.5,0.8 21.5,2 C24,3.3 26.3,4.8 28.2,6 L26.6,7.2 C28.2,8.3 29.6,9.8 30,11.2 C30,12.4 29.8,13.2 29.4,13.8 C28,14.8 26.6,15.4 25,16.2 C23.8,17.8 22.4,19.2 21,20.2 C19,21.2 17,21.6 15,21.6 C13,21.6 11,21.2 9,20.5 C7,19.4 5.4,17.8 4,16 C3,15 2.2,14 1.5,13.2 L0.6,13.6 Z" fill="#b4b4b4"/>
<path d="M5.5,10.6 C6.2,9.2 7,8.2 8.2,7.4 C11,6.4 14,6.2 17,6.3 C19.5,6.5 21.8,6.9 23.5,7.6 C24.2,8.4 24.3,9.4 24,10.4 C23,12.8 21.6,14.8 20,16.2 C18,17.5 16,18.1 14,18 C11.6,17.8 9.6,16.8 8,15.4 C6.8,14 6,12.4 5.5,10.6 Z" fill="#fff"/>
<path d="M10,6.6 C10.2,8.6 10.4,10.6 11.2,12.2 C12,13.8 13.2,14.9 14.6,15 C16,15 17.2,14.3 18.2,13.2 C19.3,11.6 19.8,9.4 20,6.6 Z" fill="#b4b4b4"/>
<ellipse cx="12.9" cy="9.6" rx="1.05" ry="2.5" transform="rotate(-8 12.9 9.6)" fill="#fff"/>
<path d="M6.5,20.6 L7.6,22.2 M9.2,21.2 L9.8,22.8 M12,21.6 L12.2,23 M15,21.8 L15,23 M18,21.4 L18.4,22.8" stroke="#b4b4b4" stroke-width="0.7" opacity="0.6"/></svg>
<svg style="left:3739px;top:1852.96px;" width="20" height="27.5" viewBox="0 0 20 27.5"><path d="M3.05,14 V7.9 A6.95,6.95 0 0 1 16.95,7.9 V14" fill="none" stroke="#b2b2b2" stroke-width="1.9"/><rect x="0.5" y="13" width="19" height="14" fill="#b2b2b2"/></svg>
<div style="left:3268.8px;top:1889.8px;width:32.4px;height:17.6px;background:#808080;border:1.8px solid #000;"></div>
<div class="t" style="top:1890.60px;font-size:12px;line-height:16px;color:#000;letter-spacing:-0.003px;left:3313px;"><span id="t218">rails</span></div>
<svg style="left:3689.9px;top:1887.3px;" width="30.0" height="23.0" viewBox="0 0 30 23"><path d="M0,12 C0.3,9 1,6.5 2.5,4.5 C5,1.8 9.5,0.2 14,0 C17,0 19.5,0.8 21.5,2 C24,3.3 26.3,4.8 28.2,6 L26.6,7.2 C28.2,8.3 29.6,9.8 30,11.2 C30,12.4 29.8,13.2 29.4,13.8 C28,14.8 26.6,15.4 25,16.2 C23.8,17.8 22.4,19.2 21,20.2 C19,21.2 17,21.6 15,21.6 C13,21.6 11,21.2 9,20.5 C7,19.4 5.4,17.8 4,16 C3,15 2.2,14 1.5,13.2 L0.6,13.6 Z" fill="#000"/>
<path d="M5.5,10.6 C6.2,9.2 7,8.2 8.2,7.4 C11,6.4 14,6.2 17,6.3 C19.5,6.5 21.8,6.9 23.5,7.6 C24.2,8.4 24.3,9.4 24,10.4 C23,12.8 21.6,14.8 20,16.2 C18,17.5 16,18.1 14,18 C11.6,17.8 9.6,16.8 8,15.4 C6.8,14 6,12.4 5.5,10.6 Z" fill="#fff"/>
<path d="M10,6.6 C10.2,8.6 10.4,10.6 11.2,12.2 C12,13.8 13.2,14.9 14.6,15 C16,15 17.2,14.3 18.2,13.2 C19.3,11.6 19.8,9.4 20,6.6 Z" fill="#000"/>
<ellipse cx="12.9" cy="9.6" rx="1.05" ry="2.5" transform="rotate(-8 12.9 9.6)" fill="#fff"/>
<path d="M6.5,20.6 L7.6,22.2 M9.2,21.2 L9.8,22.8 M12,21.6 L12.2,23 M15,21.8 L15,23 M18,21.4 L18.4,22.8" stroke="#000" stroke-width="0.7" opacity="0.6"/></svg>
<svg style="left:3739px;top:1885.0px;" width="20" height="27.5" viewBox="0 0 20 27.5"><path d="M3.05,14 V7.9 A6.95,6.95 0 0 1 16.95,7.9 V14" fill="none" stroke="#b2b2b2" stroke-width="1.9"/><rect x="0.5" y="13" width="19" height="14" fill="#b2b2b2"/></svg>
<div style="left:3268.8px;top:1921.8400000000001px;width:32.4px;height:17.6px;background:#4db09d;border:1.8px solid #000;"></div>
<div class="t" style="top:1922.64px;font-size:12px;line-height:16px;color:#000;letter-spacing:0.020px;left:3313px;"><span id="t219">special</span></div>
<svg style="left:3689.9px;top:1919.3400000000001px;" width="30.0" height="23.0" viewBox="0 0 30 23"><path d="M0,12 C0.3,9 1,6.5 2.5,4.5 C5,1.8 9.5,0.2 14,0 C17,0 19.5,0.8 21.5,2 C24,3.3 26.3,4.8 28.2,6 L26.6,7.2 C28.2,8.3 29.6,9.8 30,11.2 C30,12.4 29.8,13.2 29.4,13.8 C28,14.8 26.6,15.4 25,16.2 C23.8,17.8 22.4,19.2 21,20.2 C19,21.2 17,21.6 15,21.6 C13,21.6 11,21.2 9,20.5 C7,19.4 5.4,17.8 4,16 C3,15 2.2,14 1.5,13.2 L0.6,13.6 Z" fill="#000"/>
<path d="M5.5,10.6 C6.2,9.2 7,8.2 8.2,7.4 C11,6.4 14,6.2 17,6.3 C19.5,6.5 21.8,6.9 23.5,7.6 C24.2,8.4 24.3,9.4 24,10.4 C23,12.8 21.6,14.8 20,16.2 C18,17.5 16,18.1 14,18 C11.6,17.8 9.6,16.8 8,15.4 C6.8,14 6,12.4 5.5,10.6 Z" fill="#fff"/>
<path d="M10,6.6 C10.2,8.6 10.4,10.6 11.2,12.2 C12,13.8 13.2,14.9 14.6,15 C16,15 17.2,14.3 18.2,13.2 C19.3,11.6 19.8,9.4 20,6.6 Z" fill="#000"/>
<ellipse cx="12.9" cy="9.6" rx="1.05" ry="2.5" transform="rotate(-8 12.9 9.6)" fill="#fff"/>
<path d="M6.5,20.6 L7.6,22.2 M9.2,21.2 L9.8,22.8 M12,21.6 L12.2,23 M15,21.8 L15,23 M18,21.4 L18.4,22.8" stroke="#000" stroke-width="0.7" opacity="0.6"/></svg>
<svg style="left:3739px;top:1917.0400000000002px;" width="20" height="27.5" viewBox="0 0 20 27.5"><path d="M3.05,14 V7.9 A6.95,6.95 0 0 1 16.95,7.9 V14" fill="none" stroke="#b2b2b2" stroke-width="1.9"/><rect x="0.5" y="13" width="19" height="14" fill="#b2b2b2"/></svg>
<svg style="left:1679.5px;top:1950.3px;" width="34" height="3" viewBox="0 0 34 3"><rect x="0.0" y="0" width="1.6" height="1.6" fill="#b5b2ae"/><rect x="5.8" y="0" width="1.6" height="1.6" fill="#b5b2ae"/><rect x="11.6" y="0" width="1.6" height="1.6" fill="#b5b2ae"/><rect x="17.4" y="0" width="1.6" height="1.6" fill="#b5b2ae"/><rect x="23.2" y="0" width="1.6" height="1.6" fill="#b5b2ae"/><rect x="29.0" y="0" width="1.6" height="1.6" fill="#b5b2ae"/></svg>
<div style="left:130px;top:1953.5px;width:3125px;height:77.5px;background:#fff;border-bottom:1.3px solid #aeaba7;border-left:1px solid #d9d6d2;"></div>
<div style="left:130px;top:2031px;width:3125px;height:5px;background:#f4f2ef;"></div>
<div class="t" style="top:1958.10px;font-size:12px;line-height:16px;color:#000;letter-spacing:0.060px;left:139.1px;"><span id="t220">[11:41:20 AM] Autosaving to: /home/dajo/Railways/portable-railway/railway-library/exovl-V/~Exhibition-Oval Configuration V.dxf...</span></div>
<div class="t" style="top:1974.10px;font-size:12px;line-height:16px;color:#000;letter-spacing:0.002px;left:139.1px;"><span id="t221">[11:41:21 AM] Autosave complete.</span></div>
<div class="t" style="top:1990.10px;font-size:12px;line-height:16px;color:#000;letter-spacing:0.060px;left:139.1px;"><span id="t222">[11:46:20 AM] Autosaving to: /home/dajo/Railways/portable-railway/railway-library/exovl-V/~Exhibition-Oval Configuration V.dxf...</span></div>
<div class="t" style="top:2006.10px;font-size:12px;line-height:16px;color:#000;letter-spacing:0.002px;left:139.1px;"><span id="t223">[11:46:20 AM] Autosave complete.</span></div>
<div style="left:199.5px;top:1953.6px;width:1.2px;height:1.6px;background:#2020ff;"></div>
<div style="left:3239px;top:1954px;width:14.6px;height:76px;background:#f4f2ef;border-left:1px solid #cfccc8;"></div>
<div style="left:3240px;top:1966.8px;width:13.4px;height:20.4px;background:#e5e3e0;box-shadow:inset 2px 0 0 #dcdad7,inset -2px 0 0 #dcdad7;border-top:1px solid #b5b2ae;border-bottom:1px solid #b5b2ae;"></div>
<div style="left:3240px;top:1987.2px;width:13.4px;height:28.6px;background:linear-gradient(90deg,#fefdfc,#eeece9);border-bottom:1px solid #b5b2ae;"></div>
<div style="left:3240px;top:2016.8px;width:13.4px;height:1px;background:#c9c6c2;"></div>
<svg style="left:3239.8px;top:1958px;" width="13.4" height="9" viewBox="0 0 13.4 9"><path d="M0,8.8 H13.4 L6.7,0.3 Z" fill="#555"/></svg>
<svg style="left:3239.8px;top:2020.2px;" width="13.4" height="9" viewBox="0 0 13.4 9"><path d="M0,0.2 H13.4 L6.7,8.7 Z" fill="#555"/></svg>
<div class="t" style="top:2043.80px;font-size:12px;line-height:16px;color:#000;letter-spacing:-0.111px;left:131.4px;"><span id="t224">Command:</span></div>
<div style="left:192.7px;top:2035.8px;width:3029px;height:31.6px;background:#fff;"></div>
<div style="left:3221.2px;top:2036.6px;width:30.5px;height:28.6px;background:linear-gradient(#fdfdfc,#eceae7);border:2px solid #aaa7a3;border-radius:6px;"></div>
<svg style="left:3229.9px;top:2045px;" width="14" height="10.2" viewBox="0 0 14 10.2"><rect x="0.5" y="0.5" width="13" height="9.2" fill="#fff" stroke="#222" stroke-width="1"/><rect x="0" y="0" width="14" height="2.9" fill="#111"/><rect x="10.6" y="0.9" width="1.2" height="1.1" fill="#ddd"/></svg>
<div style="left:128px;top:2067.4px;width:3127px;height:1.4px;background:#aeaba7;"></div>
<div style="left:3261px;top:2068px;width:512px;height:1.2px;background:#b5b2ae;"></div>
<div class="t" style="top:2088.00px;font-size:12px;line-height:16px;color:#000;letter-spacing:-0.020px;left:5.2px;"><span id="t225">160.9426,474.1136</span></div>
<div class="t" style="top:2129.00px;font-size:12px;line-height:16px;color:#000;letter-spacing:-0.085px;left:5.2px;"><span id="t226">@160.9426,474.1136</span></div>
<div style="left:657px;top:2076.5px;width:1.2px;height:77.5px;background:#9a9793;"></div>
<div style="left:657px;top:2076.5px;width:3.5px;height:1.2px;background:#9a9793;"></div>
<div class="t" style="top:2088.00px;font-size:12px;line-height:16px;color:#000;letter-spacing:-0.185px;left:665.5px;"><span id="t227">500.6857&lt;71°</span></div>
<div class="t" style="top:2129.00px;font-size:12px;line-height:16px;color:#000;letter-spacing:-0.261px;left:665.5px;"><span id="t228">@500.6857&lt;71°</span></div>
<svg style="left:1317.3px;top:2102px;" width="2" height="34" viewBox="0 0 2 34"><rect x="0" y="0.0" width="1.4" height="1.4" fill="#a9a6a2"/><rect x="0" y="4.0" width="1.4" height="1.4" fill="#a9a6a2"/><rect x="0" y="8.0" width="1.4" height="1.4" fill="#a9a6a2"/><rect x="0" y="12.0" width="1.4" height="1.4" fill="#a9a6a2"/><rect x="0" y="16.0" width="1.4" height="1.4" fill="#a9a6a2"/><rect x="0" y="20.0" width="1.4" height="1.4" fill="#a9a6a2"/><rect x="0" y="24.0" width="1.4" height="1.4" fill="#a9a6a2"/><rect x="0" y="28.0" width="1.4" height="1.4" fill="#a9a6a2"/><rect x="0" y="32.0" width="1.4" height="1.4" fill="#a9a6a2"/></svg>
<svg style="left:2437.2px;top:2102px;" width="2" height="34" viewBox="0 0 2 34"><rect x="0" y="0.0" width="1.4" height="1.4" fill="#a9a6a2"/><rect x="0" y="4.0" width="1.4" height="1.4" fill="#a9a6a2"/><rect x="0" y="8.0" width="1.4" height="1.4" fill="#a9a6a2"/><rect x="0" y="12.0" width="1.4" height="1.4" fill="#a9a6a2"/><rect x="0" y="16.0" width="1.4" height="1.4" fill="#a9a6a2"/><rect x="0" y="20.0" width="1.4" height="1.4" fill="#a9a6a2"/><rect x="0" y="24.0" width="1.4" height="1.4" fill="#a9a6a2"/><rect x="0" y="28.0" width="1.4" height="1.4" fill="#a9a6a2"/><rect x="0" y="32.0" width="1.4" height="1.4" fill="#a9a6a2"/></svg>
<svg style="left:3281.3px;top:2102px;" width="2" height="34" viewBox="0 0 2 34"><rect x="0" y="0.0" width="1.4" height="1.4" fill="#a9a6a2"/><rect x="0" y="4.0" width="1.4" height="1.4" fill="#a9a6a2"/><rect x="0" y="8.0" width="1.4" height="1.4" fill="#a9a6a2"/><rect x="0" y="12.0" width="1.4" height="1.4" fill="#a9a6a2"/><rect x="0" y="16.0" width="1.4" height="1.4" fill="#a9a6a2"/><rect x="0" y="20.0" width="1.4" height="1.4" fill="#a9a6a2"/><rect x="0" y="24.0" width="1.4" height="1.4" fill="#a9a6a2"/><rect x="0" y="28.0" width="1.4" height="1.4" fill="#a9a6a2"/><rect x="0" y="32.0" width="1.4" height="1.4" fill="#a9a6a2"/></svg>
<div class="t" style="top:2107.80px;font-size:12px;line-height:16px;color:#000;letter-spacing:-0.046px;left:1721.5px;"><span id="t229">Select entity or region</span></div>
<div class="t" style="top:2107.80px;font-size:12px;line-height:16px;color:#000;letter-spacing:-0.003px;left:2443.3px;"><span id="t230">No entities selected.</span></div>
<svg style="left:1859px;top:2083.5px;" width="36" height="60" viewBox="0 0 36 60"><rect x="1" y="1.5" width="34" height="56.5" rx="17" fill="#fff" stroke="#444" stroke-width="1.7"/><path d="M1,25 C10,22 26,22 35,25" fill="none" stroke="#444" stroke-width="1.7"/><path d="M18,1.5 V5 M18,17.5 V23.3" stroke="#444" stroke-width="1.7"/><rect x="15.3" y="5" width="5.4" height="12.5" rx="2.7" fill="#fff" stroke="#444" stroke-width="1.7"/></svg>
<div style="left:0px;top:2158.3px;width:3840px;height:1.7px;background:#c2bfbb;"></div>
<svg style="left:2705.5px;top:950px;" width="16" height="24" viewBox="0 0 16 24"><path d="M1.2,1.2 V18.6 L5.4,14.9 L8.4,21.6 L11.2,20.4 L8.2,13.8 L13.6,13.6 Z" fill="#fff" stroke="#111" stroke-width="1.1" stroke-linejoin="round"/></svg>
</body></html>
